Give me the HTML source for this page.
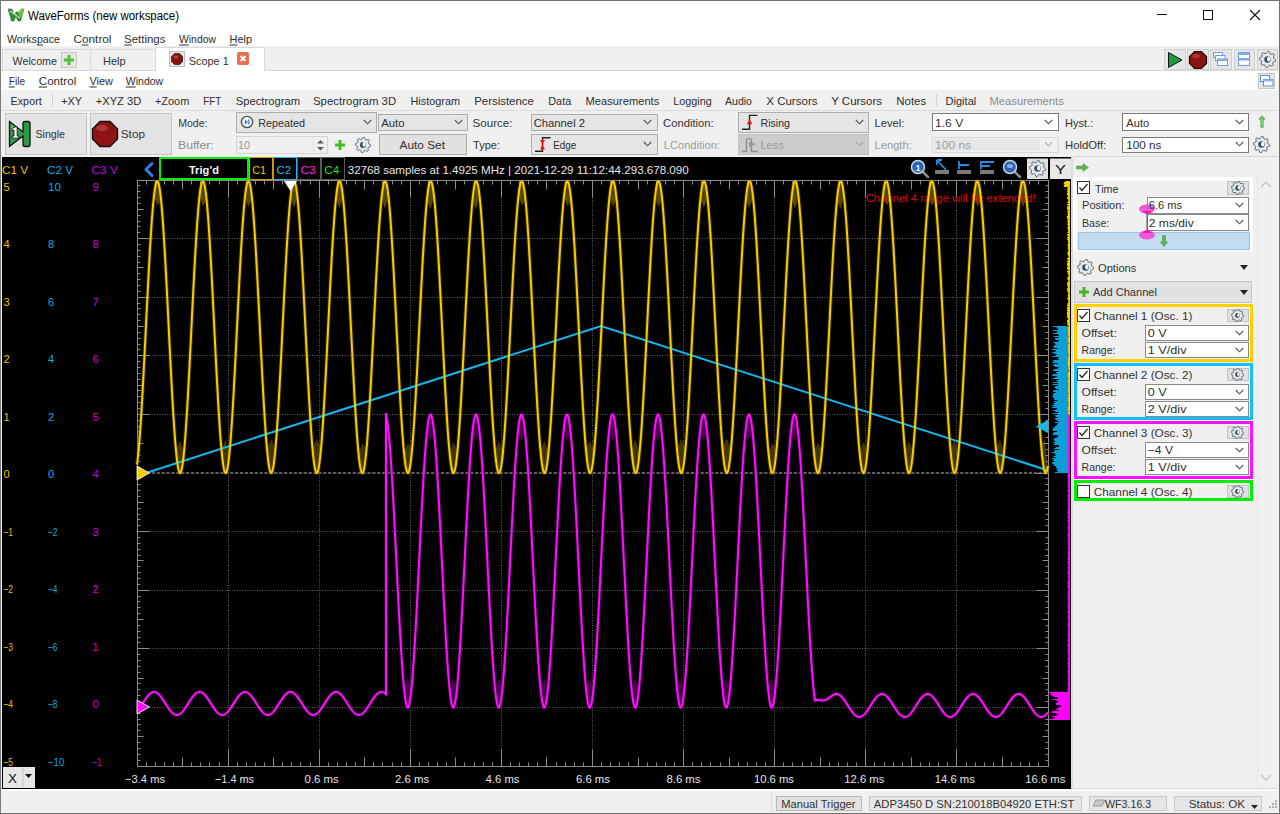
<!DOCTYPE html><html><head><meta charset="utf-8"><style>
*{margin:0;padding:0;box-sizing:border-box}
html,body{width:1280px;height:814px;overflow:hidden;background:#f0f0f0;font-family:"Liberation Sans",sans-serif;font-size:12px;color:#000}
.a{position:absolute;white-space:nowrap}
.t{position:absolute;white-space:nowrap;line-height:14px;font-size:12px}
.g{color:#8c8c8c}
.btn{position:absolute;background:#e1e1e1;border:1px solid #adadad}
.cmb{position:absolute;background:#fff;border:1px solid #7a7a7a}
.cmbg{position:absolute;background:#e5e5e5;border:1px solid #adadad}
.dis{position:absolute;background:#f0f0f0;border:1px solid #cccccc}

.u{text-decoration:underline}
</style></head><body><div class="a" style="left:0px;top:0px;width:1280px;height:46px;background:#fff;"></div><div class="a" style="left:0px;top:0px;width:1280px;height:1px;background:#6f6f6f;"></div><div class="a" style="left:0px;top:0px;width:1px;height:814px;background:#7a7a7a;"></div><div class="a" style="left:1279px;top:0px;width:1px;height:814px;background:#6f6f6f;"></div><div class="a" style="left:0px;top:813px;width:1280px;height:1px;background:#6f6f6f;"></div><svg class="a" style="left:7px;top:8px" width="18" height="15" viewBox="0 0 18 15">
<path d="M1 1 L5 1 L7.5 8 L9 4 L11 4 L12.5 8 L14 1 L17 1 L13.5 13 L11 13 L9 8 L7 13 L4.5 13 Z" fill="#1e9a3c" stroke="#555" stroke-width="0.6"/>
<path d="M3 3 L13 10" stroke="#b8f0a0" stroke-width="1.2"/>
<path d="M11 4 L14 1 L17 1 L13.5 10 Z" fill="#7cc83a"/>
</svg><div class="a" style="left:1157px;top:14px;width:10px;height:1px;background:#111;"></div><div class="a" style="left:1203px;top:10px;width:10px;height:10px;border:1px solid #111"></div><svg class="a" style="left:1249px;top:9px" width="12" height="12" viewBox="0 0 12 12"><path d="M1 1L11 11M11 1L1 11" stroke="#111" stroke-width="1.1"/></svg><div class="a" style="left:1px;top:46px;width:1277px;height:24px;background:#f0f0f0;"></div><div class="a" style="left:2px;top:49px;width:89px;height:22px;background:#f0f0f0;border:1px solid #d9d9d9;border-bottom:none"></div><div class="a" style="left:90px;top:49px;width:66px;height:22px;background:#f0f0f0;border:1px solid #d9d9d9;border-bottom:none"></div><div class="a" style="left:61px;top:52px;width:16px;height:16px;background:#e6e6e6;border:1px solid #c8c8c8"></div><svg class="a" style="left:62px;top:53px" width="14" height="14" viewBox="0 0 14 14"><path d="M7 2V12M2 7H12" stroke="#4fc42e" stroke-width="3"/></svg><div class="a" style="left:155px;top:47px;width:110px;height:24px;background:#fff;border:1px solid #d9d9d9;border-bottom:none"></div><div class="a" style="left:169px;top:51px;width:16px;height:16px;background:#e6e6e6;border:1px solid #bdbdbd"></div><svg class="a" style="left:171px;top:53px" width="12" height="12" viewBox="0 0 12 12"><path d="M3.5 0.5H8.5L11.5 3.5V8.5L8.5 11.5H3.5L0.5 8.5V3.5Z" fill="#8b1010" stroke="#222" stroke-width="0.8"/><ellipse cx="5" cy="4" rx="2.5" ry="1.5" fill="#d46060" opacity="0.6"/></svg><div class="a" style="left:237px;top:52px;width:12px;height:13px;background:#e8704a;border-radius:2px"></div><svg class="a" style="left:237px;top:52px" width="12" height="13" viewBox="0 0 12 13"><path d="M3.5 4L8.5 9M8.5 4L3.5 9" stroke="#fff" stroke-width="1.8"/></svg><div class="a" style="left:1px;top:70px;width:1277px;height:20px;background:#fff;"></div><div class="a" style="left:1px;top:70px;width:155px;height:1px;background:#dadada;"></div><div class="a" style="left:264px;top:70px;width:1014px;height:1px;background:#dadada;"></div><div class="a" style="left:1258px;top:73px;width:17px;height:16px;background:#e6e6e6;border:1px solid #c8c8c8"></div><svg class="a" style="left:1260px;top:75px" width="14" height="12" viewBox="0 0 14 12"><rect x="0.5" y="0.5" width="9" height="6" fill="#fff" stroke="#5b8fd6"/><rect x="3.5" y="4.5" width="9.5" height="6.5" fill="#fff" stroke="#5b8fd6"/><rect x="3.5" y="4.5" width="9.5" height="2" fill="#8fb5e8"/></svg><div class="btn" style="left:1164px;top:49px;width:22px;height:21px;background:#e6e6e6;border-color:#cfcfcf"></div><div class="btn" style="left:1187px;top:49px;width:22px;height:21px;background:#e6e6e6;border-color:#cfcfcf"></div><div class="btn" style="left:1210px;top:49px;width:22px;height:21px;background:#e6e6e6;border-color:#cfcfcf"></div><div class="btn" style="left:1234px;top:49px;width:21px;height:21px;background:#e6e6e6;border-color:#cfcfcf"></div><div class="btn" style="left:1257px;top:49px;width:21px;height:21px;background:#e6e6e6;border-color:#cfcfcf"></div><svg class="a" style="left:1166px;top:51px" width="18" height="18" viewBox="0 0 18 18"><path d="M2.5 1.5L16 9L2.5 16.5Z" fill="#1f9a3a" stroke="#111" stroke-width="1"/></svg><svg class="a" style="left:1188px;top:50px" width="20" height="20" viewBox="0 0 20 20"><path d="M6.5 1.5H13.5L18.5 6.5V13.5L13.5 18.5H6.5L1.5 13.5V6.5Z" fill="#8b1212" stroke="#111" stroke-width="1.2"/><ellipse cx="8" cy="6" rx="4" ry="2" fill="#c85a5a" opacity="0.5"/></svg><svg class="a" style="left:1213px;top:52px" width="16" height="15" viewBox="0 0 16 15"><rect x="0.5" y="0.5" width="9" height="5" fill="#fff" stroke="#6c9ee0"/><rect x="2.5" y="3.5" width="9.5" height="5" fill="#fff" stroke="#6c9ee0"/><rect x="4.5" y="7" width="10" height="6.5" fill="#fff" stroke="#6c9ee0"/><rect x="4.5" y="7" width="10" height="2" fill="#7ea9e6"/></svg><svg class="a" style="left:1237px;top:52px" width="15" height="15" viewBox="0 0 15 15"><rect x="1.5" y="0.5" width="11" height="13" fill="#fff" stroke="#6c9ee0"/><rect x="1.5" y="0.5" width="11" height="2.5" fill="#7ea9e6"/><rect x="1.5" y="6" width="11" height="2.5" fill="#7ea9e6"/></svg><svg class="a" style="left:1259px;top:51px" width="17" height="17" viewBox="0 0 17 17"><path d="M8.50,0.34 L10.09,0.50 L10.91,2.69 L11.99,3.27 L14.27,2.73 L15.28,3.97 L14.31,6.09 L14.67,7.27 L16.66,8.50 L16.50,10.09 L14.31,10.91 L13.73,11.99 L14.27,14.27 L13.03,15.28 L10.91,14.31 L9.73,14.67 L8.50,16.66 L6.91,16.50 L6.09,14.31 L5.01,13.73 L2.73,14.27 L1.72,13.03 L2.69,10.91 L2.33,9.73 L0.34,8.50 L0.50,6.91 L2.69,6.09 L3.27,5.01 L2.73,2.73 L3.97,1.72 L6.09,2.69 L7.27,2.33Z" fill="#e4e9ed" stroke="#60707b" stroke-width="1" stroke-linejoin="round"/><circle cx="8.5" cy="8.5" r="3.23" fill="#3c4c57"/><ellipse cx="9.69" cy="7.99" rx="1.70" ry="2.55" fill="#f4f6f8"/></svg><div class="a" style="left:1px;top:90px;width:1277px;height:20px;background:#f0f0f0;"></div><div class="a" style="left:1px;top:110px;width:1277px;height:1px;background:#dcdcdc;"></div><div class="a" style="left:52px;top:94px;width:1px;height:12px;background:#d0d0d0;"></div><div class="a" style="left:936px;top:94px;width:1px;height:12px;background:#d0d0d0;"></div><div class="btn" style="left:5px;top:113px;width:82px;height:42px;background:#e3e3e3;border-color:#c4c4c4"></div><svg class="a" style="left:8px;top:120px" width="24" height="28" viewBox="0 0 24 28"><path d="M1.5 1.5L15 12V3.5Q15 1.5 17 1.5H20Q22 1.5 22 3.5V24.5Q22 26.5 20 26.5H17Q15 26.5 15 24.5V16L1.5 26.5Z" fill="#2e9a48" stroke="#111" stroke-width="1.3"/><path d="M3 4 L12 11 L3 11Z" fill="#8fd0a0" opacity="0.6"/><path d="M4 8.5L7.5 6.8H9.2V16H10.8V18.2H4.2V16H6V10L4 10.8Z" fill="#fff" stroke="#111" stroke-width="0.9" stroke-linejoin="round"/></svg><div class="btn" style="left:90px;top:113px;width:82px;height:42px;background:#e3e3e3;border-color:#c4c4c4"></div><svg class="a" style="left:91px;top:120px" width="28" height="28" viewBox="0 0 28 28"><path d="M9 1.5H19L26.5 9V19L19 26.5H9L1.5 19V9Z" fill="#8e1414" stroke="#111" stroke-width="1.4"/><ellipse cx="11" cy="8" rx="6" ry="3" fill="#c86464" opacity="0.45"/></svg><div class="cmbg" style="left:236px;top:112px;width:141px;height:21px;background:#e5e5e5;border-color:#adadad"></div><svg class="a" style="left:240px;top:115px" width="14" height="14" viewBox="0 0 14 14"><circle cx="7" cy="7" r="5.6" fill="#f4f6fa" stroke="#555" stroke-width="1.4"/><path d="M4.8 4.5L8 7L4.8 9.5Z" fill="#3a7ad8"/><path d="M8.8 4.5V9.5" stroke="#3a7ad8" stroke-width="1.2"/></svg><svg class="a" style="left:362.5px;top:119px" width="9" height="6" viewBox="0 0 9 6"><path d="M0.8 1L4.5 4.8L8.2 1" fill="none" stroke="#555" stroke-width="1.15"/></svg><div class="cmbg" style="left:378px;top:114px;width:90px;height:17px;background:#e5e5e5;border-color:#adadad"></div><svg class="a" style="left:453.5px;top:119px" width="9" height="6" viewBox="0 0 9 6"><path d="M0.8 1L4.5 4.8L8.2 1" fill="none" stroke="#555" stroke-width="1.15"/></svg><div class="dis" style="left:236px;top:136px;width:92px;height:18px;background:#f0f0f0;border-color:#d4d4d4"></div><svg class="a" style="left:316px;top:138px" width="9" height="14" viewBox="0 0 9 14"><path d="M1 5.5L4.5 2L8 5.5ZM1 9L4.5 12.5L8 9Z" fill="#5a5a5a"/></svg><div class="a" style="left:313px;top:137px;width:1px;height:16px;background:#e0e0e0;"></div><svg class="a" style="left:334px;top:139px" width="12" height="12" viewBox="0 0 12 12"><path d="M6 1V11M1 6H11" stroke="#48b828" stroke-width="3"/></svg><svg class="a" style="left:355px;top:137px" width="16" height="16" viewBox="0 0 16 16"><path d="M8.00,0.32 L9.50,0.47 L10.27,2.53 L11.29,3.08 L13.43,2.57 L14.39,3.73 L13.47,5.73 L13.81,6.85 L15.68,8.00 L15.53,9.50 L13.47,10.27 L12.92,11.29 L13.43,13.43 L12.27,14.39 L10.27,13.47 L9.15,13.81 L8.00,15.68 L6.50,15.53 L5.73,13.47 L4.71,12.92 L2.57,13.43 L1.61,12.27 L2.53,10.27 L2.19,9.15 L0.32,8.00 L0.47,6.50 L2.53,5.73 L3.08,4.71 L2.57,2.57 L3.73,1.61 L5.73,2.53 L6.85,2.19Z" fill="#e4e9ed" stroke="#60707b" stroke-width="1" stroke-linejoin="round"/><circle cx="8.0" cy="8.0" r="3.04" fill="#3c4c57"/><ellipse cx="9.12" cy="7.52" rx="1.60" ry="2.40" fill="#f4f6f8"/></svg><div class="btn" style="left:379px;top:134px;width:88px;height:21px;background:#e1e1e1;border-color:#adadad"></div><div class="cmbg" style="left:531px;top:114px;width:127px;height:17px;background:#e5e5e5;border-color:#adadad"></div><svg class="a" style="left:642.5px;top:119px" width="9" height="6" viewBox="0 0 9 6"><path d="M0.8 1L4.5 4.8L8.2 1" fill="none" stroke="#555" stroke-width="1.15"/></svg><div class="cmbg" style="left:531px;top:134px;width:127px;height:21px;background:#e5e5e5;border-color:#adadad"></div><svg class="a" style="left:534px;top:136px" width="18" height="17" viewBox="0 0 18 17"><path d="M1 15.3H8.5V1.7H16.5" fill="none" stroke="#222" stroke-width="1.4"/><path d="M6 4H11L8.5 8.6Z M6 13.3H11L8.5 8.6Z" fill="#ff1010"/></svg><svg class="a" style="left:642.5px;top:141px" width="9" height="6" viewBox="0 0 9 6"><path d="M0.8 1L4.5 4.8L8.2 1" fill="none" stroke="#555" stroke-width="1.15"/></svg><div class="cmbg" style="left:738px;top:112px;width:131px;height:21px;background:#e5e5e5;border-color:#adadad"></div><svg class="a" style="left:741px;top:114px" width="18" height="17" viewBox="0 0 18 17"><path d="M1 15.2H8.5V1.4H16.5" fill="none" stroke="#222" stroke-width="1.4"/><path d="M5.8 10.2H11.2L8.5 5Z" fill="#ff1010"/></svg><svg class="a" style="left:854.5px;top:119px" width="9" height="6" viewBox="0 0 9 6"><path d="M0.8 1L4.5 4.8L8.2 1" fill="none" stroke="#555" stroke-width="1.15"/></svg><div class="a" style="left:738px;top:134px;width:131px;height:21px;background:#cccccc;border:1px solid #c0c0c0"></div><svg class="a" style="left:741px;top:136px" width="18" height="17" viewBox="0 0 18 17"><path d="M1 15.5H5.5V4Q5.5 2.6 7.5 2.6H8.5Q10.5 2.6 10.5 4V15.5H16.5" fill="none" stroke="#8c8c8c" stroke-width="1.4"/><path d="M8 5.3L15 8.3L8 11.3Z" fill="#9a9a9a"/></svg><svg class="a" style="left:854.5px;top:141px" width="9" height="6" viewBox="0 0 9 6"><path d="M0.8 1L4.5 4.8L8.2 1" fill="none" stroke="#a8a8a8" stroke-width="1.15"/></svg><div class="cmb" style="left:932px;top:113px;width:127px;height:18px;background:#fff;border-color:#7a7a7a"></div><svg class="a" style="left:1043.5px;top:119px" width="9" height="6" viewBox="0 0 9 6"><path d="M0.8 1L4.5 4.8L8.2 1" fill="none" stroke="#555" stroke-width="1.15"/></svg><div class="a" style="left:932px;top:137px;width:127px;height:16px;background:#f0f0f0;border:1px solid #d8d8d8"></div><div class="a" style="left:934px;top:139px;width:106px;height:12px;background:#e6e6e6;"></div><svg class="a" style="left:1043.5px;top:141px" width="9" height="6" viewBox="0 0 9 6"><path d="M0.8 1L4.5 4.8L8.2 1" fill="none" stroke="#b0b0b0" stroke-width="1.15"/></svg><div class="cmb" style="left:1122px;top:113px;width:127px;height:18px;background:#fff;border-color:#7a7a7a"></div><svg class="a" style="left:1234.5px;top:119px" width="9" height="6" viewBox="0 0 9 6"><path d="M0.8 1L4.5 4.8L8.2 1" fill="none" stroke="#555" stroke-width="1.15"/></svg><div class="cmb" style="left:1122px;top:137px;width:127px;height:16px;background:#fff;border-color:#7a7a7a"></div><svg class="a" style="left:1234.5px;top:141px" width="9" height="6" viewBox="0 0 9 6"><path d="M0.8 1L4.5 4.8L8.2 1" fill="none" stroke="#555" stroke-width="1.15"/></svg><svg class="a" style="left:1258px;top:115px" width="8" height="13" viewBox="0 0 8 13"><path d="M4 0.8L0.8 4.2H2.8V12.3H5.2V4.2H7.2Z" fill="#5cc05a" stroke="#3f9a40" stroke-width="0.6"/><path d="M4 3V11" stroke="#a8e8a0" stroke-width="0.8"/></svg><svg class="a" style="left:1253px;top:136px" width="17" height="17" viewBox="0 0 17 17"><path d="M8.50,0.34 L10.09,0.50 L10.91,2.69 L11.99,3.27 L14.27,2.73 L15.28,3.97 L14.31,6.09 L14.67,7.27 L16.66,8.50 L16.50,10.09 L14.31,10.91 L13.73,11.99 L14.27,14.27 L13.03,15.28 L10.91,14.31 L9.73,14.67 L8.50,16.66 L6.91,16.50 L6.09,14.31 L5.01,13.73 L2.73,14.27 L1.72,13.03 L2.69,10.91 L2.33,9.73 L0.34,8.50 L0.50,6.91 L2.69,6.09 L3.27,5.01 L2.73,2.73 L3.97,1.72 L6.09,2.69 L7.27,2.33Z" fill="#e4e9ed" stroke="#60707b" stroke-width="1" stroke-linejoin="round"/><circle cx="8.5" cy="8.5" r="3.23" fill="#3c4c57"/><ellipse cx="9.69" cy="7.99" rx="1.70" ry="2.55" fill="#f4f6f8"/></svg><div class="a" style="left:2px;top:157px;width:1069px;height:632px;background:#000;"></div><svg class="a" style="left:0;top:0" width="1280" height="814" viewBox="0 0 1280 814"><line x1="228.5" y1="180" x2="228.5" y2="766" stroke="#626262" stroke-width="1" stroke-dasharray="1 1.5"/><line x1="319.5" y1="180" x2="319.5" y2="766" stroke="#626262" stroke-width="1" stroke-dasharray="1 1.5"/><line x1="410.5" y1="180" x2="410.5" y2="766" stroke="#626262" stroke-width="1" stroke-dasharray="1 1.5"/><line x1="501.5" y1="180" x2="501.5" y2="766" stroke="#626262" stroke-width="1" stroke-dasharray="1 1.5"/><line x1="592.5" y1="180" x2="592.5" y2="766" stroke="#626262" stroke-width="1" stroke-dasharray="1 1.5"/><line x1="683.5" y1="180" x2="683.5" y2="766" stroke="#626262" stroke-width="1" stroke-dasharray="1 1.5"/><line x1="774.5" y1="180" x2="774.5" y2="766" stroke="#626262" stroke-width="1" stroke-dasharray="1 1.5"/><line x1="865.5" y1="180" x2="865.5" y2="766" stroke="#626262" stroke-width="1" stroke-dasharray="1 1.5"/><line x1="956.5" y1="180" x2="956.5" y2="766" stroke="#626262" stroke-width="1" stroke-dasharray="1 1.5"/><line x1="137" y1="238.5" x2="1048" y2="238.5" stroke="#626262" stroke-width="1" stroke-dasharray="1 1.5"/><line x1="137" y1="297.5" x2="1048" y2="297.5" stroke="#626262" stroke-width="1" stroke-dasharray="1 1.5"/><line x1="137" y1="355.5" x2="1048" y2="355.5" stroke="#626262" stroke-width="1" stroke-dasharray="1 1.5"/><line x1="137" y1="414.5" x2="1048" y2="414.5" stroke="#626262" stroke-width="1" stroke-dasharray="1 1.5"/><line x1="137" y1="531.5" x2="1048" y2="531.5" stroke="#626262" stroke-width="1" stroke-dasharray="1 1.5"/><line x1="137" y1="590.5" x2="1048" y2="590.5" stroke="#626262" stroke-width="1" stroke-dasharray="1 1.5"/><line x1="137" y1="648.5" x2="1048" y2="648.5" stroke="#626262" stroke-width="1" stroke-dasharray="1 1.5"/><line x1="137" y1="707.5" x2="1048" y2="707.5" stroke="#626262" stroke-width="1" stroke-dasharray="1 1.5"/><line x1="137" y1="473" x2="1048" y2="473" stroke="#7c7c7c" stroke-width="1.6" stroke-dasharray="3.3 1.6"/><rect x="137.5" y="180.5" width="911" height="586" fill="none" stroke="#8c8c8c" stroke-width="1"/><path d="M146.5 766.5v-4M146.5 180.5v4M155.5 766.5v-4M155.5 180.5v4M164.5 766.5v-4M164.5 180.5v4M173.5 766.5v-4M173.5 180.5v4M182.5 766.5v-9M182.5 180.5v9M191.5 766.5v-4M191.5 180.5v4M200.5 766.5v-4M200.5 180.5v4M209.5 766.5v-4M209.5 180.5v4M219.5 766.5v-4M219.5 180.5v4M228.5 766.5v-17M228.5 180.5v17M237.5 766.5v-4M237.5 180.5v4M246.5 766.5v-4M246.5 180.5v4M255.5 766.5v-4M255.5 180.5v4M264.5 766.5v-4M264.5 180.5v4M273.5 766.5v-9M273.5 180.5v9M282.5 766.5v-4M282.5 180.5v4M291.5 766.5v-4M291.5 180.5v4M300.5 766.5v-4M300.5 180.5v4M310.5 766.5v-4M310.5 180.5v4M319.5 766.5v-17M319.5 180.5v17M328.5 766.5v-4M328.5 180.5v4M337.5 766.5v-4M337.5 180.5v4M346.5 766.5v-4M346.5 180.5v4M355.5 766.5v-4M355.5 180.5v4M364.5 766.5v-9M364.5 180.5v9M373.5 766.5v-4M373.5 180.5v4M382.5 766.5v-4M382.5 180.5v4M392.5 766.5v-4M392.5 180.5v4M401.5 766.5v-4M401.5 180.5v4M410.5 766.5v-17M410.5 180.5v17M419.5 766.5v-4M419.5 180.5v4M428.5 766.5v-4M428.5 180.5v4M437.5 766.5v-4M437.5 180.5v4M446.5 766.5v-4M446.5 180.5v4M455.5 766.5v-9M455.5 180.5v9M464.5 766.5v-4M464.5 180.5v4M474.5 766.5v-4M474.5 180.5v4M483.5 766.5v-4M483.5 180.5v4M492.5 766.5v-4M492.5 180.5v4M501.5 766.5v-17M501.5 180.5v17M510.5 766.5v-4M510.5 180.5v4M519.5 766.5v-4M519.5 180.5v4M528.5 766.5v-4M528.5 180.5v4M537.5 766.5v-4M537.5 180.5v4M546.5 766.5v-9M546.5 180.5v9M556.5 766.5v-4M556.5 180.5v4M565.5 766.5v-4M565.5 180.5v4M574.5 766.5v-4M574.5 180.5v4M583.5 766.5v-4M583.5 180.5v4M592.5 766.5v-17M592.5 180.5v17M601.5 766.5v-4M601.5 180.5v4M610.5 766.5v-4M610.5 180.5v4M619.5 766.5v-4M619.5 180.5v4M628.5 766.5v-4M628.5 180.5v4M638.5 766.5v-9M638.5 180.5v9M647.5 766.5v-4M647.5 180.5v4M656.5 766.5v-4M656.5 180.5v4M665.5 766.5v-4M665.5 180.5v4M674.5 766.5v-4M674.5 180.5v4M683.5 766.5v-17M683.5 180.5v17M692.5 766.5v-4M692.5 180.5v4M701.5 766.5v-4M701.5 180.5v4M710.5 766.5v-4M710.5 180.5v4M720.5 766.5v-4M720.5 180.5v4M729.5 766.5v-9M729.5 180.5v9M738.5 766.5v-4M738.5 180.5v4M747.5 766.5v-4M747.5 180.5v4M756.5 766.5v-4M756.5 180.5v4M765.5 766.5v-4M765.5 180.5v4M774.5 766.5v-17M774.5 180.5v17M783.5 766.5v-4M783.5 180.5v4M792.5 766.5v-4M792.5 180.5v4M802.5 766.5v-4M802.5 180.5v4M811.5 766.5v-4M811.5 180.5v4M820.5 766.5v-9M820.5 180.5v9M829.5 766.5v-4M829.5 180.5v4M838.5 766.5v-4M838.5 180.5v4M847.5 766.5v-4M847.5 180.5v4M856.5 766.5v-4M856.5 180.5v4M865.5 766.5v-17M865.5 180.5v17M874.5 766.5v-4M874.5 180.5v4M884.5 766.5v-4M884.5 180.5v4M893.5 766.5v-4M893.5 180.5v4M902.5 766.5v-4M902.5 180.5v4M911.5 766.5v-9M911.5 180.5v9M920.5 766.5v-4M920.5 180.5v4M929.5 766.5v-4M929.5 180.5v4M938.5 766.5v-4M938.5 180.5v4M947.5 766.5v-4M947.5 180.5v4M956.5 766.5v-17M956.5 180.5v17M966.5 766.5v-4M966.5 180.5v4M975.5 766.5v-4M975.5 180.5v4M984.5 766.5v-4M984.5 180.5v4M993.5 766.5v-4M993.5 180.5v4M1002.5 766.5v-9M1002.5 180.5v9M1011.5 766.5v-4M1011.5 180.5v4M1020.5 766.5v-4M1020.5 180.5v4M1029.5 766.5v-4M1029.5 180.5v4M1038.5 766.5v-4M1038.5 180.5v4M137.5 185.5h3M1048.5 185.5h-3M137.5 191.5h3M1048.5 191.5h-3M137.5 197.5h3M1048.5 197.5h-3M137.5 203.5h3M1048.5 203.5h-3M137.5 209.5h6M1048.5 209.5h-6M137.5 215.5h3M1048.5 215.5h-3M137.5 221.5h3M1048.5 221.5h-3M137.5 226.5h3M1048.5 226.5h-3M137.5 232.5h3M1048.5 232.5h-3M137.5 238.5h12M1048.5 238.5h-12M137.5 244.5h3M1048.5 244.5h-3M137.5 250.5h3M1048.5 250.5h-3M137.5 256.5h3M1048.5 256.5h-3M137.5 262.5h3M1048.5 262.5h-3M137.5 267.5h6M1048.5 267.5h-6M137.5 273.5h3M1048.5 273.5h-3M137.5 279.5h3M1048.5 279.5h-3M137.5 285.5h3M1048.5 285.5h-3M137.5 291.5h3M1048.5 291.5h-3M137.5 297.5h12M1048.5 297.5h-12M137.5 303.5h3M1048.5 303.5h-3M137.5 308.5h3M1048.5 308.5h-3M137.5 314.5h3M1048.5 314.5h-3M137.5 320.5h3M1048.5 320.5h-3M137.5 326.5h6M1048.5 326.5h-6M137.5 332.5h3M1048.5 332.5h-3M137.5 338.5h3M1048.5 338.5h-3M137.5 344.5h3M1048.5 344.5h-3M137.5 349.5h3M1048.5 349.5h-3M137.5 355.5h12M1048.5 355.5h-12M137.5 361.5h3M1048.5 361.5h-3M137.5 367.5h3M1048.5 367.5h-3M137.5 373.5h3M1048.5 373.5h-3M137.5 379.5h3M1048.5 379.5h-3M137.5 385.5h6M1048.5 385.5h-6M137.5 390.5h3M1048.5 390.5h-3M137.5 396.5h3M1048.5 396.5h-3M137.5 402.5h3M1048.5 402.5h-3M137.5 408.5h3M1048.5 408.5h-3M137.5 414.5h12M1048.5 414.5h-12M137.5 420.5h3M1048.5 420.5h-3M137.5 426.5h3M1048.5 426.5h-3M137.5 431.5h3M1048.5 431.5h-3M137.5 437.5h3M1048.5 437.5h-3M137.5 443.5h6M1048.5 443.5h-6M137.5 449.5h3M1048.5 449.5h-3M137.5 455.5h3M1048.5 455.5h-3M137.5 461.5h3M1048.5 461.5h-3M137.5 467.5h3M1048.5 467.5h-3M137.5 473.5h12M1048.5 473.5h-12M137.5 478.5h3M1048.5 478.5h-3M137.5 484.5h3M1048.5 484.5h-3M137.5 490.5h3M1048.5 490.5h-3M137.5 496.5h3M1048.5 496.5h-3M137.5 502.5h6M1048.5 502.5h-6M137.5 508.5h3M1048.5 508.5h-3M137.5 514.5h3M1048.5 514.5h-3M137.5 519.5h3M1048.5 519.5h-3M137.5 525.5h3M1048.5 525.5h-3M137.5 531.5h12M1048.5 531.5h-12M137.5 537.5h3M1048.5 537.5h-3M137.5 543.5h3M1048.5 543.5h-3M137.5 549.5h3M1048.5 549.5h-3M137.5 555.5h3M1048.5 555.5h-3M137.5 560.5h6M1048.5 560.5h-6M137.5 566.5h3M1048.5 566.5h-3M137.5 572.5h3M1048.5 572.5h-3M137.5 578.5h3M1048.5 578.5h-3M137.5 584.5h3M1048.5 584.5h-3M137.5 590.5h12M1048.5 590.5h-12M137.5 596.5h3M1048.5 596.5h-3M137.5 601.5h3M1048.5 601.5h-3M137.5 607.5h3M1048.5 607.5h-3M137.5 613.5h3M1048.5 613.5h-3M137.5 619.5h6M1048.5 619.5h-6M137.5 625.5h3M1048.5 625.5h-3M137.5 631.5h3M1048.5 631.5h-3M137.5 637.5h3M1048.5 637.5h-3M137.5 642.5h3M1048.5 642.5h-3M137.5 648.5h12M1048.5 648.5h-12M137.5 654.5h3M1048.5 654.5h-3M137.5 660.5h3M1048.5 660.5h-3M137.5 666.5h3M1048.5 666.5h-3M137.5 672.5h3M1048.5 672.5h-3M137.5 678.5h6M1048.5 678.5h-6M137.5 683.5h3M1048.5 683.5h-3M137.5 689.5h3M1048.5 689.5h-3M137.5 695.5h3M1048.5 695.5h-3M137.5 701.5h3M1048.5 701.5h-3M137.5 707.5h12M1048.5 707.5h-12M137.5 713.5h3M1048.5 713.5h-3M137.5 719.5h3M1048.5 719.5h-3M137.5 724.5h3M1048.5 724.5h-3M137.5 730.5h3M1048.5 730.5h-3M137.5 736.5h6M1048.5 736.5h-6M137.5 742.5h3M1048.5 742.5h-3M137.5 748.5h3M1048.5 748.5h-3M137.5 754.5h3M1048.5 754.5h-3M137.5 760.5h3M1048.5 760.5h-3" stroke="#8c8c8c" stroke-width="1" fill="none"/><path d="M154.00,195.86 L154.50,191.75 L155.00,188.28 L155.50,185.48 L156.00,183.34 L156.50,181.89 L157.00,181.50 L157.50,181.50 L158.00,181.68 L158.50,182.99 L159.00,184.99 L159.50,187.67 L160.00,191.01 L160.50,194.99 L161.00,199.60 L157.50,205.86ZM199.50,196.40 L200.00,192.21 L200.50,188.66 L201.00,185.78 L201.50,183.56 L202.00,182.03 L202.50,181.50 L203.00,181.50 L203.50,181.57 L204.00,182.80 L204.50,184.72 L205.00,187.31 L205.50,190.57 L206.00,194.48 L206.50,199.01 L203.00,206.40ZM245.00,196.94 L245.50,192.68 L246.00,189.06 L246.50,186.09 L247.00,183.79 L247.50,182.17 L248.00,181.50 L248.50,181.50 L249.00,181.50 L249.50,182.62 L250.00,184.45 L250.50,186.97 L251.00,190.14 L251.50,193.97 L252.00,198.44 L248.50,206.94ZM290.50,197.49 L291.00,193.16 L291.50,189.46 L292.00,186.41 L292.50,184.03 L293.00,182.33 L293.50,181.50 L294.00,181.50 L294.50,181.50 L295.00,182.44 L295.50,184.20 L296.00,186.63 L296.50,189.73 L297.00,193.48 L297.50,197.87 L294.00,207.49ZM336.00,198.06 L336.50,193.64 L337.00,189.87 L337.50,186.74 L338.00,184.28 L338.50,182.50 L339.00,181.50 L339.50,181.50 L340.00,181.50 L340.50,182.28 L341.00,183.95 L341.50,186.30 L342.00,189.32 L342.50,193.00 L343.00,197.31 L339.50,208.06ZM381.50,198.63 L382.00,194.14 L382.50,190.29 L383.00,187.08 L383.50,184.54 L384.00,182.68 L384.50,181.50 L385.00,181.50 L385.50,181.50 L386.00,182.12 L386.50,183.71 L387.00,185.98 L387.50,188.92 L388.00,192.52 L388.50,196.76 L385.00,208.63ZM427.00,199.21 L427.50,194.65 L428.00,190.71 L428.50,187.43 L429.00,184.81 L429.50,182.86 L430.00,181.60 L430.50,181.50 L431.00,181.50 L431.50,181.98 L432.00,183.49 L432.50,185.68 L433.00,188.54 L433.50,192.06 L434.00,196.22 L430.50,209.21ZM472.50,199.80 L473.00,195.16 L473.50,191.15 L474.00,187.79 L474.50,185.09 L475.00,183.06 L475.50,181.72 L476.00,181.50 L476.50,181.50 L477.00,181.84 L477.50,183.27 L478.00,185.38 L478.50,188.16 L479.00,191.60 L479.50,195.68 L476.00,209.80ZM518.50,195.68 L519.00,191.60 L519.50,188.16 L520.00,185.38 L520.50,183.27 L521.00,181.84 L521.50,181.50 L522.00,181.50 L522.50,181.72 L523.00,183.06 L523.50,185.09 L524.00,187.79 L524.50,191.15 L525.00,195.16 L525.50,199.80 L522.00,205.68ZM564.00,196.22 L564.50,192.06 L565.00,188.54 L565.50,185.68 L566.00,183.49 L566.50,181.98 L567.00,181.50 L567.50,181.50 L568.00,181.60 L568.50,182.86 L569.00,184.81 L569.50,187.43 L570.00,190.71 L570.50,194.65 L571.00,199.21 L567.50,206.22ZM609.50,196.76 L610.00,192.52 L610.50,188.92 L611.00,185.98 L611.50,183.71 L612.00,182.12 L612.50,181.50 L613.00,181.50 L613.50,181.50 L614.00,182.68 L614.50,184.54 L615.00,187.08 L615.50,190.29 L616.00,194.14 L616.50,198.63 L613.00,206.76ZM655.00,197.31 L655.50,193.00 L656.00,189.32 L656.50,186.30 L657.00,183.95 L657.50,182.28 L658.00,181.50 L658.50,181.50 L659.00,181.50 L659.50,182.50 L660.00,184.28 L660.50,186.74 L661.00,189.87 L661.50,193.64 L662.00,198.06 L658.50,207.31ZM700.50,197.87 L701.00,193.48 L701.50,189.73 L702.00,186.63 L702.50,184.20 L703.00,182.44 L703.50,181.50 L704.00,181.50 L704.50,181.50 L705.00,182.33 L705.50,184.03 L706.00,186.41 L706.50,189.46 L707.00,193.16 L707.50,197.49 L704.00,207.87ZM746.00,198.44 L746.50,193.97 L747.00,190.14 L747.50,186.97 L748.00,184.45 L748.50,182.62 L749.00,181.50 L749.50,181.50 L750.00,181.50 L750.50,182.17 L751.00,183.79 L751.50,186.09 L752.00,189.06 L752.50,192.68 L753.00,196.94 L749.50,208.44ZM791.50,199.01 L792.00,194.48 L792.50,190.57 L793.00,187.31 L793.50,184.72 L794.00,182.80 L794.50,181.57 L795.00,181.50 L795.50,181.50 L796.00,182.03 L796.50,183.56 L797.00,185.78 L797.50,188.66 L798.00,192.21 L798.50,196.40 L795.00,209.01ZM837.00,199.60 L837.50,194.99 L838.00,191.01 L838.50,187.67 L839.00,184.99 L839.50,182.99 L840.00,181.68 L840.50,181.50 L841.00,181.50 L841.50,181.89 L842.00,183.34 L842.50,185.48 L843.00,188.28 L843.50,191.75 L844.00,195.86 L840.50,209.60ZM883.00,195.51 L883.50,191.45 L884.00,188.03 L884.50,185.28 L885.00,183.20 L885.50,181.80 L886.00,181.50 L886.50,181.50 L887.00,181.76 L887.50,183.13 L888.00,185.18 L888.50,187.91 L889.00,191.30 L889.50,195.33 L890.00,199.99 L886.50,205.51ZM928.50,196.04 L929.00,191.90 L929.50,188.41 L930.00,185.57 L930.50,183.41 L931.00,181.93 L931.50,181.50 L932.00,181.50 L932.50,181.64 L933.00,182.93 L933.50,184.90 L934.00,187.55 L934.50,190.86 L935.00,194.82 L935.50,199.40 L932.00,206.04ZM974.00,196.58 L974.50,192.37 L975.00,188.79 L975.50,185.88 L976.00,183.64 L976.50,182.07 L977.00,181.50 L977.50,181.50 L978.00,181.53 L978.50,182.74 L979.00,184.63 L979.50,187.20 L980.00,190.43 L980.50,194.31 L981.00,198.82 L977.50,206.58ZM1019.50,197.12 L1020.00,192.84 L1020.50,189.19 L1021.00,186.19 L1021.50,183.87 L1022.00,182.23 L1022.50,181.50 L1023.00,181.50 L1023.50,181.50 L1024.00,182.56 L1024.50,184.37 L1025.00,186.85 L1025.50,190.00 L1026.00,193.81 L1026.50,198.25 L1023.00,207.12Z" fill="#806a00" opacity="0.65"/><path d="M137.00,464.54 L137.50,460.84 L138.00,456.51 L138.50,451.55 L137.75,454.54ZM176.00,450.49 L176.50,455.56 L177.00,460.03 L177.50,463.86 L178.00,467.03 L178.50,469.55 L179.00,471.38 L179.50,472.53 L180.00,472.99 L180.50,472.76 L181.00,471.83 L181.50,470.21 L182.00,467.91 L182.50,464.94 L183.00,461.32 L183.50,457.06 L184.00,452.18 L180.00,440.49ZM221.50,449.84 L222.00,454.99 L222.50,459.52 L223.00,463.43 L223.50,466.69 L224.00,469.28 L224.50,471.20 L225.00,472.43 L225.50,472.97 L226.00,472.82 L226.50,471.97 L227.00,470.44 L227.50,468.22 L228.00,465.34 L228.50,461.79 L229.00,457.60 L229.50,452.80 L225.50,439.84ZM267.00,449.19 L267.50,454.40 L268.00,459.01 L268.50,462.99 L269.00,466.33 L269.50,469.01 L270.00,471.01 L270.50,472.32 L271.00,472.94 L271.50,472.88 L272.00,472.11 L272.50,470.66 L273.00,468.52 L273.50,465.72 L274.00,462.25 L274.50,458.14 L275.00,453.41 L275.50,448.07 L271.25,439.19ZM312.50,448.52 L313.00,453.81 L313.50,458.49 L314.00,462.55 L314.50,465.97 L315.00,468.72 L315.50,470.80 L316.00,472.20 L316.50,472.91 L317.00,472.92 L317.50,472.24 L318.00,470.87 L318.50,468.82 L319.00,466.09 L319.50,462.70 L320.00,458.67 L320.50,454.01 L321.00,448.74 L316.75,438.52ZM358.50,453.20 L359.00,457.96 L359.50,462.10 L360.00,465.59 L360.50,468.43 L361.00,470.59 L361.50,472.07 L362.00,472.86 L362.50,472.96 L363.00,472.36 L363.50,471.07 L364.00,469.10 L364.50,466.45 L365.00,463.14 L365.50,459.18 L366.00,454.60 L366.50,449.41 L362.50,443.20ZM404.00,452.59 L404.50,457.42 L405.00,461.63 L405.50,465.21 L406.00,468.12 L406.50,470.36 L407.00,471.93 L407.50,472.80 L408.00,472.98 L408.50,472.47 L409.00,471.26 L409.50,469.37 L410.00,466.80 L410.50,463.57 L411.00,459.69 L411.50,455.18 L412.00,450.06 L408.00,442.59ZM449.50,451.97 L450.00,456.88 L450.50,461.16 L451.00,464.81 L451.50,467.81 L452.00,470.13 L452.50,471.77 L453.00,472.73 L453.50,473.00 L454.00,472.56 L454.50,471.44 L455.00,469.63 L455.50,467.15 L456.00,464.00 L456.50,460.19 L457.00,455.75 L457.50,450.71 L453.50,441.97ZM495.00,451.34 L495.50,456.32 L496.00,460.68 L496.50,464.41 L497.00,467.48 L497.50,469.89 L498.00,471.61 L498.50,472.65 L499.00,473.00 L499.50,472.65 L500.00,471.61 L500.50,469.89 L501.00,467.48 L501.50,464.41 L502.00,460.68 L502.50,456.32 L503.00,451.34 L499.00,441.34ZM540.50,450.71 L541.00,455.75 L541.50,460.19 L542.00,464.00 L542.50,467.15 L543.00,469.63 L543.50,471.44 L544.00,472.56 L544.50,473.00 L545.00,472.73 L545.50,471.77 L546.00,470.13 L546.50,467.81 L547.00,464.81 L547.50,461.16 L548.00,456.88 L548.50,451.97 L544.50,440.71ZM586.00,450.06 L586.50,455.18 L587.00,459.69 L587.50,463.57 L588.00,466.80 L588.50,469.37 L589.00,471.26 L589.50,472.47 L590.00,472.98 L590.50,472.80 L591.00,471.93 L591.50,470.36 L592.00,468.12 L592.50,465.21 L593.00,461.63 L593.50,457.42 L594.00,452.59 L590.00,440.06ZM631.50,449.41 L632.00,454.60 L632.50,459.18 L633.00,463.14 L633.50,466.45 L634.00,469.10 L634.50,471.07 L635.00,472.36 L635.50,472.96 L636.00,472.86 L636.50,472.07 L637.00,470.59 L637.50,468.43 L638.00,465.59 L638.50,462.10 L639.00,457.96 L639.50,453.20 L635.50,439.41ZM677.00,448.74 L677.50,454.01 L678.00,458.67 L678.50,462.70 L679.00,466.09 L679.50,468.82 L680.00,470.87 L680.50,472.24 L681.00,472.92 L681.50,472.91 L682.00,472.20 L682.50,470.80 L683.00,468.72 L683.50,465.97 L684.00,462.55 L684.50,458.49 L685.00,453.81 L685.50,448.52 L681.25,438.74ZM722.50,448.07 L723.00,453.41 L723.50,458.14 L724.00,462.25 L724.50,465.72 L725.00,468.52 L725.50,470.66 L726.00,472.11 L726.50,472.88 L727.00,472.94 L727.50,472.32 L728.00,471.01 L728.50,469.01 L729.00,466.33 L729.50,462.99 L730.00,459.01 L730.50,454.40 L731.00,449.19 L726.75,438.07ZM768.50,452.80 L769.00,457.60 L769.50,461.79 L770.00,465.34 L770.50,468.22 L771.00,470.44 L771.50,471.97 L772.00,472.82 L772.50,472.97 L773.00,472.43 L773.50,471.20 L774.00,469.28 L774.50,466.69 L775.00,463.43 L775.50,459.52 L776.00,454.99 L776.50,449.84 L772.50,442.80ZM814.00,452.18 L814.50,457.06 L815.00,461.32 L815.50,464.94 L816.00,467.91 L816.50,470.21 L817.00,471.83 L817.50,472.76 L818.00,472.99 L818.50,472.53 L819.00,471.38 L819.50,469.55 L820.00,467.03 L820.50,463.86 L821.00,460.03 L821.50,455.56 L822.00,450.49 L818.00,442.18ZM859.50,451.55 L860.00,456.51 L860.50,460.84 L861.00,464.54 L861.50,467.59 L862.00,469.97 L862.50,471.67 L863.00,472.68 L863.50,473.00 L864.00,472.62 L864.50,471.56 L865.00,469.80 L865.50,467.37 L866.00,464.27 L866.50,460.52 L867.00,456.13 L867.50,451.13 L863.50,441.55ZM905.00,450.92 L905.50,455.94 L906.00,460.36 L906.50,464.13 L907.00,467.26 L907.50,469.72 L908.00,471.50 L908.50,472.60 L909.00,473.00 L909.50,472.71 L910.00,471.72 L910.50,470.05 L911.00,467.70 L911.50,464.68 L912.00,461.00 L912.50,456.69 L913.00,451.76 L909.00,440.92ZM950.50,450.28 L951.00,455.37 L951.50,459.86 L952.00,463.71 L952.50,466.92 L953.00,469.46 L953.50,471.32 L954.00,472.50 L954.50,472.99 L955.00,472.78 L955.50,471.88 L956.00,470.29 L956.50,468.02 L957.00,465.08 L957.50,461.48 L958.00,457.24 L958.50,452.39 L954.50,440.28ZM996.00,449.62 L996.50,454.79 L997.00,459.35 L997.50,463.29 L998.00,466.57 L998.50,469.19 L999.00,471.14 L999.50,472.40 L1000.00,472.96 L1000.50,472.84 L1001.00,472.02 L1001.50,470.51 L1002.00,468.32 L1002.50,465.46 L1003.00,461.94 L1003.50,457.78 L1004.00,453.00 L1000.00,439.62ZM1041.50,448.96 L1042.00,454.20 L1042.50,458.84 L1043.00,462.85 L1043.50,466.21 L1044.00,468.91 L1044.50,470.94 L1045.00,472.28 L1045.50,472.93 L1046.00,472.89 L1046.50,472.16 L1047.00,470.73 L1047.50,468.62 L1048.00,465.84 L1044.75,438.96Z" fill="#806a00" opacity="0.5"/><path d="M427.00,431.28 L427.50,426.89 L428.00,423.14 L428.50,420.05 L429.00,417.63 L429.50,415.89 L430.00,414.85 L430.50,414.50 L431.00,414.85 L431.50,415.89 L432.00,417.63 L432.50,420.05 L433.00,423.14 L433.50,426.89 L434.00,431.28 L430.50,441.28ZM472.50,431.28 L473.00,426.89 L473.50,423.14 L474.00,420.05 L474.50,417.63 L475.00,415.89 L475.50,414.85 L476.00,414.50 L476.50,414.85 L477.00,415.89 L477.50,417.63 L478.00,420.05 L478.50,423.14 L479.00,426.89 L479.50,431.28 L476.00,441.28ZM518.00,431.28 L518.50,426.89 L519.00,423.14 L519.50,420.05 L520.00,417.63 L520.50,415.89 L521.00,414.85 L521.50,414.50 L522.00,414.85 L522.50,415.89 L523.00,417.63 L523.50,420.05 L524.00,423.14 L524.50,426.89 L525.00,431.28 L521.50,441.28ZM563.50,431.28 L564.00,426.89 L564.50,423.14 L565.00,420.05 L565.50,417.63 L566.00,415.89 L566.50,414.85 L567.00,414.50 L567.50,414.85 L568.00,415.89 L568.50,417.63 L569.00,420.05 L569.50,423.14 L570.00,426.89 L570.50,431.28 L567.00,441.28ZM609.00,431.28 L609.50,426.89 L610.00,423.14 L610.50,420.05 L611.00,417.63 L611.50,415.89 L612.00,414.85 L612.50,414.50 L613.00,414.85 L613.50,415.89 L614.00,417.63 L614.50,420.05 L615.00,423.14 L615.50,426.89 L616.00,431.28 L612.50,441.28ZM654.50,431.28 L655.00,426.89 L655.50,423.14 L656.00,420.05 L656.50,417.63 L657.00,415.89 L657.50,414.85 L658.00,414.50 L658.50,414.85 L659.00,415.89 L659.50,417.63 L660.00,420.05 L660.50,423.14 L661.00,426.89 L661.50,431.28 L658.00,441.28ZM700.00,431.28 L700.50,426.89 L701.00,423.14 L701.50,420.05 L702.00,417.63 L702.50,415.89 L703.00,414.85 L703.50,414.50 L704.00,414.85 L704.50,415.89 L705.00,417.63 L705.50,420.05 L706.00,423.14 L706.50,426.89 L707.00,431.28 L703.50,441.28ZM745.50,431.28 L746.00,426.89 L746.50,423.14 L747.00,420.05 L747.50,417.63 L748.00,415.89 L748.50,414.85 L749.00,414.50 L749.50,414.85 L750.00,415.89 L750.50,417.63 L751.00,420.05 L751.50,423.14 L752.00,426.89 L752.50,431.28 L749.00,441.28ZM791.00,431.28 L791.50,426.89 L792.00,423.14 L792.50,420.05 L793.00,417.63 L793.50,415.89 L794.00,414.85 L794.50,414.50 L795.00,414.85 L795.50,415.89 L796.00,417.63 L796.50,420.05 L797.00,423.14 L797.50,426.89 L798.00,431.28 L794.50,441.28Z" fill="#800080" opacity="0.55"/><path d="M404.00,688.29 L404.50,692.99 L405.00,697.06 L405.50,700.49 L406.00,703.24 L406.50,705.32 L407.00,706.71 L407.50,707.41 L408.00,707.41 L408.50,706.71 L409.00,705.32 L409.50,703.24 L410.00,700.49 L410.50,697.06 L411.00,692.99 L411.50,688.29 L407.75,678.29ZM449.50,688.29 L450.00,692.99 L450.50,697.06 L451.00,700.49 L451.50,703.24 L452.00,705.32 L452.50,706.71 L453.00,707.41 L453.50,707.41 L454.00,706.71 L454.50,705.32 L455.00,703.24 L455.50,700.49 L456.00,697.06 L456.50,692.99 L457.00,688.29 L453.25,678.29ZM495.00,688.29 L495.50,692.99 L496.00,697.06 L496.50,700.49 L497.00,703.24 L497.50,705.32 L498.00,706.71 L498.50,707.41 L499.00,707.41 L499.50,706.71 L500.00,705.32 L500.50,703.24 L501.00,700.49 L501.50,697.06 L502.00,692.99 L502.50,688.29 L498.75,678.29ZM540.50,688.29 L541.00,692.99 L541.50,697.06 L542.00,700.49 L542.50,703.24 L543.00,705.32 L543.50,706.71 L544.00,707.41 L544.50,707.41 L545.00,706.71 L545.50,705.32 L546.00,703.24 L546.50,700.49 L547.00,697.06 L547.50,692.99 L548.00,688.29 L544.25,678.29ZM586.00,688.29 L586.50,692.99 L587.00,697.06 L587.50,700.49 L588.00,703.24 L588.50,705.32 L589.00,706.71 L589.50,707.41 L590.00,707.41 L590.50,706.71 L591.00,705.32 L591.50,703.24 L592.00,700.49 L592.50,697.06 L593.00,692.99 L593.50,688.29 L589.75,678.29ZM631.50,688.29 L632.00,692.99 L632.50,697.06 L633.00,700.49 L633.50,703.24 L634.00,705.32 L634.50,706.71 L635.00,707.41 L635.50,707.41 L636.00,706.71 L636.50,705.32 L637.00,703.24 L637.50,700.49 L638.00,697.06 L638.50,692.99 L639.00,688.29 L635.25,678.29ZM677.00,688.29 L677.50,692.99 L678.00,697.06 L678.50,700.49 L679.00,703.24 L679.50,705.32 L680.00,706.71 L680.50,707.41 L681.00,707.41 L681.50,706.71 L682.00,705.32 L682.50,703.24 L683.00,700.49 L683.50,697.06 L684.00,692.99 L684.50,688.29 L680.75,678.29ZM722.50,688.29 L723.00,692.99 L723.50,697.06 L724.00,700.49 L724.50,703.24 L725.00,705.32 L725.50,706.71 L726.00,707.41 L726.50,707.41 L727.00,706.71 L727.50,705.32 L728.00,703.24 L728.50,700.49 L729.00,697.06 L729.50,692.99 L730.00,688.29 L726.25,678.29ZM768.00,688.29 L768.50,692.99 L769.00,697.06 L769.50,700.49 L770.00,703.24 L770.50,705.32 L771.00,706.71 L771.50,707.41 L772.00,707.41 L772.50,706.71 L773.00,705.32 L773.50,703.24 L774.00,700.49 L774.50,697.06 L775.00,692.99 L775.50,688.29 L771.75,678.29Z" fill="#800080" opacity="0.55"/><path d="M137.00,464.54 L137.50,460.84 L138.00,456.51 L138.50,451.55 L139.00,446.01 L139.50,439.90 L140.00,433.25 L140.50,426.10 L141.00,418.48 L141.50,410.42 L142.00,401.97 L142.50,393.16 L143.00,384.03 L143.50,374.64 L144.00,365.01 L144.50,355.21 L145.00,345.27 L145.50,335.25 L146.00,325.19 L146.50,315.13 L147.00,305.14 L147.50,295.24 L148.00,285.50 L148.50,275.95 L149.00,266.65 L149.50,257.63 L150.00,248.95 L150.50,240.63 L151.00,232.73 L151.50,225.27 L152.00,218.29 L152.50,211.84 L153.00,205.93 L153.50,200.59 L154.00,195.86 L154.50,191.75 L155.00,188.28 L155.50,185.48 L156.00,183.34 L156.50,181.89 L157.00,181.50 L157.50,181.50 L158.00,181.68 L158.50,182.99 L159.00,184.99 L159.50,187.67 L160.00,191.01 L160.50,194.99 L161.00,199.60 L161.50,204.81 L162.00,210.61 L162.50,216.96 L163.00,223.83 L163.50,231.20 L164.00,239.02 L164.50,247.25 L165.00,255.87 L165.50,264.82 L166.00,274.07 L166.50,283.57 L167.00,293.28 L167.50,303.15 L168.00,313.13 L168.50,323.17 L169.00,333.24 L169.50,343.28 L170.00,353.23 L170.50,363.07 L171.00,372.73 L171.50,382.17 L172.00,391.36 L172.50,400.23 L173.00,408.76 L173.50,416.90 L174.00,424.61 L174.50,431.86 L175.00,438.61 L175.50,444.83 L176.00,450.49 L176.50,455.56 L177.00,460.03 L177.50,463.86 L178.00,467.03 L178.50,469.55 L179.00,471.38 L179.50,472.53 L180.00,472.99 L180.50,472.76 L181.00,471.83 L181.50,470.21 L182.00,467.91 L182.50,464.94 L183.00,461.32 L183.50,457.06 L184.00,452.18 L184.50,446.71 L185.00,440.66 L185.50,434.08 L186.00,426.98 L186.50,419.42 L187.00,411.41 L187.50,403.00 L188.00,394.23 L188.50,385.14 L189.00,375.78 L189.50,366.18 L190.00,356.40 L190.50,346.47 L191.00,336.46 L191.50,326.40 L192.00,316.34 L192.50,306.33 L193.00,296.42 L193.50,286.66 L194.00,277.09 L194.50,267.75 L195.00,258.70 L195.50,249.97 L196.00,241.61 L196.50,233.65 L197.00,226.14 L197.50,219.10 L198.00,212.58 L198.50,206.61 L199.00,201.20 L199.50,196.40 L200.00,192.21 L200.50,188.66 L201.00,185.78 L201.50,183.56 L202.00,182.03 L202.50,181.50 L203.00,181.50 L203.50,181.57 L204.00,182.80 L204.50,184.72 L205.00,187.31 L205.50,190.57 L206.00,194.48 L206.50,199.01 L207.00,204.16 L207.50,209.89 L208.00,216.17 L208.50,222.98 L209.00,230.29 L209.50,238.05 L210.00,246.24 L210.50,254.82 L211.00,263.73 L211.50,272.95 L212.00,282.42 L212.50,292.11 L213.00,301.96 L213.50,311.93 L214.00,321.97 L214.50,332.03 L215.00,342.07 L215.50,352.04 L216.00,361.89 L216.50,371.58 L217.00,381.05 L217.50,390.27 L218.00,399.18 L218.50,407.76 L219.00,415.95 L219.50,423.71 L220.00,431.02 L220.50,437.83 L221.00,444.11 L221.50,449.84 L222.00,454.99 L222.50,459.52 L223.00,463.43 L223.50,466.69 L224.00,469.28 L224.50,471.20 L225.00,472.43 L225.50,472.97 L226.00,472.82 L226.50,471.97 L227.00,470.44 L227.50,468.22 L228.00,465.34 L228.50,461.79 L229.00,457.60 L229.50,452.80 L230.00,447.39 L230.50,441.42 L231.00,434.90 L231.50,427.86 L232.00,420.35 L232.50,412.39 L233.00,404.03 L233.50,395.30 L234.00,386.25 L234.50,376.91 L235.00,367.34 L235.50,357.58 L236.00,347.67 L236.50,337.66 L237.00,327.60 L237.50,317.54 L238.00,307.53 L238.50,297.60 L239.00,287.82 L239.50,278.22 L240.00,268.86 L240.50,259.77 L241.00,251.00 L241.50,242.59 L242.00,234.58 L242.50,227.02 L243.00,219.92 L243.50,213.34 L244.00,207.29 L244.50,201.82 L245.00,196.94 L245.50,192.68 L246.00,189.06 L246.50,186.09 L247.00,183.79 L247.50,182.17 L248.00,181.50 L248.50,181.50 L249.00,181.50 L249.50,182.62 L250.00,184.45 L250.50,186.97 L251.00,190.14 L251.50,193.97 L252.00,198.44 L252.50,203.51 L253.00,209.17 L253.50,215.39 L254.00,222.14 L254.50,229.39 L255.00,237.10 L255.50,245.24 L256.00,253.77 L256.50,262.64 L257.00,271.83 L257.50,281.27 L258.00,290.93 L258.50,300.77 L259.00,310.72 L259.50,320.76 L260.00,330.83 L260.50,340.87 L261.00,350.85 L261.50,360.72 L262.00,370.43 L262.50,379.93 L263.00,389.18 L263.50,398.13 L264.00,406.75 L264.50,414.98 L265.00,422.80 L265.50,430.17 L266.00,437.04 L266.50,443.39 L267.00,449.19 L267.50,454.40 L268.00,459.01 L268.50,462.99 L269.00,466.33 L269.50,469.01 L270.00,471.01 L270.50,472.32 L271.00,472.94 L271.50,472.88 L272.00,472.11 L272.50,470.66 L273.00,468.52 L273.50,465.72 L274.00,462.25 L274.50,458.14 L275.00,453.41 L275.50,448.07 L276.00,442.16 L276.50,435.71 L277.00,428.73 L277.50,421.27 L278.00,413.37 L278.50,405.05 L279.00,396.37 L279.50,387.35 L280.00,378.05 L280.50,368.50 L281.00,358.76 L281.50,348.86 L282.00,338.87 L282.50,328.81 L283.00,318.75 L283.50,308.73 L284.00,298.79 L284.50,288.99 L285.00,279.36 L285.50,269.97 L286.00,260.84 L286.50,252.03 L287.00,243.58 L287.50,235.52 L288.00,227.90 L288.50,220.75 L289.00,214.10 L289.50,207.99 L290.00,202.45 L290.50,197.49 L291.00,193.16 L291.50,189.46 L292.00,186.41 L292.50,184.03 L293.00,182.33 L293.50,181.50 L294.00,181.50 L294.50,181.50 L295.00,182.44 L295.50,184.20 L296.00,186.63 L296.50,189.73 L297.00,193.48 L297.50,197.87 L298.00,202.87 L298.50,208.46 L299.00,214.61 L299.50,221.30 L300.00,228.49 L300.50,236.15 L301.00,244.24 L301.50,252.73 L302.00,261.56 L302.50,270.71 L303.00,280.13 L303.50,289.76 L304.00,299.58 L304.50,309.52 L305.00,319.55 L305.50,329.62 L306.00,339.67 L306.50,349.66 L307.00,359.54 L307.50,369.27 L308.00,378.80 L308.50,388.08 L309.00,397.07 L309.50,405.73 L310.00,414.02 L310.50,421.89 L311.00,429.31 L311.50,436.24 L312.00,442.66 L312.50,448.52 L313.00,453.81 L313.50,458.49 L314.00,462.55 L314.50,465.97 L315.00,468.72 L315.50,470.80 L316.00,472.20 L316.50,472.91 L317.00,472.92 L317.50,472.24 L318.00,470.87 L318.50,468.82 L319.00,466.09 L319.50,462.70 L320.00,458.67 L320.50,454.01 L321.00,448.74 L321.50,442.90 L322.00,436.51 L322.50,429.59 L323.00,422.19 L323.50,414.34 L324.00,406.07 L324.50,397.43 L325.00,388.45 L325.50,379.18 L326.00,369.66 L326.50,359.94 L327.00,350.06 L327.50,340.07 L328.00,330.02 L328.50,319.96 L329.00,309.92 L329.50,299.97 L330.00,290.15 L330.50,280.51 L331.00,271.08 L331.50,261.92 L332.00,253.07 L332.50,244.57 L333.00,236.47 L333.50,228.79 L334.00,221.58 L334.50,214.87 L335.00,208.69 L335.50,203.08 L336.00,198.06 L336.50,193.64 L337.00,189.87 L337.50,186.74 L338.00,184.28 L338.50,182.50 L339.00,181.50 L339.50,181.50 L340.00,181.50 L340.50,182.28 L341.00,183.95 L341.50,186.30 L342.00,189.32 L342.50,193.00 L343.00,197.31 L343.50,202.24 L344.00,207.76 L344.50,213.85 L345.00,220.47 L345.50,227.60 L346.00,235.21 L346.50,243.25 L347.00,251.69 L347.50,260.48 L348.00,269.60 L348.50,278.98 L349.00,288.60 L349.50,298.39 L350.00,308.33 L350.50,318.35 L351.00,328.41 L351.50,338.47 L352.00,348.47 L352.50,358.37 L353.00,368.12 L353.50,377.67 L354.00,386.98 L354.50,396.01 L355.00,404.71 L355.50,413.04 L356.00,420.97 L356.50,428.44 L357.00,435.44 L357.50,441.91 L358.00,447.85 L358.50,453.20 L359.00,457.96 L359.50,462.10 L360.00,465.59 L360.50,468.43 L361.00,470.59 L361.50,472.07 L362.00,472.86 L362.50,472.96 L363.00,472.36 L363.50,471.07 L364.00,469.10 L364.50,466.45 L365.00,463.14 L365.50,459.18 L366.00,454.60 L366.50,449.41 L367.00,443.63 L367.50,437.30 L368.00,430.45 L368.50,423.11 L369.00,415.31 L369.50,407.08 L370.00,398.48 L370.50,389.54 L371.00,380.30 L371.50,370.81 L372.00,361.11 L372.50,351.25 L373.00,341.27 L373.50,331.23 L374.00,321.16 L374.50,311.12 L375.00,301.16 L375.50,291.32 L376.00,281.65 L376.50,272.20 L377.00,263.01 L377.50,254.12 L378.00,245.57 L378.50,237.42 L379.00,229.69 L379.50,222.42 L380.00,215.65 L380.50,209.41 L381.00,203.72 L381.50,198.63 L382.00,194.14 L382.50,190.29 L383.00,187.08 L383.50,184.54 L384.00,182.68 L384.50,181.50 L385.00,181.50 L385.50,181.50 L386.00,182.12 L386.50,183.71 L387.00,185.98 L387.50,188.92 L388.00,192.52 L388.50,196.76 L389.00,201.61 L389.50,207.06 L390.00,213.09 L390.50,219.65 L391.00,226.72 L391.50,234.27 L392.00,242.26 L392.50,250.66 L393.00,259.41 L393.50,268.49 L394.00,277.84 L394.50,287.43 L395.00,297.21 L395.50,307.13 L396.00,317.14 L396.50,327.20 L397.00,337.26 L397.50,347.27 L398.00,357.18 L398.50,366.95 L399.00,376.54 L399.50,385.88 L400.00,394.95 L400.50,403.69 L401.00,412.07 L401.50,420.04 L402.00,427.57 L402.50,434.62 L403.00,441.17 L403.50,447.16 L404.00,452.59 L404.50,457.42 L405.00,461.63 L405.50,465.21 L406.00,468.12 L406.50,470.36 L407.00,471.93 L407.50,472.80 L408.00,472.98 L408.50,472.47 L409.00,471.26 L409.50,469.37 L410.00,466.80 L410.50,463.57 L411.00,459.69 L411.50,455.18 L412.00,450.06 L412.50,444.35 L413.00,438.09 L413.50,431.30 L414.00,424.01 L414.50,416.26 L415.00,408.09 L415.50,399.53 L416.00,390.63 L416.50,381.43 L417.00,371.96 L417.50,362.29 L418.00,352.44 L418.50,342.47 L419.00,332.44 L419.50,322.37 L420.00,312.33 L420.50,302.35 L421.00,292.50 L421.50,282.80 L422.00,273.32 L422.50,264.09 L423.00,255.17 L423.50,246.58 L424.00,238.37 L424.50,230.59 L425.00,223.27 L425.50,216.43 L426.00,210.13 L426.50,204.38 L427.00,199.21 L427.50,194.65 L428.00,190.71 L428.50,187.43 L429.00,184.81 L429.50,182.86 L430.00,181.60 L430.50,181.50 L431.00,181.50 L431.50,181.98 L432.00,183.49 L432.50,185.68 L433.00,188.54 L433.50,192.06 L434.00,196.22 L434.50,201.00 L435.00,206.38 L435.50,212.33 L436.00,218.83 L436.50,225.85 L437.00,233.34 L437.50,241.28 L438.00,249.63 L438.50,258.34 L439.00,267.38 L439.50,276.71 L440.00,286.27 L440.50,296.03 L441.00,305.93 L441.50,315.94 L442.00,325.99 L442.50,336.05 L443.00,346.07 L443.50,356.00 L444.00,365.79 L444.50,375.40 L445.00,384.77 L445.50,393.87 L446.00,402.66 L446.50,411.08 L447.00,419.10 L447.50,426.69 L448.00,433.80 L448.50,440.41 L449.00,446.47 L449.50,451.97 L450.00,456.88 L450.50,461.16 L451.00,464.81 L451.50,467.81 L452.00,470.13 L452.50,471.77 L453.00,472.73 L453.50,473.00 L454.00,472.56 L454.50,471.44 L455.00,469.63 L455.50,467.15 L456.00,464.00 L456.50,460.19 L457.00,455.75 L457.50,450.71 L458.00,445.07 L458.50,438.87 L459.00,432.14 L459.50,424.91 L460.00,417.22 L460.50,409.09 L461.00,400.58 L461.50,391.72 L462.00,382.55 L462.50,373.11 L463.00,363.46 L463.50,353.63 L464.00,343.68 L464.50,333.64 L465.00,323.58 L465.50,313.53 L466.00,303.54 L466.50,293.67 L467.00,283.96 L467.50,274.45 L468.00,265.19 L468.50,256.22 L469.00,247.59 L469.50,239.34 L470.00,231.50 L470.50,224.12 L471.00,217.23 L471.50,210.85 L472.00,205.04 L472.50,199.80 L473.00,195.16 L473.50,191.15 L474.00,187.79 L474.50,185.09 L475.00,183.06 L475.50,181.72 L476.00,181.50 L476.50,181.50 L477.00,181.84 L477.50,183.27 L478.00,185.38 L478.50,188.16 L479.00,191.60 L479.50,195.68 L480.00,200.39 L480.50,205.70 L481.00,211.59 L481.50,218.03 L482.00,224.98 L482.50,232.42 L483.00,240.31 L483.50,248.61 L484.00,257.28 L484.50,266.28 L485.00,275.58 L485.50,285.11 L486.00,294.85 L486.50,304.74 L487.00,314.73 L487.50,324.79 L488.00,334.85 L488.50,344.88 L489.00,354.82 L489.50,364.63 L490.00,374.26 L490.50,383.66 L491.00,392.80 L491.50,401.62 L492.00,410.09 L492.50,418.16 L493.00,425.81 L493.50,432.98 L494.00,439.64 L494.50,445.78 L495.00,451.34 L495.50,456.32 L496.00,460.68 L496.50,464.41 L497.00,467.48 L497.50,469.89 L498.00,471.61 L498.50,472.65 L499.00,473.00 L499.50,472.65 L500.00,471.61 L500.50,469.89 L501.00,467.48 L501.50,464.41 L502.00,460.68 L502.50,456.32 L503.00,451.34 L503.50,445.78 L504.00,439.64 L504.50,432.98 L505.00,425.81 L505.50,418.16 L506.00,410.09 L506.50,401.62 L507.00,392.80 L507.50,383.66 L508.00,374.26 L508.50,364.63 L509.00,354.82 L509.50,344.88 L510.00,334.85 L510.50,324.79 L511.00,314.73 L511.50,304.74 L512.00,294.85 L512.50,285.11 L513.00,275.58 L513.50,266.28 L514.00,257.28 L514.50,248.61 L515.00,240.31 L515.50,232.42 L516.00,224.98 L516.50,218.03 L517.00,211.59 L517.50,205.70 L518.00,200.39 L518.50,195.68 L519.00,191.60 L519.50,188.16 L520.00,185.38 L520.50,183.27 L521.00,181.84 L521.50,181.50 L522.00,181.50 L522.50,181.72 L523.00,183.06 L523.50,185.09 L524.00,187.79 L524.50,191.15 L525.00,195.16 L525.50,199.80 L526.00,205.04 L526.50,210.85 L527.00,217.23 L527.50,224.12 L528.00,231.50 L528.50,239.34 L529.00,247.59 L529.50,256.22 L530.00,265.19 L530.50,274.45 L531.00,283.96 L531.50,293.67 L532.00,303.54 L532.50,313.53 L533.00,323.58 L533.50,333.64 L534.00,343.68 L534.50,353.63 L535.00,363.46 L535.50,373.11 L536.00,382.55 L536.50,391.72 L537.00,400.58 L537.50,409.09 L538.00,417.22 L538.50,424.91 L539.00,432.14 L539.50,438.87 L540.00,445.07 L540.50,450.71 L541.00,455.75 L541.50,460.19 L542.00,464.00 L542.50,467.15 L543.00,469.63 L543.50,471.44 L544.00,472.56 L544.50,473.00 L545.00,472.73 L545.50,471.77 L546.00,470.13 L546.50,467.81 L547.00,464.81 L547.50,461.16 L548.00,456.88 L548.50,451.97 L549.00,446.47 L549.50,440.41 L550.00,433.80 L550.50,426.69 L551.00,419.10 L551.50,411.08 L552.00,402.66 L552.50,393.87 L553.00,384.77 L553.50,375.40 L554.00,365.79 L554.50,356.00 L555.00,346.07 L555.50,336.05 L556.00,325.99 L556.50,315.94 L557.00,305.93 L557.50,296.03 L558.00,286.27 L558.50,276.71 L559.00,267.38 L559.50,258.34 L560.00,249.63 L560.50,241.28 L561.00,233.34 L561.50,225.85 L562.00,218.83 L562.50,212.33 L563.00,206.38 L563.50,201.00 L564.00,196.22 L564.50,192.06 L565.00,188.54 L565.50,185.68 L566.00,183.49 L566.50,181.98 L567.00,181.50 L567.50,181.50 L568.00,181.60 L568.50,182.86 L569.00,184.81 L569.50,187.43 L570.00,190.71 L570.50,194.65 L571.00,199.21 L571.50,204.38 L572.00,210.13 L572.50,216.43 L573.00,223.27 L573.50,230.59 L574.00,238.37 L574.50,246.58 L575.00,255.17 L575.50,264.09 L576.00,273.32 L576.50,282.80 L577.00,292.50 L577.50,302.35 L578.00,312.33 L578.50,322.37 L579.00,332.44 L579.50,342.47 L580.00,352.44 L580.50,362.29 L581.00,371.96 L581.50,381.43 L582.00,390.63 L582.50,399.53 L583.00,408.09 L583.50,416.26 L584.00,424.01 L584.50,431.30 L585.00,438.09 L585.50,444.35 L586.00,450.06 L586.50,455.18 L587.00,459.69 L587.50,463.57 L588.00,466.80 L588.50,469.37 L589.00,471.26 L589.50,472.47 L590.00,472.98 L590.50,472.80 L591.00,471.93 L591.50,470.36 L592.00,468.12 L592.50,465.21 L593.00,461.63 L593.50,457.42 L594.00,452.59 L594.50,447.16 L595.00,441.17 L595.50,434.62 L596.00,427.57 L596.50,420.04 L597.00,412.07 L597.50,403.69 L598.00,394.95 L598.50,385.88 L599.00,376.54 L599.50,366.95 L600.00,357.18 L600.50,347.27 L601.00,337.26 L601.50,327.20 L602.00,317.14 L602.50,307.13 L603.00,297.21 L603.50,287.43 L604.00,277.84 L604.50,268.49 L605.00,259.41 L605.50,250.66 L606.00,242.26 L606.50,234.27 L607.00,226.72 L607.50,219.65 L608.00,213.09 L608.50,207.06 L609.00,201.61 L609.50,196.76 L610.00,192.52 L610.50,188.92 L611.00,185.98 L611.50,183.71 L612.00,182.12 L612.50,181.50 L613.00,181.50 L613.50,181.50 L614.00,182.68 L614.50,184.54 L615.00,187.08 L615.50,190.29 L616.00,194.14 L616.50,198.63 L617.00,203.72 L617.50,209.41 L618.00,215.65 L618.50,222.42 L619.00,229.69 L619.50,237.42 L620.00,245.57 L620.50,254.12 L621.00,263.01 L621.50,272.20 L622.00,281.65 L622.50,291.32 L623.00,301.16 L623.50,311.12 L624.00,321.16 L624.50,331.23 L625.00,341.27 L625.50,351.25 L626.00,361.11 L626.50,370.81 L627.00,380.30 L627.50,389.54 L628.00,398.48 L628.50,407.08 L629.00,415.31 L629.50,423.11 L630.00,430.45 L630.50,437.30 L631.00,443.63 L631.50,449.41 L632.00,454.60 L632.50,459.18 L633.00,463.14 L633.50,466.45 L634.00,469.10 L634.50,471.07 L635.00,472.36 L635.50,472.96 L636.00,472.86 L636.50,472.07 L637.00,470.59 L637.50,468.43 L638.00,465.59 L638.50,462.10 L639.00,457.96 L639.50,453.20 L640.00,447.85 L640.50,441.91 L641.00,435.44 L641.50,428.44 L642.00,420.97 L642.50,413.04 L643.00,404.71 L643.50,396.01 L644.00,386.98 L644.50,377.67 L645.00,368.12 L645.50,358.37 L646.00,348.47 L646.50,338.47 L647.00,328.41 L647.50,318.35 L648.00,308.33 L648.50,298.39 L649.00,288.60 L649.50,278.98 L650.00,269.60 L650.50,260.48 L651.00,251.69 L651.50,243.25 L652.00,235.21 L652.50,227.60 L653.00,220.47 L653.50,213.85 L654.00,207.76 L654.50,202.24 L655.00,197.31 L655.50,193.00 L656.00,189.32 L656.50,186.30 L657.00,183.95 L657.50,182.28 L658.00,181.50 L658.50,181.50 L659.00,181.50 L659.50,182.50 L660.00,184.28 L660.50,186.74 L661.00,189.87 L661.50,193.64 L662.00,198.06 L662.50,203.08 L663.00,208.69 L663.50,214.87 L664.00,221.58 L664.50,228.79 L665.00,236.47 L665.50,244.57 L666.00,253.07 L666.50,261.92 L667.00,271.08 L667.50,280.51 L668.00,290.15 L668.50,299.97 L669.00,309.92 L669.50,319.96 L670.00,330.02 L670.50,340.07 L671.00,350.06 L671.50,359.94 L672.00,369.66 L672.50,379.18 L673.00,388.45 L673.50,397.43 L674.00,406.07 L674.50,414.34 L675.00,422.19 L675.50,429.59 L676.00,436.51 L676.50,442.90 L677.00,448.74 L677.50,454.01 L678.00,458.67 L678.50,462.70 L679.00,466.09 L679.50,468.82 L680.00,470.87 L680.50,472.24 L681.00,472.92 L681.50,472.91 L682.00,472.20 L682.50,470.80 L683.00,468.72 L683.50,465.97 L684.00,462.55 L684.50,458.49 L685.00,453.81 L685.50,448.52 L686.00,442.66 L686.50,436.24 L687.00,429.31 L687.50,421.89 L688.00,414.02 L688.50,405.73 L689.00,397.07 L689.50,388.08 L690.00,378.80 L690.50,369.27 L691.00,359.54 L691.50,349.66 L692.00,339.67 L692.50,329.62 L693.00,319.55 L693.50,309.52 L694.00,299.58 L694.50,289.76 L695.00,280.13 L695.50,270.71 L696.00,261.56 L696.50,252.73 L697.00,244.24 L697.50,236.15 L698.00,228.49 L698.50,221.30 L699.00,214.61 L699.50,208.46 L700.00,202.87 L700.50,197.87 L701.00,193.48 L701.50,189.73 L702.00,186.63 L702.50,184.20 L703.00,182.44 L703.50,181.50 L704.00,181.50 L704.50,181.50 L705.00,182.33 L705.50,184.03 L706.00,186.41 L706.50,189.46 L707.00,193.16 L707.50,197.49 L708.00,202.45 L708.50,207.99 L709.00,214.10 L709.50,220.75 L710.00,227.90 L710.50,235.52 L711.00,243.58 L711.50,252.03 L712.00,260.84 L712.50,269.97 L713.00,279.36 L713.50,288.99 L714.00,298.79 L714.50,308.73 L715.00,318.75 L715.50,328.81 L716.00,338.87 L716.50,348.86 L717.00,358.76 L717.50,368.50 L718.00,378.05 L718.50,387.35 L719.00,396.37 L719.50,405.05 L720.00,413.37 L720.50,421.27 L721.00,428.73 L721.50,435.71 L722.00,442.16 L722.50,448.07 L723.00,453.41 L723.50,458.14 L724.00,462.25 L724.50,465.72 L725.00,468.52 L725.50,470.66 L726.00,472.11 L726.50,472.88 L727.00,472.94 L727.50,472.32 L728.00,471.01 L728.50,469.01 L729.00,466.33 L729.50,462.99 L730.00,459.01 L730.50,454.40 L731.00,449.19 L731.50,443.39 L732.00,437.04 L732.50,430.17 L733.00,422.80 L733.50,414.98 L734.00,406.75 L734.50,398.13 L735.00,389.18 L735.50,379.93 L736.00,370.43 L736.50,360.72 L737.00,350.85 L737.50,340.87 L738.00,330.83 L738.50,320.76 L739.00,310.72 L739.50,300.77 L740.00,290.93 L740.50,281.27 L741.00,271.83 L741.50,262.64 L742.00,253.77 L742.50,245.24 L743.00,237.10 L743.50,229.39 L744.00,222.14 L744.50,215.39 L745.00,209.17 L745.50,203.51 L746.00,198.44 L746.50,193.97 L747.00,190.14 L747.50,186.97 L748.00,184.45 L748.50,182.62 L749.00,181.50 L749.50,181.50 L750.00,181.50 L750.50,182.17 L751.00,183.79 L751.50,186.09 L752.00,189.06 L752.50,192.68 L753.00,196.94 L753.50,201.82 L754.00,207.29 L754.50,213.34 L755.00,219.92 L755.50,227.02 L756.00,234.58 L756.50,242.59 L757.00,251.00 L757.50,259.77 L758.00,268.86 L758.50,278.22 L759.00,287.82 L759.50,297.60 L760.00,307.53 L760.50,317.54 L761.00,327.60 L761.50,337.66 L762.00,347.67 L762.50,357.58 L763.00,367.34 L763.50,376.91 L764.00,386.25 L764.50,395.30 L765.00,404.03 L765.50,412.39 L766.00,420.35 L766.50,427.86 L767.00,434.90 L767.50,441.42 L768.00,447.39 L768.50,452.80 L769.00,457.60 L769.50,461.79 L770.00,465.34 L770.50,468.22 L771.00,470.44 L771.50,471.97 L772.00,472.82 L772.50,472.97 L773.00,472.43 L773.50,471.20 L774.00,469.28 L774.50,466.69 L775.00,463.43 L775.50,459.52 L776.00,454.99 L776.50,449.84 L777.00,444.11 L777.50,437.83 L778.00,431.02 L778.50,423.71 L779.00,415.95 L779.50,407.76 L780.00,399.18 L780.50,390.27 L781.00,381.05 L781.50,371.58 L782.00,361.89 L782.50,352.04 L783.00,342.07 L783.50,332.03 L784.00,321.97 L784.50,311.93 L785.00,301.96 L785.50,292.11 L786.00,282.42 L786.50,272.95 L787.00,263.73 L787.50,254.82 L788.00,246.24 L788.50,238.05 L789.00,230.29 L789.50,222.98 L790.00,216.17 L790.50,209.89 L791.00,204.16 L791.50,199.01 L792.00,194.48 L792.50,190.57 L793.00,187.31 L793.50,184.72 L794.00,182.80 L794.50,181.57 L795.00,181.50 L795.50,181.50 L796.00,182.03 L796.50,183.56 L797.00,185.78 L797.50,188.66 L798.00,192.21 L798.50,196.40 L799.00,201.20 L799.50,206.61 L800.00,212.58 L800.50,219.10 L801.00,226.14 L801.50,233.65 L802.00,241.61 L802.50,249.97 L803.00,258.70 L803.50,267.75 L804.00,277.09 L804.50,286.66 L805.00,296.42 L805.50,306.33 L806.00,316.34 L806.50,326.40 L807.00,336.46 L807.50,346.47 L808.00,356.40 L808.50,366.18 L809.00,375.78 L809.50,385.14 L810.00,394.23 L810.50,403.00 L811.00,411.41 L811.50,419.42 L812.00,426.98 L812.50,434.08 L813.00,440.66 L813.50,446.71 L814.00,452.18 L814.50,457.06 L815.00,461.32 L815.50,464.94 L816.00,467.91 L816.50,470.21 L817.00,471.83 L817.50,472.76 L818.00,472.99 L818.50,472.53 L819.00,471.38 L819.50,469.55 L820.00,467.03 L820.50,463.86 L821.00,460.03 L821.50,455.56 L822.00,450.49 L822.50,444.83 L823.00,438.61 L823.50,431.86 L824.00,424.61 L824.50,416.90 L825.00,408.76 L825.50,400.23 L826.00,391.36 L826.50,382.17 L827.00,372.73 L827.50,363.07 L828.00,353.23 L828.50,343.28 L829.00,333.24 L829.50,323.17 L830.00,313.13 L830.50,303.15 L831.00,293.28 L831.50,283.57 L832.00,274.07 L832.50,264.82 L833.00,255.87 L833.50,247.25 L834.00,239.02 L834.50,231.20 L835.00,223.83 L835.50,216.96 L836.00,210.61 L836.50,204.81 L837.00,199.60 L837.50,194.99 L838.00,191.01 L838.50,187.67 L839.00,184.99 L839.50,182.99 L840.00,181.68 L840.50,181.50 L841.00,181.50 L841.50,181.89 L842.00,183.34 L842.50,185.48 L843.00,188.28 L843.50,191.75 L844.00,195.86 L844.50,200.59 L845.00,205.93 L845.50,211.84 L846.00,218.29 L846.50,225.27 L847.00,232.73 L847.50,240.63 L848.00,248.95 L848.50,257.63 L849.00,266.65 L849.50,275.95 L850.00,285.50 L850.50,295.24 L851.00,305.14 L851.50,315.13 L852.00,325.19 L852.50,335.25 L853.00,345.27 L853.50,355.21 L854.00,365.01 L854.50,374.64 L855.00,384.03 L855.50,393.16 L856.00,401.97 L856.50,410.42 L857.00,418.48 L857.50,426.10 L858.00,433.25 L858.50,439.90 L859.00,446.01 L859.50,451.55 L860.00,456.51 L860.50,460.84 L861.00,464.54 L861.50,467.59 L862.00,469.97 L862.50,471.67 L863.00,472.68 L863.50,473.00 L864.00,472.62 L864.50,471.56 L865.00,469.80 L865.50,467.37 L866.00,464.27 L866.50,460.52 L867.00,456.13 L867.50,451.13 L868.00,445.54 L868.50,439.39 L869.00,432.70 L869.50,425.51 L870.00,417.85 L870.50,409.76 L871.00,401.27 L871.50,392.44 L872.00,383.29 L872.50,373.87 L873.00,364.24 L873.50,354.42 L874.00,344.48 L874.50,334.45 L875.00,324.38 L875.50,314.33 L876.00,304.34 L876.50,294.46 L877.00,284.73 L877.50,275.20 L878.00,265.92 L878.50,256.93 L879.00,248.27 L879.50,239.98 L880.00,232.11 L880.50,224.69 L881.00,217.76 L881.50,211.34 L882.00,205.48 L882.50,200.19 L883.00,195.51 L883.50,191.45 L884.00,188.03 L884.50,185.28 L885.00,183.20 L885.50,181.80 L886.00,181.50 L886.50,181.50 L887.00,181.76 L887.50,183.13 L888.00,185.18 L888.50,187.91 L889.00,191.30 L889.50,195.33 L890.00,199.99 L890.50,205.26 L891.00,211.10 L891.50,217.49 L892.00,224.41 L892.50,231.81 L893.00,239.66 L893.50,247.93 L894.00,256.57 L894.50,265.55 L895.00,274.82 L895.50,284.34 L896.00,294.06 L896.50,303.94 L897.00,313.93 L897.50,323.98 L898.00,334.04 L898.50,344.08 L899.00,354.03 L899.50,363.85 L900.00,373.49 L900.50,382.92 L901.00,392.08 L901.50,400.93 L902.00,409.43 L902.50,417.53 L903.00,425.21 L903.50,432.42 L904.00,439.13 L904.50,445.31 L905.00,450.92 L905.50,455.94 L906.00,460.36 L906.50,464.13 L907.00,467.26 L907.50,469.72 L908.00,471.50 L908.50,472.60 L909.00,473.00 L909.50,472.71 L910.00,471.72 L910.50,470.05 L911.00,467.70 L911.50,464.68 L912.00,461.00 L912.50,456.69 L913.00,451.76 L913.50,446.24 L914.00,440.15 L914.50,433.53 L915.00,426.40 L915.50,418.79 L916.00,410.75 L916.50,402.31 L917.00,393.52 L917.50,384.40 L918.00,375.02 L918.50,365.40 L919.00,355.61 L919.50,345.67 L920.00,335.65 L920.50,325.59 L921.00,315.53 L921.50,305.53 L922.00,295.63 L922.50,285.88 L923.00,276.33 L923.50,267.02 L924.00,257.99 L924.50,249.29 L925.00,240.96 L925.50,233.03 L926.00,225.56 L926.50,218.56 L927.00,212.09 L927.50,206.15 L928.00,200.80 L928.50,196.04 L929.00,191.90 L929.50,188.41 L930.00,185.57 L930.50,183.41 L931.00,181.93 L931.50,181.50 L932.00,181.50 L932.50,181.64 L933.00,182.93 L933.50,184.90 L934.00,187.55 L934.50,190.86 L935.00,194.82 L935.50,199.40 L936.00,204.59 L936.50,210.37 L937.00,216.70 L937.50,223.55 L938.00,230.89 L938.50,238.69 L939.00,246.92 L939.50,255.52 L940.00,264.46 L940.50,273.70 L941.00,283.19 L941.50,292.89 L942.00,302.75 L942.50,312.73 L943.00,322.77 L943.50,332.84 L944.00,342.88 L944.50,352.84 L945.00,362.68 L945.50,372.35 L946.00,381.80 L946.50,390.99 L947.00,399.88 L947.50,408.43 L948.00,416.58 L948.50,424.31 L949.00,431.58 L949.50,438.35 L950.00,444.59 L950.50,450.28 L951.00,455.37 L951.50,459.86 L952.00,463.71 L952.50,466.92 L953.00,469.46 L953.50,471.32 L954.00,472.50 L954.50,472.99 L955.00,472.78 L955.50,471.88 L956.00,470.29 L956.50,468.02 L957.00,465.08 L957.50,461.48 L958.00,457.24 L958.50,452.39 L959.00,446.94 L959.50,440.91 L960.00,434.35 L960.50,427.28 L961.00,419.73 L961.50,411.74 L962.00,403.34 L962.50,394.59 L963.00,385.51 L963.50,376.16 L964.00,366.57 L964.50,356.79 L965.00,346.87 L965.50,336.86 L966.00,326.80 L966.50,316.74 L967.00,306.73 L967.50,296.82 L968.00,287.05 L968.50,277.46 L969.00,268.12 L969.50,259.05 L970.00,250.31 L970.50,241.93 L971.00,233.96 L971.50,226.43 L972.00,219.38 L972.50,212.83 L973.00,206.84 L973.50,201.41 L974.00,196.58 L974.50,192.37 L975.00,188.79 L975.50,185.88 L976.00,183.64 L976.50,182.07 L977.00,181.50 L977.50,181.50 L978.00,181.53 L978.50,182.74 L979.00,184.63 L979.50,187.20 L980.00,190.43 L980.50,194.31 L981.00,198.82 L981.50,203.94 L982.00,209.65 L982.50,215.91 L983.00,222.70 L983.50,229.99 L984.00,237.74 L984.50,245.91 L985.00,254.47 L985.50,263.37 L986.00,272.57 L986.50,282.04 L987.00,291.71 L987.50,301.56 L988.00,311.53 L988.50,321.56 L989.00,331.63 L989.50,341.67 L990.00,351.65 L990.50,361.50 L991.00,371.20 L991.50,380.68 L992.00,389.91 L992.50,398.83 L993.00,407.42 L993.50,415.63 L994.00,423.41 L994.50,430.73 L995.00,437.57 L995.50,443.87 L996.00,449.62 L996.50,454.79 L997.00,459.35 L997.50,463.29 L998.00,466.57 L998.50,469.19 L999.00,471.14 L999.50,472.40 L1000.00,472.96 L1000.50,472.84 L1001.00,472.02 L1001.50,470.51 L1002.00,468.32 L1002.50,465.46 L1003.00,461.94 L1003.50,457.78 L1004.00,453.00 L1004.50,447.62 L1005.00,441.67 L1005.50,435.17 L1006.00,428.15 L1006.50,420.66 L1007.00,412.72 L1007.50,404.37 L1008.00,395.66 L1008.50,386.62 L1009.00,377.29 L1009.50,367.73 L1010.00,357.97 L1010.50,348.07 L1011.00,338.06 L1011.50,328.01 L1012.00,317.95 L1012.50,307.93 L1013.00,298.00 L1013.50,288.21 L1014.00,278.60 L1014.50,269.23 L1015.00,260.13 L1015.50,251.34 L1016.00,242.92 L1016.50,234.90 L1017.00,227.31 L1017.50,220.20 L1018.00,213.59 L1018.50,207.53 L1019.00,202.03 L1019.50,197.12 L1020.00,192.84 L1020.50,189.19 L1021.00,186.19 L1021.50,183.87 L1022.00,182.23 L1022.50,181.50 L1023.00,181.50 L1023.50,181.50 L1024.00,182.56 L1024.50,184.37 L1025.00,186.85 L1025.50,190.00 L1026.00,193.81 L1026.50,198.25 L1027.00,203.29 L1027.50,208.93 L1028.00,215.13 L1028.50,221.86 L1029.00,229.09 L1029.50,236.78 L1030.00,244.91 L1030.50,253.42 L1031.00,262.28 L1031.50,271.45 L1032.00,280.89 L1032.50,290.54 L1033.00,300.37 L1033.50,310.32 L1034.00,320.36 L1034.50,330.42 L1035.00,340.47 L1035.50,350.46 L1036.00,360.33 L1036.50,370.04 L1037.00,379.55 L1037.50,388.81 L1038.00,397.78 L1038.50,406.41 L1039.00,414.66 L1039.50,422.50 L1040.00,429.88 L1040.50,436.77 L1041.00,443.15 L1041.50,448.96 L1042.00,454.20 L1042.50,458.84 L1043.00,462.85 L1043.50,466.21 L1044.00,468.91 L1044.50,470.94 L1045.00,472.28 L1045.50,472.93 L1046.00,472.89 L1046.50,472.16 L1047.00,470.73 L1047.50,468.62 L1048.00,465.84" fill="none" stroke="#6a5a00" stroke-width="4" opacity="0.45"/><path d="M137.00,711.56 L137.50,710.98 L138.00,710.36 L138.50,709.70 L139.00,709.02 L139.50,708.31 L140.00,707.58 L140.50,706.83 L141.00,706.06 L141.50,705.28 L142.00,704.49 L142.50,703.70 L143.00,702.90 L143.50,702.11 L144.00,701.33 L144.50,700.56 L145.00,699.80 L145.50,699.05 L146.00,698.33 L146.50,697.64 L147.00,696.97 L147.50,696.33 L148.00,695.73 L148.50,695.16 L149.00,694.63 L149.50,694.15 L150.00,693.71 L150.50,693.32 L151.00,692.97 L151.50,692.68 L152.00,692.44 L152.50,692.25 L153.00,692.11 L153.50,692.03 L154.00,692.00 L154.50,692.03 L155.00,692.11 L155.50,692.25 L156.00,692.44 L156.50,692.68 L157.00,692.97 L157.50,693.32 L158.00,693.71 L158.50,694.15 L159.00,694.63 L159.50,695.16 L160.00,695.73 L160.50,696.33 L161.00,696.97 L161.50,697.64 L162.00,698.33 L162.50,699.05 L163.00,699.80 L163.50,700.56 L164.00,701.33 L164.50,702.11 L165.00,702.90 L165.50,703.70 L166.00,704.49 L166.50,705.28 L167.00,706.06 L167.50,706.83 L168.00,707.58 L168.50,708.31 L169.00,709.02 L169.50,709.70 L170.00,710.36 L170.50,710.98 L171.00,711.56 L171.50,712.11 L172.00,712.61 L172.50,713.08 L173.00,713.49 L173.50,713.86 L174.00,714.18 L174.50,714.45 L175.00,714.67 L175.50,714.83 L176.00,714.94 L176.50,714.99 L177.00,714.99 L177.50,714.94 L178.00,714.83 L178.50,714.67 L179.00,714.45 L179.50,714.18 L180.00,713.86 L180.50,713.49 L181.00,713.08 L181.50,712.61 L182.00,712.11 L182.50,711.56 L183.00,710.98 L183.50,710.36 L184.00,709.70 L184.50,709.02 L185.00,708.31 L185.50,707.58 L186.00,706.83 L186.50,706.06 L187.00,705.28 L187.50,704.49 L188.00,703.70 L188.50,702.90 L189.00,702.11 L189.50,701.33 L190.00,700.56 L190.50,699.80 L191.00,699.05 L191.50,698.33 L192.00,697.64 L192.50,696.97 L193.00,696.33 L193.50,695.73 L194.00,695.16 L194.50,694.63 L195.00,694.15 L195.50,693.71 L196.00,693.32 L196.50,692.97 L197.00,692.68 L197.50,692.44 L198.00,692.25 L198.50,692.11 L199.00,692.03 L199.50,692.00 L200.00,692.03 L200.50,692.11 L201.00,692.25 L201.50,692.44 L202.00,692.68 L202.50,692.97 L203.00,693.32 L203.50,693.71 L204.00,694.15 L204.50,694.63 L205.00,695.16 L205.50,695.73 L206.00,696.33 L206.50,696.97 L207.00,697.64 L207.50,698.33 L208.00,699.05 L208.50,699.80 L209.00,700.56 L209.50,701.33 L210.00,702.11 L210.50,702.90 L211.00,703.70 L211.50,704.49 L212.00,705.28 L212.50,706.06 L213.00,706.83 L213.50,707.58 L214.00,708.31 L214.50,709.02 L215.00,709.70 L215.50,710.36 L216.00,710.98 L216.50,711.56 L217.00,712.11 L217.50,712.61 L218.00,713.08 L218.50,713.49 L219.00,713.86 L219.50,714.18 L220.00,714.45 L220.50,714.67 L221.00,714.83 L221.50,714.94 L222.00,714.99 L222.50,714.99 L223.00,714.94 L223.50,714.83 L224.00,714.67 L224.50,714.45 L225.00,714.18 L225.50,713.86 L226.00,713.49 L226.50,713.08 L227.00,712.61 L227.50,712.11 L228.00,711.56 L228.50,710.98 L229.00,710.36 L229.50,709.70 L230.00,709.02 L230.50,708.31 L231.00,707.58 L231.50,706.83 L232.00,706.06 L232.50,705.28 L233.00,704.49 L233.50,703.70 L234.00,702.90 L234.50,702.11 L235.00,701.33 L235.50,700.56 L236.00,699.80 L236.50,699.05 L237.00,698.33 L237.50,697.64 L238.00,696.97 L238.50,696.33 L239.00,695.73 L239.50,695.16 L240.00,694.63 L240.50,694.15 L241.00,693.71 L241.50,693.32 L242.00,692.97 L242.50,692.68 L243.00,692.44 L243.50,692.25 L244.00,692.11 L244.50,692.03 L245.00,692.00 L245.50,692.03 L246.00,692.11 L246.50,692.25 L247.00,692.44 L247.50,692.68 L248.00,692.97 L248.50,693.32 L249.00,693.71 L249.50,694.15 L250.00,694.63 L250.50,695.16 L251.00,695.73 L251.50,696.33 L252.00,696.97 L252.50,697.64 L253.00,698.33 L253.50,699.05 L254.00,699.80 L254.50,700.56 L255.00,701.33 L255.50,702.11 L256.00,702.90 L256.50,703.70 L257.00,704.49 L257.50,705.28 L258.00,706.06 L258.50,706.83 L259.00,707.58 L259.50,708.31 L260.00,709.02 L260.50,709.70 L261.00,710.36 L261.50,710.98 L262.00,711.56 L262.50,712.11 L263.00,712.61 L263.50,713.08 L264.00,713.49 L264.50,713.86 L265.00,714.18 L265.50,714.45 L266.00,714.67 L266.50,714.83 L267.00,714.94 L267.50,714.99 L268.00,714.99 L268.50,714.94 L269.00,714.83 L269.50,714.67 L270.00,714.45 L270.50,714.18 L271.00,713.86 L271.50,713.49 L272.00,713.08 L272.50,712.61 L273.00,712.11 L273.50,711.56 L274.00,710.98 L274.50,710.36 L275.00,709.70 L275.50,709.02 L276.00,708.31 L276.50,707.58 L277.00,706.83 L277.50,706.06 L278.00,705.28 L278.50,704.49 L279.00,703.70 L279.50,702.90 L280.00,702.11 L280.50,701.33 L281.00,700.56 L281.50,699.80 L282.00,699.05 L282.50,698.33 L283.00,697.64 L283.50,696.97 L284.00,696.33 L284.50,695.73 L285.00,695.16 L285.50,694.63 L286.00,694.15 L286.50,693.71 L287.00,693.32 L287.50,692.97 L288.00,692.68 L288.50,692.44 L289.00,692.25 L289.50,692.11 L290.00,692.03 L290.50,692.00 L291.00,692.03 L291.50,692.11 L292.00,692.25 L292.50,692.44 L293.00,692.68 L293.50,692.97 L294.00,693.32 L294.50,693.71 L295.00,694.15 L295.50,694.63 L296.00,695.16 L296.50,695.73 L297.00,696.33 L297.50,696.97 L298.00,697.64 L298.50,698.33 L299.00,699.05 L299.50,699.80 L300.00,700.56 L300.50,701.33 L301.00,702.11 L301.50,702.90 L302.00,703.70 L302.50,704.49 L303.00,705.28 L303.50,706.06 L304.00,706.83 L304.50,707.58 L305.00,708.31 L305.50,709.02 L306.00,709.70 L306.50,710.36 L307.00,710.98 L307.50,711.56 L308.00,712.11 L308.50,712.61 L309.00,713.08 L309.50,713.49 L310.00,713.86 L310.50,714.18 L311.00,714.45 L311.50,714.67 L312.00,714.83 L312.50,714.94 L313.00,714.99 L313.50,714.99 L314.00,714.94 L314.50,714.83 L315.00,714.67 L315.50,714.45 L316.00,714.18 L316.50,713.86 L317.00,713.49 L317.50,713.08 L318.00,712.61 L318.50,712.11 L319.00,711.56 L319.50,710.98 L320.00,710.36 L320.50,709.70 L321.00,709.02 L321.50,708.31 L322.00,707.58 L322.50,706.83 L323.00,706.06 L323.50,705.28 L324.00,704.49 L324.50,703.70 L325.00,702.90 L325.50,702.11 L326.00,701.33 L326.50,700.56 L327.00,699.80 L327.50,699.05 L328.00,698.33 L328.50,697.64 L329.00,696.97 L329.50,696.33 L330.00,695.73 L330.50,695.16 L331.00,694.63 L331.50,694.15 L332.00,693.71 L332.50,693.32 L333.00,692.97 L333.50,692.68 L334.00,692.44 L334.50,692.25 L335.00,692.11 L335.50,692.03 L336.00,692.00 L336.50,692.03 L337.00,692.11 L337.50,692.25 L338.00,692.44 L338.50,692.68 L339.00,692.97 L339.50,693.32 L340.00,693.71 L340.50,694.15 L341.00,694.63 L341.50,695.16 L342.00,695.73 L342.50,696.33 L343.00,696.97 L343.50,697.64 L344.00,698.33 L344.50,699.05 L345.00,699.80 L345.50,700.56 L346.00,701.33 L346.50,702.11 L347.00,702.90 L347.50,703.70 L348.00,704.49 L348.50,705.28 L349.00,706.06 L349.50,706.83 L350.00,707.58 L350.50,708.31 L351.00,709.02 L351.50,709.70 L352.00,710.36 L352.50,710.98 L353.00,711.56 L353.50,712.11 L354.00,712.61 L354.50,713.08 L355.00,713.49 L355.50,713.86 L356.00,714.18 L356.50,714.45 L357.00,714.67 L357.50,714.83 L358.00,714.94 L358.50,714.99 L359.00,714.99 L359.50,714.94 L360.00,714.83 L360.50,714.67 L361.00,714.45 L361.50,714.18 L362.00,713.86 L362.50,713.49 L363.00,713.08 L363.50,712.61 L364.00,712.11 L364.50,711.56 L365.00,710.98 L365.50,710.36 L366.00,709.70 L366.50,709.02 L367.00,708.31 L367.50,707.58 L368.00,706.83 L368.50,706.06 L369.00,705.28 L369.50,704.49 L370.00,703.70 L370.50,702.90 L371.00,702.11 L371.50,701.33 L372.00,700.56 L372.50,699.80 L373.00,699.05 L373.50,698.33 L374.00,697.64 L374.50,696.97 L375.00,696.33 L375.50,695.73 L376.00,695.16 L376.50,694.63 L377.00,694.15 L377.50,693.71 L378.00,693.32 L378.50,692.97 L379.00,692.68 L379.50,692.44 L380.00,692.25 L380.50,692.11 L381.00,692.03 L381.50,692.00 L382.00,692.03 L382.50,692.11 L383.00,692.25 L383.50,692.44 L384.00,692.68 L384.50,692.97 L385.00,693.32 L385.50,693.71 L386.00,694.15 L386.00,413.00 L386.00,415.89 L386.50,417.63 L387.00,420.05 L387.50,423.14 L388.00,426.89 L388.50,431.28 L389.00,436.29 L389.50,441.89 L390.00,448.06 L390.50,454.76 L391.00,461.97 L391.50,469.66 L392.00,477.78 L392.50,486.29 L393.00,495.17 L393.50,504.35 L394.00,513.81 L394.50,523.49 L395.00,533.35 L395.50,543.34 L396.00,553.42 L396.50,563.53 L397.00,573.63 L397.50,583.67 L398.00,593.60 L398.50,603.38 L399.00,612.95 L399.50,622.28 L400.00,631.31 L400.50,640.01 L401.00,648.33 L401.50,656.24 L402.00,663.69 L402.50,670.66 L403.00,677.10 L403.50,682.99 L404.00,688.29 L404.50,692.99 L405.00,697.06 L405.50,700.49 L406.00,703.24 L406.50,705.32 L407.00,706.71 L407.50,707.41 L408.00,707.41 L408.50,706.71 L409.00,705.32 L409.50,703.24 L410.00,700.49 L410.50,697.06 L411.00,692.99 L411.50,688.29 L412.00,682.99 L412.50,677.10 L413.00,670.66 L413.50,663.69 L414.00,656.24 L414.50,648.33 L415.00,640.01 L415.50,631.31 L416.00,622.28 L416.50,612.95 L417.00,603.38 L417.50,593.60 L418.00,583.67 L418.50,573.63 L419.00,563.53 L419.50,553.42 L420.00,543.34 L420.50,533.35 L421.00,523.49 L421.50,513.81 L422.00,504.35 L422.50,495.17 L423.00,486.29 L423.50,477.78 L424.00,469.66 L424.50,461.97 L425.00,454.76 L425.50,448.06 L426.00,441.89 L426.50,436.29 L427.00,431.28 L427.50,426.89 L428.00,423.14 L428.50,420.05 L429.00,417.63 L429.50,415.89 L430.00,414.85 L430.50,414.50 L431.00,414.85 L431.50,415.89 L432.00,417.63 L432.50,420.05 L433.00,423.14 L433.50,426.89 L434.00,431.28 L434.50,436.29 L435.00,441.89 L435.50,448.06 L436.00,454.76 L436.50,461.97 L437.00,469.66 L437.50,477.78 L438.00,486.29 L438.50,495.17 L439.00,504.35 L439.50,513.81 L440.00,523.49 L440.50,533.35 L441.00,543.34 L441.50,553.42 L442.00,563.53 L442.50,573.63 L443.00,583.67 L443.50,593.60 L444.00,603.38 L444.50,612.95 L445.00,622.28 L445.50,631.31 L446.00,640.01 L446.50,648.33 L447.00,656.24 L447.50,663.69 L448.00,670.66 L448.50,677.10 L449.00,682.99 L449.50,688.29 L450.00,692.99 L450.50,697.06 L451.00,700.49 L451.50,703.24 L452.00,705.32 L452.50,706.71 L453.00,707.41 L453.50,707.41 L454.00,706.71 L454.50,705.32 L455.00,703.24 L455.50,700.49 L456.00,697.06 L456.50,692.99 L457.00,688.29 L457.50,682.99 L458.00,677.10 L458.50,670.66 L459.00,663.69 L459.50,656.24 L460.00,648.33 L460.50,640.01 L461.00,631.31 L461.50,622.28 L462.00,612.95 L462.50,603.38 L463.00,593.60 L463.50,583.67 L464.00,573.63 L464.50,563.53 L465.00,553.42 L465.50,543.34 L466.00,533.35 L466.50,523.49 L467.00,513.81 L467.50,504.35 L468.00,495.17 L468.50,486.29 L469.00,477.78 L469.50,469.66 L470.00,461.97 L470.50,454.76 L471.00,448.06 L471.50,441.89 L472.00,436.29 L472.50,431.28 L473.00,426.89 L473.50,423.14 L474.00,420.05 L474.50,417.63 L475.00,415.89 L475.50,414.85 L476.00,414.50 L476.50,414.85 L477.00,415.89 L477.50,417.63 L478.00,420.05 L478.50,423.14 L479.00,426.89 L479.50,431.28 L480.00,436.29 L480.50,441.89 L481.00,448.06 L481.50,454.76 L482.00,461.97 L482.50,469.66 L483.00,477.78 L483.50,486.29 L484.00,495.17 L484.50,504.35 L485.00,513.81 L485.50,523.49 L486.00,533.35 L486.50,543.34 L487.00,553.42 L487.50,563.53 L488.00,573.63 L488.50,583.67 L489.00,593.60 L489.50,603.38 L490.00,612.95 L490.50,622.28 L491.00,631.31 L491.50,640.01 L492.00,648.33 L492.50,656.24 L493.00,663.69 L493.50,670.66 L494.00,677.10 L494.50,682.99 L495.00,688.29 L495.50,692.99 L496.00,697.06 L496.50,700.49 L497.00,703.24 L497.50,705.32 L498.00,706.71 L498.50,707.41 L499.00,707.41 L499.50,706.71 L500.00,705.32 L500.50,703.24 L501.00,700.49 L501.50,697.06 L502.00,692.99 L502.50,688.29 L503.00,682.99 L503.50,677.10 L504.00,670.66 L504.50,663.69 L505.00,656.24 L505.50,648.33 L506.00,640.01 L506.50,631.31 L507.00,622.28 L507.50,612.95 L508.00,603.38 L508.50,593.60 L509.00,583.67 L509.50,573.63 L510.00,563.53 L510.50,553.42 L511.00,543.34 L511.50,533.35 L512.00,523.49 L512.50,513.81 L513.00,504.35 L513.50,495.17 L514.00,486.29 L514.50,477.78 L515.00,469.66 L515.50,461.97 L516.00,454.76 L516.50,448.06 L517.00,441.89 L517.50,436.29 L518.00,431.28 L518.50,426.89 L519.00,423.14 L519.50,420.05 L520.00,417.63 L520.50,415.89 L521.00,414.85 L521.50,414.50 L522.00,414.85 L522.50,415.89 L523.00,417.63 L523.50,420.05 L524.00,423.14 L524.50,426.89 L525.00,431.28 L525.50,436.29 L526.00,441.89 L526.50,448.06 L527.00,454.76 L527.50,461.97 L528.00,469.66 L528.50,477.78 L529.00,486.29 L529.50,495.17 L530.00,504.35 L530.50,513.81 L531.00,523.49 L531.50,533.35 L532.00,543.34 L532.50,553.42 L533.00,563.53 L533.50,573.63 L534.00,583.67 L534.50,593.60 L535.00,603.38 L535.50,612.95 L536.00,622.28 L536.50,631.31 L537.00,640.01 L537.50,648.33 L538.00,656.24 L538.50,663.69 L539.00,670.66 L539.50,677.10 L540.00,682.99 L540.50,688.29 L541.00,692.99 L541.50,697.06 L542.00,700.49 L542.50,703.24 L543.00,705.32 L543.50,706.71 L544.00,707.41 L544.50,707.41 L545.00,706.71 L545.50,705.32 L546.00,703.24 L546.50,700.49 L547.00,697.06 L547.50,692.99 L548.00,688.29 L548.50,682.99 L549.00,677.10 L549.50,670.66 L550.00,663.69 L550.50,656.24 L551.00,648.33 L551.50,640.01 L552.00,631.31 L552.50,622.28 L553.00,612.95 L553.50,603.38 L554.00,593.60 L554.50,583.67 L555.00,573.63 L555.50,563.53 L556.00,553.42 L556.50,543.34 L557.00,533.35 L557.50,523.49 L558.00,513.81 L558.50,504.35 L559.00,495.17 L559.50,486.29 L560.00,477.78 L560.50,469.66 L561.00,461.97 L561.50,454.76 L562.00,448.06 L562.50,441.89 L563.00,436.29 L563.50,431.28 L564.00,426.89 L564.50,423.14 L565.00,420.05 L565.50,417.63 L566.00,415.89 L566.50,414.85 L567.00,414.50 L567.50,414.85 L568.00,415.89 L568.50,417.63 L569.00,420.05 L569.50,423.14 L570.00,426.89 L570.50,431.28 L571.00,436.29 L571.50,441.89 L572.00,448.06 L572.50,454.76 L573.00,461.97 L573.50,469.66 L574.00,477.78 L574.50,486.29 L575.00,495.17 L575.50,504.35 L576.00,513.81 L576.50,523.49 L577.00,533.35 L577.50,543.34 L578.00,553.42 L578.50,563.53 L579.00,573.63 L579.50,583.67 L580.00,593.60 L580.50,603.38 L581.00,612.95 L581.50,622.28 L582.00,631.31 L582.50,640.01 L583.00,648.33 L583.50,656.24 L584.00,663.69 L584.50,670.66 L585.00,677.10 L585.50,682.99 L586.00,688.29 L586.50,692.99 L587.00,697.06 L587.50,700.49 L588.00,703.24 L588.50,705.32 L589.00,706.71 L589.50,707.41 L590.00,707.41 L590.50,706.71 L591.00,705.32 L591.50,703.24 L592.00,700.49 L592.50,697.06 L593.00,692.99 L593.50,688.29 L594.00,682.99 L594.50,677.10 L595.00,670.66 L595.50,663.69 L596.00,656.24 L596.50,648.33 L597.00,640.01 L597.50,631.31 L598.00,622.28 L598.50,612.95 L599.00,603.38 L599.50,593.60 L600.00,583.67 L600.50,573.63 L601.00,563.53 L601.50,553.42 L602.00,543.34 L602.50,533.35 L603.00,523.49 L603.50,513.81 L604.00,504.35 L604.50,495.17 L605.00,486.29 L605.50,477.78 L606.00,469.66 L606.50,461.97 L607.00,454.76 L607.50,448.06 L608.00,441.89 L608.50,436.29 L609.00,431.28 L609.50,426.89 L610.00,423.14 L610.50,420.05 L611.00,417.63 L611.50,415.89 L612.00,414.85 L612.50,414.50 L613.00,414.85 L613.50,415.89 L614.00,417.63 L614.50,420.05 L615.00,423.14 L615.50,426.89 L616.00,431.28 L616.50,436.29 L617.00,441.89 L617.50,448.06 L618.00,454.76 L618.50,461.97 L619.00,469.66 L619.50,477.78 L620.00,486.29 L620.50,495.17 L621.00,504.35 L621.50,513.81 L622.00,523.49 L622.50,533.35 L623.00,543.34 L623.50,553.42 L624.00,563.53 L624.50,573.63 L625.00,583.67 L625.50,593.60 L626.00,603.38 L626.50,612.95 L627.00,622.28 L627.50,631.31 L628.00,640.01 L628.50,648.33 L629.00,656.24 L629.50,663.69 L630.00,670.66 L630.50,677.10 L631.00,682.99 L631.50,688.29 L632.00,692.99 L632.50,697.06 L633.00,700.49 L633.50,703.24 L634.00,705.32 L634.50,706.71 L635.00,707.41 L635.50,707.41 L636.00,706.71 L636.50,705.32 L637.00,703.24 L637.50,700.49 L638.00,697.06 L638.50,692.99 L639.00,688.29 L639.50,682.99 L640.00,677.10 L640.50,670.66 L641.00,663.69 L641.50,656.24 L642.00,648.33 L642.50,640.01 L643.00,631.31 L643.50,622.28 L644.00,612.95 L644.50,603.38 L645.00,593.60 L645.50,583.67 L646.00,573.63 L646.50,563.53 L647.00,553.42 L647.50,543.34 L648.00,533.35 L648.50,523.49 L649.00,513.81 L649.50,504.35 L650.00,495.17 L650.50,486.29 L651.00,477.78 L651.50,469.66 L652.00,461.97 L652.50,454.76 L653.00,448.06 L653.50,441.89 L654.00,436.29 L654.50,431.28 L655.00,426.89 L655.50,423.14 L656.00,420.05 L656.50,417.63 L657.00,415.89 L657.50,414.85 L658.00,414.50 L658.50,414.85 L659.00,415.89 L659.50,417.63 L660.00,420.05 L660.50,423.14 L661.00,426.89 L661.50,431.28 L662.00,436.29 L662.50,441.89 L663.00,448.06 L663.50,454.76 L664.00,461.97 L664.50,469.66 L665.00,477.78 L665.50,486.29 L666.00,495.17 L666.50,504.35 L667.00,513.81 L667.50,523.49 L668.00,533.35 L668.50,543.34 L669.00,553.42 L669.50,563.53 L670.00,573.63 L670.50,583.67 L671.00,593.60 L671.50,603.38 L672.00,612.95 L672.50,622.28 L673.00,631.31 L673.50,640.01 L674.00,648.33 L674.50,656.24 L675.00,663.69 L675.50,670.66 L676.00,677.10 L676.50,682.99 L677.00,688.29 L677.50,692.99 L678.00,697.06 L678.50,700.49 L679.00,703.24 L679.50,705.32 L680.00,706.71 L680.50,707.41 L681.00,707.41 L681.50,706.71 L682.00,705.32 L682.50,703.24 L683.00,700.49 L683.50,697.06 L684.00,692.99 L684.50,688.29 L685.00,682.99 L685.50,677.10 L686.00,670.66 L686.50,663.69 L687.00,656.24 L687.50,648.33 L688.00,640.01 L688.50,631.31 L689.00,622.28 L689.50,612.95 L690.00,603.38 L690.50,593.60 L691.00,583.67 L691.50,573.63 L692.00,563.53 L692.50,553.42 L693.00,543.34 L693.50,533.35 L694.00,523.49 L694.50,513.81 L695.00,504.35 L695.50,495.17 L696.00,486.29 L696.50,477.78 L697.00,469.66 L697.50,461.97 L698.00,454.76 L698.50,448.06 L699.00,441.89 L699.50,436.29 L700.00,431.28 L700.50,426.89 L701.00,423.14 L701.50,420.05 L702.00,417.63 L702.50,415.89 L703.00,414.85 L703.50,414.50 L704.00,414.85 L704.50,415.89 L705.00,417.63 L705.50,420.05 L706.00,423.14 L706.50,426.89 L707.00,431.28 L707.50,436.29 L708.00,441.89 L708.50,448.06 L709.00,454.76 L709.50,461.97 L710.00,469.66 L710.50,477.78 L711.00,486.29 L711.50,495.17 L712.00,504.35 L712.50,513.81 L713.00,523.49 L713.50,533.35 L714.00,543.34 L714.50,553.42 L715.00,563.53 L715.50,573.63 L716.00,583.67 L716.50,593.60 L717.00,603.38 L717.50,612.95 L718.00,622.28 L718.50,631.31 L719.00,640.01 L719.50,648.33 L720.00,656.24 L720.50,663.69 L721.00,670.66 L721.50,677.10 L722.00,682.99 L722.50,688.29 L723.00,692.99 L723.50,697.06 L724.00,700.49 L724.50,703.24 L725.00,705.32 L725.50,706.71 L726.00,707.41 L726.50,707.41 L727.00,706.71 L727.50,705.32 L728.00,703.24 L728.50,700.49 L729.00,697.06 L729.50,692.99 L730.00,688.29 L730.50,682.99 L731.00,677.10 L731.50,670.66 L732.00,663.69 L732.50,656.24 L733.00,648.33 L733.50,640.01 L734.00,631.31 L734.50,622.28 L735.00,612.95 L735.50,603.38 L736.00,593.60 L736.50,583.67 L737.00,573.63 L737.50,563.53 L738.00,553.42 L738.50,543.34 L739.00,533.35 L739.50,523.49 L740.00,513.81 L740.50,504.35 L741.00,495.17 L741.50,486.29 L742.00,477.78 L742.50,469.66 L743.00,461.97 L743.50,454.76 L744.00,448.06 L744.50,441.89 L745.00,436.29 L745.50,431.28 L746.00,426.89 L746.50,423.14 L747.00,420.05 L747.50,417.63 L748.00,415.89 L748.50,414.85 L749.00,414.50 L749.50,414.85 L750.00,415.89 L750.50,417.63 L751.00,420.05 L751.50,423.14 L752.00,426.89 L752.50,431.28 L753.00,436.29 L753.50,441.89 L754.00,448.06 L754.50,454.76 L755.00,461.97 L755.50,469.66 L756.00,477.78 L756.50,486.29 L757.00,495.17 L757.50,504.35 L758.00,513.81 L758.50,523.49 L759.00,533.35 L759.50,543.34 L760.00,553.42 L760.50,563.53 L761.00,573.63 L761.50,583.67 L762.00,593.60 L762.50,603.38 L763.00,612.95 L763.50,622.28 L764.00,631.31 L764.50,640.01 L765.00,648.33 L765.50,656.24 L766.00,663.69 L766.50,670.66 L767.00,677.10 L767.50,682.99 L768.00,688.29 L768.50,692.99 L769.00,697.06 L769.50,700.49 L770.00,703.24 L770.50,705.32 L771.00,706.71 L771.50,707.41 L772.00,707.41 L772.50,706.71 L773.00,705.32 L773.50,703.24 L774.00,700.49 L774.50,697.06 L775.00,692.99 L775.50,688.29 L776.00,682.99 L776.50,677.10 L777.00,670.66 L777.50,663.69 L778.00,656.24 L778.50,648.33 L779.00,640.01 L779.50,631.31 L780.00,622.28 L780.50,612.95 L781.00,603.38 L781.50,593.60 L782.00,583.67 L782.50,573.63 L783.00,563.53 L783.50,553.42 L784.00,543.34 L784.50,533.35 L785.00,523.49 L785.50,513.81 L786.00,504.35 L786.50,495.17 L787.00,486.29 L787.50,477.78 L788.00,469.66 L788.50,461.97 L789.00,454.76 L789.50,448.06 L790.00,441.89 L790.50,436.29 L791.00,431.28 L791.50,426.89 L792.00,423.14 L792.50,420.05 L793.00,417.63 L793.50,415.89 L794.00,414.85 L794.50,414.50 L795.00,414.85 L795.50,415.89 L796.00,417.63 L796.50,420.05 L797.00,423.14 L797.50,426.89 L798.00,431.28 L798.50,436.29 L799.00,441.89 L799.50,448.06 L800.00,454.76 L800.50,461.97 L801.00,469.66 L801.50,477.78 L802.00,486.29 L802.50,495.17 L803.00,504.35 L803.50,513.81 L804.00,523.49 L804.50,533.35 L805.00,543.34 L805.50,553.42 L806.00,563.53 L806.50,573.63 L807.00,583.67 L807.50,593.60 L808.00,603.38 L808.50,612.95 L809.00,622.28 L809.50,631.31 L810.00,640.01 L810.50,648.33 L811.00,656.24 L811.50,663.69 L812.00,670.66 L812.50,677.10 L813.00,682.99 L813.50,688.29 L814.00,692.99 L814.50,697.06 L815.00,700.49 L815.50,700.34 L816.00,700.23 L816.50,700.14 L817.00,700.09 L817.50,700.07 L818.00,700.07 L818.50,700.09 L819.00,700.13 L819.50,700.18 L820.00,700.23 L820.50,700.28 L821.00,700.33 L821.50,700.37 L822.00,700.40 L822.50,700.40 L823.00,700.39 L823.50,700.35 L824.00,700.28 L824.50,700.19 L825.00,700.06 L825.50,699.90 L826.00,699.71 L826.50,699.49 L827.00,699.24 L827.50,698.96 L828.00,698.65 L828.50,698.33 L829.00,697.98 L829.50,697.62 L830.00,697.25 L830.50,696.87 L831.00,696.49 L831.50,696.12 L832.00,695.76 L832.50,695.42 L833.00,695.10 L833.50,694.81 L834.00,694.56 L834.50,694.34 L835.00,694.17 L835.50,694.04 L836.00,693.97 L836.50,693.95 L837.00,693.98 L837.50,694.07 L838.00,694.21 L838.50,694.41 L839.00,694.67 L839.50,694.97 L840.00,695.32 L840.50,695.71 L841.00,696.15 L841.50,696.63 L842.00,697.16 L842.50,697.73 L843.00,698.33 L843.50,698.97 L844.00,699.64 L844.50,700.33 L845.00,701.05 L845.50,701.80 L846.00,702.56 L846.50,703.33 L847.00,704.11 L847.50,704.90 L848.00,705.70 L848.50,706.49 L849.00,707.28 L849.50,708.06 L850.00,708.83 L850.50,709.58 L851.00,710.31 L851.50,711.02 L852.00,711.70 L852.50,712.36 L853.00,712.98 L853.50,713.56 L854.00,714.11 L854.50,714.61 L855.00,715.08 L855.50,715.49 L856.00,715.86 L856.50,716.18 L857.00,716.45 L857.50,716.67 L858.00,716.83 L858.50,716.94 L859.00,716.99 L859.50,716.99 L860.00,716.94 L860.50,716.83 L861.00,716.67 L861.50,716.45 L862.00,716.18 L862.50,715.86 L863.00,715.49 L863.50,715.08 L864.00,714.61 L864.50,714.11 L865.00,713.56 L865.50,712.98 L866.00,712.36 L866.50,711.70 L867.00,711.02 L867.50,710.31 L868.00,709.58 L868.50,708.83 L869.00,708.06 L869.50,707.28 L870.00,706.49 L870.50,705.70 L871.00,704.90 L871.50,704.11 L872.00,703.33 L872.50,702.56 L873.00,701.80 L873.50,701.05 L874.00,700.33 L874.50,699.64 L875.00,698.97 L875.50,698.33 L876.00,697.73 L876.50,697.16 L877.00,696.63 L877.50,696.15 L878.00,695.71 L878.50,695.32 L879.00,694.97 L879.50,694.68 L880.00,694.44 L880.50,694.25 L881.00,694.11 L881.50,694.03 L882.00,694.00 L882.50,694.03 L883.00,694.11 L883.50,694.25 L884.00,694.44 L884.50,694.68 L885.00,694.97 L885.50,695.32 L886.00,695.71 L886.50,696.15 L887.00,696.63 L887.50,697.16 L888.00,697.73 L888.50,698.33 L889.00,698.97 L889.50,699.64 L890.00,700.33 L890.50,701.05 L891.00,701.80 L891.50,702.56 L892.00,703.33 L892.50,704.11 L893.00,704.90 L893.50,705.70 L894.00,706.49 L894.50,707.28 L895.00,708.06 L895.50,708.83 L896.00,709.58 L896.50,710.31 L897.00,711.02 L897.50,711.70 L898.00,712.36 L898.50,712.98 L899.00,713.56 L899.50,714.11 L900.00,714.61 L900.50,715.08 L901.00,715.49 L901.50,715.86 L902.00,716.18 L902.50,716.45 L903.00,716.67 L903.50,716.83 L904.00,716.94 L904.50,716.99 L905.00,716.99 L905.50,716.94 L906.00,716.83 L906.50,716.67 L907.00,716.45 L907.50,716.18 L908.00,715.86 L908.50,715.49 L909.00,715.08 L909.50,714.61 L910.00,714.11 L910.50,713.56 L911.00,712.98 L911.50,712.36 L912.00,711.70 L912.50,711.02 L913.00,710.31 L913.50,709.58 L914.00,708.83 L914.50,708.06 L915.00,707.28 L915.50,706.49 L916.00,705.70 L916.50,704.90 L917.00,704.11 L917.50,703.33 L918.00,702.56 L918.50,701.80 L919.00,701.05 L919.50,700.33 L920.00,699.64 L920.50,698.97 L921.00,698.33 L921.50,697.73 L922.00,697.16 L922.50,696.63 L923.00,696.15 L923.50,695.71 L924.00,695.32 L924.50,694.97 L925.00,694.68 L925.50,694.44 L926.00,694.25 L926.50,694.11 L927.00,694.03 L927.50,694.00 L928.00,694.03 L928.50,694.11 L929.00,694.25 L929.50,694.44 L930.00,694.68 L930.50,694.97 L931.00,695.32 L931.50,695.71 L932.00,696.15 L932.50,696.63 L933.00,697.16 L933.50,697.73 L934.00,698.33 L934.50,698.97 L935.00,699.64 L935.50,700.33 L936.00,701.05 L936.50,701.80 L937.00,702.56 L937.50,703.33 L938.00,704.11 L938.50,704.90 L939.00,705.70 L939.50,706.49 L940.00,707.28 L940.50,708.06 L941.00,708.83 L941.50,709.58 L942.00,710.31 L942.50,711.02 L943.00,711.70 L943.50,712.36 L944.00,712.98 L944.50,713.56 L945.00,714.11 L945.50,714.61 L946.00,715.08 L946.50,715.49 L947.00,715.86 L947.50,716.18 L948.00,716.45 L948.50,716.67 L949.00,716.83 L949.50,716.94 L950.00,716.99 L950.50,716.99 L951.00,716.94 L951.50,716.83 L952.00,716.67 L952.50,716.45 L953.00,716.18 L953.50,715.86 L954.00,715.49 L954.50,715.08 L955.00,714.61 L955.50,714.11 L956.00,713.56 L956.50,712.98 L957.00,712.36 L957.50,711.70 L958.00,711.02 L958.50,710.31 L959.00,709.58 L959.50,708.83 L960.00,708.06 L960.50,707.28 L961.00,706.49 L961.50,705.70 L962.00,704.90 L962.50,704.11 L963.00,703.33 L963.50,702.56 L964.00,701.80 L964.50,701.05 L965.00,700.33 L965.50,699.64 L966.00,698.97 L966.50,698.33 L967.00,697.73 L967.50,697.16 L968.00,696.63 L968.50,696.15 L969.00,695.71 L969.50,695.32 L970.00,694.97 L970.50,694.68 L971.00,694.44 L971.50,694.25 L972.00,694.11 L972.50,694.03 L973.00,694.00 L973.50,694.03 L974.00,694.11 L974.50,694.25 L975.00,694.44 L975.50,694.68 L976.00,694.97 L976.50,695.32 L977.00,695.71 L977.50,696.15 L978.00,696.63 L978.50,697.16 L979.00,697.73 L979.50,698.33 L980.00,698.97 L980.50,699.64 L981.00,700.33 L981.50,701.05 L982.00,701.80 L982.50,702.56 L983.00,703.33 L983.50,704.11 L984.00,704.90 L984.50,705.70 L985.00,706.49 L985.50,707.28 L986.00,708.06 L986.50,708.83 L987.00,709.58 L987.50,710.31 L988.00,711.02 L988.50,711.70 L989.00,712.36 L989.50,712.98 L990.00,713.56 L990.50,714.11 L991.00,714.61 L991.50,715.08 L992.00,715.49 L992.50,715.86 L993.00,716.18 L993.50,716.45 L994.00,716.67 L994.50,716.83 L995.00,716.94 L995.50,716.99 L996.00,716.99 L996.50,716.94 L997.00,716.83 L997.50,716.67 L998.00,716.45 L998.50,716.18 L999.00,715.86 L999.50,715.49 L1000.00,715.08 L1000.50,714.61 L1001.00,714.11 L1001.50,713.56 L1002.00,712.98 L1002.50,712.36 L1003.00,711.70 L1003.50,711.02 L1004.00,710.31 L1004.50,709.58 L1005.00,708.83 L1005.50,708.06 L1006.00,707.28 L1006.50,706.49 L1007.00,705.70 L1007.50,704.90 L1008.00,704.11 L1008.50,703.33 L1009.00,702.56 L1009.50,701.80 L1010.00,701.05 L1010.50,700.33 L1011.00,699.64 L1011.50,698.97 L1012.00,698.33 L1012.50,697.73 L1013.00,697.16 L1013.50,696.63 L1014.00,696.15 L1014.50,695.71 L1015.00,695.32 L1015.50,694.97 L1016.00,694.68 L1016.50,694.44 L1017.00,694.25 L1017.50,694.11 L1018.00,694.03 L1018.50,694.00 L1019.00,694.03 L1019.50,694.11 L1020.00,694.25 L1020.50,694.44 L1021.00,694.68 L1021.50,694.97 L1022.00,695.32 L1022.50,695.71 L1023.00,696.15 L1023.50,696.63 L1024.00,697.16 L1024.50,697.73 L1025.00,698.33 L1025.50,698.97 L1026.00,699.64 L1026.50,700.33 L1027.00,701.05 L1027.50,701.80 L1028.00,702.56 L1028.50,703.33 L1029.00,704.11 L1029.50,704.90 L1030.00,705.70 L1030.50,706.49 L1031.00,707.28 L1031.50,708.06 L1032.00,708.83 L1032.50,709.58 L1033.00,710.31 L1033.50,711.02 L1034.00,711.70 L1034.50,712.36 L1035.00,712.98 L1035.50,713.56 L1036.00,714.11 L1036.50,714.61 L1037.00,715.08 L1037.50,715.49 L1038.00,715.86 L1038.50,716.18 L1039.00,716.45 L1039.50,716.67 L1040.00,716.83 L1040.50,716.94 L1041.00,716.99 L1041.50,716.99 L1042.00,716.94 L1042.50,716.83 L1043.00,716.67 L1043.50,716.45 L1044.00,716.18 L1044.50,715.86 L1045.00,715.49 L1045.50,715.08 L1046.00,714.61 L1046.50,714.11 L1047.00,713.56 L1047.50,712.98 L1048.00,712.36" fill="none" stroke="#5a005a" stroke-width="4" opacity="0.5"/><text x="865.75" y="202" font-size="11.5" font-family="Liberation Sans" fill="#e00000" textLength="170.00" lengthAdjust="spacingAndGlyphs">Channel 4 range will be extended!</text><path d="M137.00,711.56 L137.50,710.98 L138.00,710.36 L138.50,709.70 L139.00,709.02 L139.50,708.31 L140.00,707.58 L140.50,706.83 L141.00,706.06 L141.50,705.28 L142.00,704.49 L142.50,703.70 L143.00,702.90 L143.50,702.11 L144.00,701.33 L144.50,700.56 L145.00,699.80 L145.50,699.05 L146.00,698.33 L146.50,697.64 L147.00,696.97 L147.50,696.33 L148.00,695.73 L148.50,695.16 L149.00,694.63 L149.50,694.15 L150.00,693.71 L150.50,693.32 L151.00,692.97 L151.50,692.68 L152.00,692.44 L152.50,692.25 L153.00,692.11 L153.50,692.03 L154.00,692.00 L154.50,692.03 L155.00,692.11 L155.50,692.25 L156.00,692.44 L156.50,692.68 L157.00,692.97 L157.50,693.32 L158.00,693.71 L158.50,694.15 L159.00,694.63 L159.50,695.16 L160.00,695.73 L160.50,696.33 L161.00,696.97 L161.50,697.64 L162.00,698.33 L162.50,699.05 L163.00,699.80 L163.50,700.56 L164.00,701.33 L164.50,702.11 L165.00,702.90 L165.50,703.70 L166.00,704.49 L166.50,705.28 L167.00,706.06 L167.50,706.83 L168.00,707.58 L168.50,708.31 L169.00,709.02 L169.50,709.70 L170.00,710.36 L170.50,710.98 L171.00,711.56 L171.50,712.11 L172.00,712.61 L172.50,713.08 L173.00,713.49 L173.50,713.86 L174.00,714.18 L174.50,714.45 L175.00,714.67 L175.50,714.83 L176.00,714.94 L176.50,714.99 L177.00,714.99 L177.50,714.94 L178.00,714.83 L178.50,714.67 L179.00,714.45 L179.50,714.18 L180.00,713.86 L180.50,713.49 L181.00,713.08 L181.50,712.61 L182.00,712.11 L182.50,711.56 L183.00,710.98 L183.50,710.36 L184.00,709.70 L184.50,709.02 L185.00,708.31 L185.50,707.58 L186.00,706.83 L186.50,706.06 L187.00,705.28 L187.50,704.49 L188.00,703.70 L188.50,702.90 L189.00,702.11 L189.50,701.33 L190.00,700.56 L190.50,699.80 L191.00,699.05 L191.50,698.33 L192.00,697.64 L192.50,696.97 L193.00,696.33 L193.50,695.73 L194.00,695.16 L194.50,694.63 L195.00,694.15 L195.50,693.71 L196.00,693.32 L196.50,692.97 L197.00,692.68 L197.50,692.44 L198.00,692.25 L198.50,692.11 L199.00,692.03 L199.50,692.00 L200.00,692.03 L200.50,692.11 L201.00,692.25 L201.50,692.44 L202.00,692.68 L202.50,692.97 L203.00,693.32 L203.50,693.71 L204.00,694.15 L204.50,694.63 L205.00,695.16 L205.50,695.73 L206.00,696.33 L206.50,696.97 L207.00,697.64 L207.50,698.33 L208.00,699.05 L208.50,699.80 L209.00,700.56 L209.50,701.33 L210.00,702.11 L210.50,702.90 L211.00,703.70 L211.50,704.49 L212.00,705.28 L212.50,706.06 L213.00,706.83 L213.50,707.58 L214.00,708.31 L214.50,709.02 L215.00,709.70 L215.50,710.36 L216.00,710.98 L216.50,711.56 L217.00,712.11 L217.50,712.61 L218.00,713.08 L218.50,713.49 L219.00,713.86 L219.50,714.18 L220.00,714.45 L220.50,714.67 L221.00,714.83 L221.50,714.94 L222.00,714.99 L222.50,714.99 L223.00,714.94 L223.50,714.83 L224.00,714.67 L224.50,714.45 L225.00,714.18 L225.50,713.86 L226.00,713.49 L226.50,713.08 L227.00,712.61 L227.50,712.11 L228.00,711.56 L228.50,710.98 L229.00,710.36 L229.50,709.70 L230.00,709.02 L230.50,708.31 L231.00,707.58 L231.50,706.83 L232.00,706.06 L232.50,705.28 L233.00,704.49 L233.50,703.70 L234.00,702.90 L234.50,702.11 L235.00,701.33 L235.50,700.56 L236.00,699.80 L236.50,699.05 L237.00,698.33 L237.50,697.64 L238.00,696.97 L238.50,696.33 L239.00,695.73 L239.50,695.16 L240.00,694.63 L240.50,694.15 L241.00,693.71 L241.50,693.32 L242.00,692.97 L242.50,692.68 L243.00,692.44 L243.50,692.25 L244.00,692.11 L244.50,692.03 L245.00,692.00 L245.50,692.03 L246.00,692.11 L246.50,692.25 L247.00,692.44 L247.50,692.68 L248.00,692.97 L248.50,693.32 L249.00,693.71 L249.50,694.15 L250.00,694.63 L250.50,695.16 L251.00,695.73 L251.50,696.33 L252.00,696.97 L252.50,697.64 L253.00,698.33 L253.50,699.05 L254.00,699.80 L254.50,700.56 L255.00,701.33 L255.50,702.11 L256.00,702.90 L256.50,703.70 L257.00,704.49 L257.50,705.28 L258.00,706.06 L258.50,706.83 L259.00,707.58 L259.50,708.31 L260.00,709.02 L260.50,709.70 L261.00,710.36 L261.50,710.98 L262.00,711.56 L262.50,712.11 L263.00,712.61 L263.50,713.08 L264.00,713.49 L264.50,713.86 L265.00,714.18 L265.50,714.45 L266.00,714.67 L266.50,714.83 L267.00,714.94 L267.50,714.99 L268.00,714.99 L268.50,714.94 L269.00,714.83 L269.50,714.67 L270.00,714.45 L270.50,714.18 L271.00,713.86 L271.50,713.49 L272.00,713.08 L272.50,712.61 L273.00,712.11 L273.50,711.56 L274.00,710.98 L274.50,710.36 L275.00,709.70 L275.50,709.02 L276.00,708.31 L276.50,707.58 L277.00,706.83 L277.50,706.06 L278.00,705.28 L278.50,704.49 L279.00,703.70 L279.50,702.90 L280.00,702.11 L280.50,701.33 L281.00,700.56 L281.50,699.80 L282.00,699.05 L282.50,698.33 L283.00,697.64 L283.50,696.97 L284.00,696.33 L284.50,695.73 L285.00,695.16 L285.50,694.63 L286.00,694.15 L286.50,693.71 L287.00,693.32 L287.50,692.97 L288.00,692.68 L288.50,692.44 L289.00,692.25 L289.50,692.11 L290.00,692.03 L290.50,692.00 L291.00,692.03 L291.50,692.11 L292.00,692.25 L292.50,692.44 L293.00,692.68 L293.50,692.97 L294.00,693.32 L294.50,693.71 L295.00,694.15 L295.50,694.63 L296.00,695.16 L296.50,695.73 L297.00,696.33 L297.50,696.97 L298.00,697.64 L298.50,698.33 L299.00,699.05 L299.50,699.80 L300.00,700.56 L300.50,701.33 L301.00,702.11 L301.50,702.90 L302.00,703.70 L302.50,704.49 L303.00,705.28 L303.50,706.06 L304.00,706.83 L304.50,707.58 L305.00,708.31 L305.50,709.02 L306.00,709.70 L306.50,710.36 L307.00,710.98 L307.50,711.56 L308.00,712.11 L308.50,712.61 L309.00,713.08 L309.50,713.49 L310.00,713.86 L310.50,714.18 L311.00,714.45 L311.50,714.67 L312.00,714.83 L312.50,714.94 L313.00,714.99 L313.50,714.99 L314.00,714.94 L314.50,714.83 L315.00,714.67 L315.50,714.45 L316.00,714.18 L316.50,713.86 L317.00,713.49 L317.50,713.08 L318.00,712.61 L318.50,712.11 L319.00,711.56 L319.50,710.98 L320.00,710.36 L320.50,709.70 L321.00,709.02 L321.50,708.31 L322.00,707.58 L322.50,706.83 L323.00,706.06 L323.50,705.28 L324.00,704.49 L324.50,703.70 L325.00,702.90 L325.50,702.11 L326.00,701.33 L326.50,700.56 L327.00,699.80 L327.50,699.05 L328.00,698.33 L328.50,697.64 L329.00,696.97 L329.50,696.33 L330.00,695.73 L330.50,695.16 L331.00,694.63 L331.50,694.15 L332.00,693.71 L332.50,693.32 L333.00,692.97 L333.50,692.68 L334.00,692.44 L334.50,692.25 L335.00,692.11 L335.50,692.03 L336.00,692.00 L336.50,692.03 L337.00,692.11 L337.50,692.25 L338.00,692.44 L338.50,692.68 L339.00,692.97 L339.50,693.32 L340.00,693.71 L340.50,694.15 L341.00,694.63 L341.50,695.16 L342.00,695.73 L342.50,696.33 L343.00,696.97 L343.50,697.64 L344.00,698.33 L344.50,699.05 L345.00,699.80 L345.50,700.56 L346.00,701.33 L346.50,702.11 L347.00,702.90 L347.50,703.70 L348.00,704.49 L348.50,705.28 L349.00,706.06 L349.50,706.83 L350.00,707.58 L350.50,708.31 L351.00,709.02 L351.50,709.70 L352.00,710.36 L352.50,710.98 L353.00,711.56 L353.50,712.11 L354.00,712.61 L354.50,713.08 L355.00,713.49 L355.50,713.86 L356.00,714.18 L356.50,714.45 L357.00,714.67 L357.50,714.83 L358.00,714.94 L358.50,714.99 L359.00,714.99 L359.50,714.94 L360.00,714.83 L360.50,714.67 L361.00,714.45 L361.50,714.18 L362.00,713.86 L362.50,713.49 L363.00,713.08 L363.50,712.61 L364.00,712.11 L364.50,711.56 L365.00,710.98 L365.50,710.36 L366.00,709.70 L366.50,709.02 L367.00,708.31 L367.50,707.58 L368.00,706.83 L368.50,706.06 L369.00,705.28 L369.50,704.49 L370.00,703.70 L370.50,702.90 L371.00,702.11 L371.50,701.33 L372.00,700.56 L372.50,699.80 L373.00,699.05 L373.50,698.33 L374.00,697.64 L374.50,696.97 L375.00,696.33 L375.50,695.73 L376.00,695.16 L376.50,694.63 L377.00,694.15 L377.50,693.71 L378.00,693.32 L378.50,692.97 L379.00,692.68 L379.50,692.44 L380.00,692.25 L380.50,692.11 L381.00,692.03 L381.50,692.00 L382.00,692.03 L382.50,692.11 L383.00,692.25 L383.50,692.44 L384.00,692.68 L384.50,692.97 L385.00,693.32 L385.50,693.71 L386.00,694.15 L386.00,413.00 L386.00,415.89 L386.50,417.63 L387.00,420.05 L387.50,423.14 L388.00,426.89 L388.50,431.28 L389.00,436.29 L389.50,441.89 L390.00,448.06 L390.50,454.76 L391.00,461.97 L391.50,469.66 L392.00,477.78 L392.50,486.29 L393.00,495.17 L393.50,504.35 L394.00,513.81 L394.50,523.49 L395.00,533.35 L395.50,543.34 L396.00,553.42 L396.50,563.53 L397.00,573.63 L397.50,583.67 L398.00,593.60 L398.50,603.38 L399.00,612.95 L399.50,622.28 L400.00,631.31 L400.50,640.01 L401.00,648.33 L401.50,656.24 L402.00,663.69 L402.50,670.66 L403.00,677.10 L403.50,682.99 L404.00,688.29 L404.50,692.99 L405.00,697.06 L405.50,700.49 L406.00,703.24 L406.50,705.32 L407.00,706.71 L407.50,707.41 L408.00,707.41 L408.50,706.71 L409.00,705.32 L409.50,703.24 L410.00,700.49 L410.50,697.06 L411.00,692.99 L411.50,688.29 L412.00,682.99 L412.50,677.10 L413.00,670.66 L413.50,663.69 L414.00,656.24 L414.50,648.33 L415.00,640.01 L415.50,631.31 L416.00,622.28 L416.50,612.95 L417.00,603.38 L417.50,593.60 L418.00,583.67 L418.50,573.63 L419.00,563.53 L419.50,553.42 L420.00,543.34 L420.50,533.35 L421.00,523.49 L421.50,513.81 L422.00,504.35 L422.50,495.17 L423.00,486.29 L423.50,477.78 L424.00,469.66 L424.50,461.97 L425.00,454.76 L425.50,448.06 L426.00,441.89 L426.50,436.29 L427.00,431.28 L427.50,426.89 L428.00,423.14 L428.50,420.05 L429.00,417.63 L429.50,415.89 L430.00,414.85 L430.50,414.50 L431.00,414.85 L431.50,415.89 L432.00,417.63 L432.50,420.05 L433.00,423.14 L433.50,426.89 L434.00,431.28 L434.50,436.29 L435.00,441.89 L435.50,448.06 L436.00,454.76 L436.50,461.97 L437.00,469.66 L437.50,477.78 L438.00,486.29 L438.50,495.17 L439.00,504.35 L439.50,513.81 L440.00,523.49 L440.50,533.35 L441.00,543.34 L441.50,553.42 L442.00,563.53 L442.50,573.63 L443.00,583.67 L443.50,593.60 L444.00,603.38 L444.50,612.95 L445.00,622.28 L445.50,631.31 L446.00,640.01 L446.50,648.33 L447.00,656.24 L447.50,663.69 L448.00,670.66 L448.50,677.10 L449.00,682.99 L449.50,688.29 L450.00,692.99 L450.50,697.06 L451.00,700.49 L451.50,703.24 L452.00,705.32 L452.50,706.71 L453.00,707.41 L453.50,707.41 L454.00,706.71 L454.50,705.32 L455.00,703.24 L455.50,700.49 L456.00,697.06 L456.50,692.99 L457.00,688.29 L457.50,682.99 L458.00,677.10 L458.50,670.66 L459.00,663.69 L459.50,656.24 L460.00,648.33 L460.50,640.01 L461.00,631.31 L461.50,622.28 L462.00,612.95 L462.50,603.38 L463.00,593.60 L463.50,583.67 L464.00,573.63 L464.50,563.53 L465.00,553.42 L465.50,543.34 L466.00,533.35 L466.50,523.49 L467.00,513.81 L467.50,504.35 L468.00,495.17 L468.50,486.29 L469.00,477.78 L469.50,469.66 L470.00,461.97 L470.50,454.76 L471.00,448.06 L471.50,441.89 L472.00,436.29 L472.50,431.28 L473.00,426.89 L473.50,423.14 L474.00,420.05 L474.50,417.63 L475.00,415.89 L475.50,414.85 L476.00,414.50 L476.50,414.85 L477.00,415.89 L477.50,417.63 L478.00,420.05 L478.50,423.14 L479.00,426.89 L479.50,431.28 L480.00,436.29 L480.50,441.89 L481.00,448.06 L481.50,454.76 L482.00,461.97 L482.50,469.66 L483.00,477.78 L483.50,486.29 L484.00,495.17 L484.50,504.35 L485.00,513.81 L485.50,523.49 L486.00,533.35 L486.50,543.34 L487.00,553.42 L487.50,563.53 L488.00,573.63 L488.50,583.67 L489.00,593.60 L489.50,603.38 L490.00,612.95 L490.50,622.28 L491.00,631.31 L491.50,640.01 L492.00,648.33 L492.50,656.24 L493.00,663.69 L493.50,670.66 L494.00,677.10 L494.50,682.99 L495.00,688.29 L495.50,692.99 L496.00,697.06 L496.50,700.49 L497.00,703.24 L497.50,705.32 L498.00,706.71 L498.50,707.41 L499.00,707.41 L499.50,706.71 L500.00,705.32 L500.50,703.24 L501.00,700.49 L501.50,697.06 L502.00,692.99 L502.50,688.29 L503.00,682.99 L503.50,677.10 L504.00,670.66 L504.50,663.69 L505.00,656.24 L505.50,648.33 L506.00,640.01 L506.50,631.31 L507.00,622.28 L507.50,612.95 L508.00,603.38 L508.50,593.60 L509.00,583.67 L509.50,573.63 L510.00,563.53 L510.50,553.42 L511.00,543.34 L511.50,533.35 L512.00,523.49 L512.50,513.81 L513.00,504.35 L513.50,495.17 L514.00,486.29 L514.50,477.78 L515.00,469.66 L515.50,461.97 L516.00,454.76 L516.50,448.06 L517.00,441.89 L517.50,436.29 L518.00,431.28 L518.50,426.89 L519.00,423.14 L519.50,420.05 L520.00,417.63 L520.50,415.89 L521.00,414.85 L521.50,414.50 L522.00,414.85 L522.50,415.89 L523.00,417.63 L523.50,420.05 L524.00,423.14 L524.50,426.89 L525.00,431.28 L525.50,436.29 L526.00,441.89 L526.50,448.06 L527.00,454.76 L527.50,461.97 L528.00,469.66 L528.50,477.78 L529.00,486.29 L529.50,495.17 L530.00,504.35 L530.50,513.81 L531.00,523.49 L531.50,533.35 L532.00,543.34 L532.50,553.42 L533.00,563.53 L533.50,573.63 L534.00,583.67 L534.50,593.60 L535.00,603.38 L535.50,612.95 L536.00,622.28 L536.50,631.31 L537.00,640.01 L537.50,648.33 L538.00,656.24 L538.50,663.69 L539.00,670.66 L539.50,677.10 L540.00,682.99 L540.50,688.29 L541.00,692.99 L541.50,697.06 L542.00,700.49 L542.50,703.24 L543.00,705.32 L543.50,706.71 L544.00,707.41 L544.50,707.41 L545.00,706.71 L545.50,705.32 L546.00,703.24 L546.50,700.49 L547.00,697.06 L547.50,692.99 L548.00,688.29 L548.50,682.99 L549.00,677.10 L549.50,670.66 L550.00,663.69 L550.50,656.24 L551.00,648.33 L551.50,640.01 L552.00,631.31 L552.50,622.28 L553.00,612.95 L553.50,603.38 L554.00,593.60 L554.50,583.67 L555.00,573.63 L555.50,563.53 L556.00,553.42 L556.50,543.34 L557.00,533.35 L557.50,523.49 L558.00,513.81 L558.50,504.35 L559.00,495.17 L559.50,486.29 L560.00,477.78 L560.50,469.66 L561.00,461.97 L561.50,454.76 L562.00,448.06 L562.50,441.89 L563.00,436.29 L563.50,431.28 L564.00,426.89 L564.50,423.14 L565.00,420.05 L565.50,417.63 L566.00,415.89 L566.50,414.85 L567.00,414.50 L567.50,414.85 L568.00,415.89 L568.50,417.63 L569.00,420.05 L569.50,423.14 L570.00,426.89 L570.50,431.28 L571.00,436.29 L571.50,441.89 L572.00,448.06 L572.50,454.76 L573.00,461.97 L573.50,469.66 L574.00,477.78 L574.50,486.29 L575.00,495.17 L575.50,504.35 L576.00,513.81 L576.50,523.49 L577.00,533.35 L577.50,543.34 L578.00,553.42 L578.50,563.53 L579.00,573.63 L579.50,583.67 L580.00,593.60 L580.50,603.38 L581.00,612.95 L581.50,622.28 L582.00,631.31 L582.50,640.01 L583.00,648.33 L583.50,656.24 L584.00,663.69 L584.50,670.66 L585.00,677.10 L585.50,682.99 L586.00,688.29 L586.50,692.99 L587.00,697.06 L587.50,700.49 L588.00,703.24 L588.50,705.32 L589.00,706.71 L589.50,707.41 L590.00,707.41 L590.50,706.71 L591.00,705.32 L591.50,703.24 L592.00,700.49 L592.50,697.06 L593.00,692.99 L593.50,688.29 L594.00,682.99 L594.50,677.10 L595.00,670.66 L595.50,663.69 L596.00,656.24 L596.50,648.33 L597.00,640.01 L597.50,631.31 L598.00,622.28 L598.50,612.95 L599.00,603.38 L599.50,593.60 L600.00,583.67 L600.50,573.63 L601.00,563.53 L601.50,553.42 L602.00,543.34 L602.50,533.35 L603.00,523.49 L603.50,513.81 L604.00,504.35 L604.50,495.17 L605.00,486.29 L605.50,477.78 L606.00,469.66 L606.50,461.97 L607.00,454.76 L607.50,448.06 L608.00,441.89 L608.50,436.29 L609.00,431.28 L609.50,426.89 L610.00,423.14 L610.50,420.05 L611.00,417.63 L611.50,415.89 L612.00,414.85 L612.50,414.50 L613.00,414.85 L613.50,415.89 L614.00,417.63 L614.50,420.05 L615.00,423.14 L615.50,426.89 L616.00,431.28 L616.50,436.29 L617.00,441.89 L617.50,448.06 L618.00,454.76 L618.50,461.97 L619.00,469.66 L619.50,477.78 L620.00,486.29 L620.50,495.17 L621.00,504.35 L621.50,513.81 L622.00,523.49 L622.50,533.35 L623.00,543.34 L623.50,553.42 L624.00,563.53 L624.50,573.63 L625.00,583.67 L625.50,593.60 L626.00,603.38 L626.50,612.95 L627.00,622.28 L627.50,631.31 L628.00,640.01 L628.50,648.33 L629.00,656.24 L629.50,663.69 L630.00,670.66 L630.50,677.10 L631.00,682.99 L631.50,688.29 L632.00,692.99 L632.50,697.06 L633.00,700.49 L633.50,703.24 L634.00,705.32 L634.50,706.71 L635.00,707.41 L635.50,707.41 L636.00,706.71 L636.50,705.32 L637.00,703.24 L637.50,700.49 L638.00,697.06 L638.50,692.99 L639.00,688.29 L639.50,682.99 L640.00,677.10 L640.50,670.66 L641.00,663.69 L641.50,656.24 L642.00,648.33 L642.50,640.01 L643.00,631.31 L643.50,622.28 L644.00,612.95 L644.50,603.38 L645.00,593.60 L645.50,583.67 L646.00,573.63 L646.50,563.53 L647.00,553.42 L647.50,543.34 L648.00,533.35 L648.50,523.49 L649.00,513.81 L649.50,504.35 L650.00,495.17 L650.50,486.29 L651.00,477.78 L651.50,469.66 L652.00,461.97 L652.50,454.76 L653.00,448.06 L653.50,441.89 L654.00,436.29 L654.50,431.28 L655.00,426.89 L655.50,423.14 L656.00,420.05 L656.50,417.63 L657.00,415.89 L657.50,414.85 L658.00,414.50 L658.50,414.85 L659.00,415.89 L659.50,417.63 L660.00,420.05 L660.50,423.14 L661.00,426.89 L661.50,431.28 L662.00,436.29 L662.50,441.89 L663.00,448.06 L663.50,454.76 L664.00,461.97 L664.50,469.66 L665.00,477.78 L665.50,486.29 L666.00,495.17 L666.50,504.35 L667.00,513.81 L667.50,523.49 L668.00,533.35 L668.50,543.34 L669.00,553.42 L669.50,563.53 L670.00,573.63 L670.50,583.67 L671.00,593.60 L671.50,603.38 L672.00,612.95 L672.50,622.28 L673.00,631.31 L673.50,640.01 L674.00,648.33 L674.50,656.24 L675.00,663.69 L675.50,670.66 L676.00,677.10 L676.50,682.99 L677.00,688.29 L677.50,692.99 L678.00,697.06 L678.50,700.49 L679.00,703.24 L679.50,705.32 L680.00,706.71 L680.50,707.41 L681.00,707.41 L681.50,706.71 L682.00,705.32 L682.50,703.24 L683.00,700.49 L683.50,697.06 L684.00,692.99 L684.50,688.29 L685.00,682.99 L685.50,677.10 L686.00,670.66 L686.50,663.69 L687.00,656.24 L687.50,648.33 L688.00,640.01 L688.50,631.31 L689.00,622.28 L689.50,612.95 L690.00,603.38 L690.50,593.60 L691.00,583.67 L691.50,573.63 L692.00,563.53 L692.50,553.42 L693.00,543.34 L693.50,533.35 L694.00,523.49 L694.50,513.81 L695.00,504.35 L695.50,495.17 L696.00,486.29 L696.50,477.78 L697.00,469.66 L697.50,461.97 L698.00,454.76 L698.50,448.06 L699.00,441.89 L699.50,436.29 L700.00,431.28 L700.50,426.89 L701.00,423.14 L701.50,420.05 L702.00,417.63 L702.50,415.89 L703.00,414.85 L703.50,414.50 L704.00,414.85 L704.50,415.89 L705.00,417.63 L705.50,420.05 L706.00,423.14 L706.50,426.89 L707.00,431.28 L707.50,436.29 L708.00,441.89 L708.50,448.06 L709.00,454.76 L709.50,461.97 L710.00,469.66 L710.50,477.78 L711.00,486.29 L711.50,495.17 L712.00,504.35 L712.50,513.81 L713.00,523.49 L713.50,533.35 L714.00,543.34 L714.50,553.42 L715.00,563.53 L715.50,573.63 L716.00,583.67 L716.50,593.60 L717.00,603.38 L717.50,612.95 L718.00,622.28 L718.50,631.31 L719.00,640.01 L719.50,648.33 L720.00,656.24 L720.50,663.69 L721.00,670.66 L721.50,677.10 L722.00,682.99 L722.50,688.29 L723.00,692.99 L723.50,697.06 L724.00,700.49 L724.50,703.24 L725.00,705.32 L725.50,706.71 L726.00,707.41 L726.50,707.41 L727.00,706.71 L727.50,705.32 L728.00,703.24 L728.50,700.49 L729.00,697.06 L729.50,692.99 L730.00,688.29 L730.50,682.99 L731.00,677.10 L731.50,670.66 L732.00,663.69 L732.50,656.24 L733.00,648.33 L733.50,640.01 L734.00,631.31 L734.50,622.28 L735.00,612.95 L735.50,603.38 L736.00,593.60 L736.50,583.67 L737.00,573.63 L737.50,563.53 L738.00,553.42 L738.50,543.34 L739.00,533.35 L739.50,523.49 L740.00,513.81 L740.50,504.35 L741.00,495.17 L741.50,486.29 L742.00,477.78 L742.50,469.66 L743.00,461.97 L743.50,454.76 L744.00,448.06 L744.50,441.89 L745.00,436.29 L745.50,431.28 L746.00,426.89 L746.50,423.14 L747.00,420.05 L747.50,417.63 L748.00,415.89 L748.50,414.85 L749.00,414.50 L749.50,414.85 L750.00,415.89 L750.50,417.63 L751.00,420.05 L751.50,423.14 L752.00,426.89 L752.50,431.28 L753.00,436.29 L753.50,441.89 L754.00,448.06 L754.50,454.76 L755.00,461.97 L755.50,469.66 L756.00,477.78 L756.50,486.29 L757.00,495.17 L757.50,504.35 L758.00,513.81 L758.50,523.49 L759.00,533.35 L759.50,543.34 L760.00,553.42 L760.50,563.53 L761.00,573.63 L761.50,583.67 L762.00,593.60 L762.50,603.38 L763.00,612.95 L763.50,622.28 L764.00,631.31 L764.50,640.01 L765.00,648.33 L765.50,656.24 L766.00,663.69 L766.50,670.66 L767.00,677.10 L767.50,682.99 L768.00,688.29 L768.50,692.99 L769.00,697.06 L769.50,700.49 L770.00,703.24 L770.50,705.32 L771.00,706.71 L771.50,707.41 L772.00,707.41 L772.50,706.71 L773.00,705.32 L773.50,703.24 L774.00,700.49 L774.50,697.06 L775.00,692.99 L775.50,688.29 L776.00,682.99 L776.50,677.10 L777.00,670.66 L777.50,663.69 L778.00,656.24 L778.50,648.33 L779.00,640.01 L779.50,631.31 L780.00,622.28 L780.50,612.95 L781.00,603.38 L781.50,593.60 L782.00,583.67 L782.50,573.63 L783.00,563.53 L783.50,553.42 L784.00,543.34 L784.50,533.35 L785.00,523.49 L785.50,513.81 L786.00,504.35 L786.50,495.17 L787.00,486.29 L787.50,477.78 L788.00,469.66 L788.50,461.97 L789.00,454.76 L789.50,448.06 L790.00,441.89 L790.50,436.29 L791.00,431.28 L791.50,426.89 L792.00,423.14 L792.50,420.05 L793.00,417.63 L793.50,415.89 L794.00,414.85 L794.50,414.50 L795.00,414.85 L795.50,415.89 L796.00,417.63 L796.50,420.05 L797.00,423.14 L797.50,426.89 L798.00,431.28 L798.50,436.29 L799.00,441.89 L799.50,448.06 L800.00,454.76 L800.50,461.97 L801.00,469.66 L801.50,477.78 L802.00,486.29 L802.50,495.17 L803.00,504.35 L803.50,513.81 L804.00,523.49 L804.50,533.35 L805.00,543.34 L805.50,553.42 L806.00,563.53 L806.50,573.63 L807.00,583.67 L807.50,593.60 L808.00,603.38 L808.50,612.95 L809.00,622.28 L809.50,631.31 L810.00,640.01 L810.50,648.33 L811.00,656.24 L811.50,663.69 L812.00,670.66 L812.50,677.10 L813.00,682.99 L813.50,688.29 L814.00,692.99 L814.50,697.06 L815.00,700.49 L815.50,700.34 L816.00,700.23 L816.50,700.14 L817.00,700.09 L817.50,700.07 L818.00,700.07 L818.50,700.09 L819.00,700.13 L819.50,700.18 L820.00,700.23 L820.50,700.28 L821.00,700.33 L821.50,700.37 L822.00,700.40 L822.50,700.40 L823.00,700.39 L823.50,700.35 L824.00,700.28 L824.50,700.19 L825.00,700.06 L825.50,699.90 L826.00,699.71 L826.50,699.49 L827.00,699.24 L827.50,698.96 L828.00,698.65 L828.50,698.33 L829.00,697.98 L829.50,697.62 L830.00,697.25 L830.50,696.87 L831.00,696.49 L831.50,696.12 L832.00,695.76 L832.50,695.42 L833.00,695.10 L833.50,694.81 L834.00,694.56 L834.50,694.34 L835.00,694.17 L835.50,694.04 L836.00,693.97 L836.50,693.95 L837.00,693.98 L837.50,694.07 L838.00,694.21 L838.50,694.41 L839.00,694.67 L839.50,694.97 L840.00,695.32 L840.50,695.71 L841.00,696.15 L841.50,696.63 L842.00,697.16 L842.50,697.73 L843.00,698.33 L843.50,698.97 L844.00,699.64 L844.50,700.33 L845.00,701.05 L845.50,701.80 L846.00,702.56 L846.50,703.33 L847.00,704.11 L847.50,704.90 L848.00,705.70 L848.50,706.49 L849.00,707.28 L849.50,708.06 L850.00,708.83 L850.50,709.58 L851.00,710.31 L851.50,711.02 L852.00,711.70 L852.50,712.36 L853.00,712.98 L853.50,713.56 L854.00,714.11 L854.50,714.61 L855.00,715.08 L855.50,715.49 L856.00,715.86 L856.50,716.18 L857.00,716.45 L857.50,716.67 L858.00,716.83 L858.50,716.94 L859.00,716.99 L859.50,716.99 L860.00,716.94 L860.50,716.83 L861.00,716.67 L861.50,716.45 L862.00,716.18 L862.50,715.86 L863.00,715.49 L863.50,715.08 L864.00,714.61 L864.50,714.11 L865.00,713.56 L865.50,712.98 L866.00,712.36 L866.50,711.70 L867.00,711.02 L867.50,710.31 L868.00,709.58 L868.50,708.83 L869.00,708.06 L869.50,707.28 L870.00,706.49 L870.50,705.70 L871.00,704.90 L871.50,704.11 L872.00,703.33 L872.50,702.56 L873.00,701.80 L873.50,701.05 L874.00,700.33 L874.50,699.64 L875.00,698.97 L875.50,698.33 L876.00,697.73 L876.50,697.16 L877.00,696.63 L877.50,696.15 L878.00,695.71 L878.50,695.32 L879.00,694.97 L879.50,694.68 L880.00,694.44 L880.50,694.25 L881.00,694.11 L881.50,694.03 L882.00,694.00 L882.50,694.03 L883.00,694.11 L883.50,694.25 L884.00,694.44 L884.50,694.68 L885.00,694.97 L885.50,695.32 L886.00,695.71 L886.50,696.15 L887.00,696.63 L887.50,697.16 L888.00,697.73 L888.50,698.33 L889.00,698.97 L889.50,699.64 L890.00,700.33 L890.50,701.05 L891.00,701.80 L891.50,702.56 L892.00,703.33 L892.50,704.11 L893.00,704.90 L893.50,705.70 L894.00,706.49 L894.50,707.28 L895.00,708.06 L895.50,708.83 L896.00,709.58 L896.50,710.31 L897.00,711.02 L897.50,711.70 L898.00,712.36 L898.50,712.98 L899.00,713.56 L899.50,714.11 L900.00,714.61 L900.50,715.08 L901.00,715.49 L901.50,715.86 L902.00,716.18 L902.50,716.45 L903.00,716.67 L903.50,716.83 L904.00,716.94 L904.50,716.99 L905.00,716.99 L905.50,716.94 L906.00,716.83 L906.50,716.67 L907.00,716.45 L907.50,716.18 L908.00,715.86 L908.50,715.49 L909.00,715.08 L909.50,714.61 L910.00,714.11 L910.50,713.56 L911.00,712.98 L911.50,712.36 L912.00,711.70 L912.50,711.02 L913.00,710.31 L913.50,709.58 L914.00,708.83 L914.50,708.06 L915.00,707.28 L915.50,706.49 L916.00,705.70 L916.50,704.90 L917.00,704.11 L917.50,703.33 L918.00,702.56 L918.50,701.80 L919.00,701.05 L919.50,700.33 L920.00,699.64 L920.50,698.97 L921.00,698.33 L921.50,697.73 L922.00,697.16 L922.50,696.63 L923.00,696.15 L923.50,695.71 L924.00,695.32 L924.50,694.97 L925.00,694.68 L925.50,694.44 L926.00,694.25 L926.50,694.11 L927.00,694.03 L927.50,694.00 L928.00,694.03 L928.50,694.11 L929.00,694.25 L929.50,694.44 L930.00,694.68 L930.50,694.97 L931.00,695.32 L931.50,695.71 L932.00,696.15 L932.50,696.63 L933.00,697.16 L933.50,697.73 L934.00,698.33 L934.50,698.97 L935.00,699.64 L935.50,700.33 L936.00,701.05 L936.50,701.80 L937.00,702.56 L937.50,703.33 L938.00,704.11 L938.50,704.90 L939.00,705.70 L939.50,706.49 L940.00,707.28 L940.50,708.06 L941.00,708.83 L941.50,709.58 L942.00,710.31 L942.50,711.02 L943.00,711.70 L943.50,712.36 L944.00,712.98 L944.50,713.56 L945.00,714.11 L945.50,714.61 L946.00,715.08 L946.50,715.49 L947.00,715.86 L947.50,716.18 L948.00,716.45 L948.50,716.67 L949.00,716.83 L949.50,716.94 L950.00,716.99 L950.50,716.99 L951.00,716.94 L951.50,716.83 L952.00,716.67 L952.50,716.45 L953.00,716.18 L953.50,715.86 L954.00,715.49 L954.50,715.08 L955.00,714.61 L955.50,714.11 L956.00,713.56 L956.50,712.98 L957.00,712.36 L957.50,711.70 L958.00,711.02 L958.50,710.31 L959.00,709.58 L959.50,708.83 L960.00,708.06 L960.50,707.28 L961.00,706.49 L961.50,705.70 L962.00,704.90 L962.50,704.11 L963.00,703.33 L963.50,702.56 L964.00,701.80 L964.50,701.05 L965.00,700.33 L965.50,699.64 L966.00,698.97 L966.50,698.33 L967.00,697.73 L967.50,697.16 L968.00,696.63 L968.50,696.15 L969.00,695.71 L969.50,695.32 L970.00,694.97 L970.50,694.68 L971.00,694.44 L971.50,694.25 L972.00,694.11 L972.50,694.03 L973.00,694.00 L973.50,694.03 L974.00,694.11 L974.50,694.25 L975.00,694.44 L975.50,694.68 L976.00,694.97 L976.50,695.32 L977.00,695.71 L977.50,696.15 L978.00,696.63 L978.50,697.16 L979.00,697.73 L979.50,698.33 L980.00,698.97 L980.50,699.64 L981.00,700.33 L981.50,701.05 L982.00,701.80 L982.50,702.56 L983.00,703.33 L983.50,704.11 L984.00,704.90 L984.50,705.70 L985.00,706.49 L985.50,707.28 L986.00,708.06 L986.50,708.83 L987.00,709.58 L987.50,710.31 L988.00,711.02 L988.50,711.70 L989.00,712.36 L989.50,712.98 L990.00,713.56 L990.50,714.11 L991.00,714.61 L991.50,715.08 L992.00,715.49 L992.50,715.86 L993.00,716.18 L993.50,716.45 L994.00,716.67 L994.50,716.83 L995.00,716.94 L995.50,716.99 L996.00,716.99 L996.50,716.94 L997.00,716.83 L997.50,716.67 L998.00,716.45 L998.50,716.18 L999.00,715.86 L999.50,715.49 L1000.00,715.08 L1000.50,714.61 L1001.00,714.11 L1001.50,713.56 L1002.00,712.98 L1002.50,712.36 L1003.00,711.70 L1003.50,711.02 L1004.00,710.31 L1004.50,709.58 L1005.00,708.83 L1005.50,708.06 L1006.00,707.28 L1006.50,706.49 L1007.00,705.70 L1007.50,704.90 L1008.00,704.11 L1008.50,703.33 L1009.00,702.56 L1009.50,701.80 L1010.00,701.05 L1010.50,700.33 L1011.00,699.64 L1011.50,698.97 L1012.00,698.33 L1012.50,697.73 L1013.00,697.16 L1013.50,696.63 L1014.00,696.15 L1014.50,695.71 L1015.00,695.32 L1015.50,694.97 L1016.00,694.68 L1016.50,694.44 L1017.00,694.25 L1017.50,694.11 L1018.00,694.03 L1018.50,694.00 L1019.00,694.03 L1019.50,694.11 L1020.00,694.25 L1020.50,694.44 L1021.00,694.68 L1021.50,694.97 L1022.00,695.32 L1022.50,695.71 L1023.00,696.15 L1023.50,696.63 L1024.00,697.16 L1024.50,697.73 L1025.00,698.33 L1025.50,698.97 L1026.00,699.64 L1026.50,700.33 L1027.00,701.05 L1027.50,701.80 L1028.00,702.56 L1028.50,703.33 L1029.00,704.11 L1029.50,704.90 L1030.00,705.70 L1030.50,706.49 L1031.00,707.28 L1031.50,708.06 L1032.00,708.83 L1032.50,709.58 L1033.00,710.31 L1033.50,711.02 L1034.00,711.70 L1034.50,712.36 L1035.00,712.98 L1035.50,713.56 L1036.00,714.11 L1036.50,714.61 L1037.00,715.08 L1037.50,715.49 L1038.00,715.86 L1038.50,716.18 L1039.00,716.45 L1039.50,716.67 L1040.00,716.83 L1040.50,716.94 L1041.00,716.99 L1041.50,716.99 L1042.00,716.94 L1042.50,716.83 L1043.00,716.67 L1043.50,716.45 L1044.00,716.18 L1044.50,715.86 L1045.00,715.49 L1045.50,715.08 L1046.00,714.61 L1046.50,714.11 L1047.00,713.56 L1047.50,712.98 L1048.00,712.36" fill="none" stroke="#ff10ff" stroke-width="2"/><path d="M146.00,473.00 L601.00,326.00 L1048.00,470.50" fill="none" stroke="#10b8f0" stroke-width="2"/><path d="M137.00,464.54 L137.50,460.84 L138.00,456.51 L138.50,451.55 L139.00,446.01 L139.50,439.90 L140.00,433.25 L140.50,426.10 L141.00,418.48 L141.50,410.42 L142.00,401.97 L142.50,393.16 L143.00,384.03 L143.50,374.64 L144.00,365.01 L144.50,355.21 L145.00,345.27 L145.50,335.25 L146.00,325.19 L146.50,315.13 L147.00,305.14 L147.50,295.24 L148.00,285.50 L148.50,275.95 L149.00,266.65 L149.50,257.63 L150.00,248.95 L150.50,240.63 L151.00,232.73 L151.50,225.27 L152.00,218.29 L152.50,211.84 L153.00,205.93 L153.50,200.59 L154.00,195.86 L154.50,191.75 L155.00,188.28 L155.50,185.48 L156.00,183.34 L156.50,181.89 L157.00,181.50 L157.50,181.50 L158.00,181.68 L158.50,182.99 L159.00,184.99 L159.50,187.67 L160.00,191.01 L160.50,194.99 L161.00,199.60 L161.50,204.81 L162.00,210.61 L162.50,216.96 L163.00,223.83 L163.50,231.20 L164.00,239.02 L164.50,247.25 L165.00,255.87 L165.50,264.82 L166.00,274.07 L166.50,283.57 L167.00,293.28 L167.50,303.15 L168.00,313.13 L168.50,323.17 L169.00,333.24 L169.50,343.28 L170.00,353.23 L170.50,363.07 L171.00,372.73 L171.50,382.17 L172.00,391.36 L172.50,400.23 L173.00,408.76 L173.50,416.90 L174.00,424.61 L174.50,431.86 L175.00,438.61 L175.50,444.83 L176.00,450.49 L176.50,455.56 L177.00,460.03 L177.50,463.86 L178.00,467.03 L178.50,469.55 L179.00,471.38 L179.50,472.53 L180.00,472.99 L180.50,472.76 L181.00,471.83 L181.50,470.21 L182.00,467.91 L182.50,464.94 L183.00,461.32 L183.50,457.06 L184.00,452.18 L184.50,446.71 L185.00,440.66 L185.50,434.08 L186.00,426.98 L186.50,419.42 L187.00,411.41 L187.50,403.00 L188.00,394.23 L188.50,385.14 L189.00,375.78 L189.50,366.18 L190.00,356.40 L190.50,346.47 L191.00,336.46 L191.50,326.40 L192.00,316.34 L192.50,306.33 L193.00,296.42 L193.50,286.66 L194.00,277.09 L194.50,267.75 L195.00,258.70 L195.50,249.97 L196.00,241.61 L196.50,233.65 L197.00,226.14 L197.50,219.10 L198.00,212.58 L198.50,206.61 L199.00,201.20 L199.50,196.40 L200.00,192.21 L200.50,188.66 L201.00,185.78 L201.50,183.56 L202.00,182.03 L202.50,181.50 L203.00,181.50 L203.50,181.57 L204.00,182.80 L204.50,184.72 L205.00,187.31 L205.50,190.57 L206.00,194.48 L206.50,199.01 L207.00,204.16 L207.50,209.89 L208.00,216.17 L208.50,222.98 L209.00,230.29 L209.50,238.05 L210.00,246.24 L210.50,254.82 L211.00,263.73 L211.50,272.95 L212.00,282.42 L212.50,292.11 L213.00,301.96 L213.50,311.93 L214.00,321.97 L214.50,332.03 L215.00,342.07 L215.50,352.04 L216.00,361.89 L216.50,371.58 L217.00,381.05 L217.50,390.27 L218.00,399.18 L218.50,407.76 L219.00,415.95 L219.50,423.71 L220.00,431.02 L220.50,437.83 L221.00,444.11 L221.50,449.84 L222.00,454.99 L222.50,459.52 L223.00,463.43 L223.50,466.69 L224.00,469.28 L224.50,471.20 L225.00,472.43 L225.50,472.97 L226.00,472.82 L226.50,471.97 L227.00,470.44 L227.50,468.22 L228.00,465.34 L228.50,461.79 L229.00,457.60 L229.50,452.80 L230.00,447.39 L230.50,441.42 L231.00,434.90 L231.50,427.86 L232.00,420.35 L232.50,412.39 L233.00,404.03 L233.50,395.30 L234.00,386.25 L234.50,376.91 L235.00,367.34 L235.50,357.58 L236.00,347.67 L236.50,337.66 L237.00,327.60 L237.50,317.54 L238.00,307.53 L238.50,297.60 L239.00,287.82 L239.50,278.22 L240.00,268.86 L240.50,259.77 L241.00,251.00 L241.50,242.59 L242.00,234.58 L242.50,227.02 L243.00,219.92 L243.50,213.34 L244.00,207.29 L244.50,201.82 L245.00,196.94 L245.50,192.68 L246.00,189.06 L246.50,186.09 L247.00,183.79 L247.50,182.17 L248.00,181.50 L248.50,181.50 L249.00,181.50 L249.50,182.62 L250.00,184.45 L250.50,186.97 L251.00,190.14 L251.50,193.97 L252.00,198.44 L252.50,203.51 L253.00,209.17 L253.50,215.39 L254.00,222.14 L254.50,229.39 L255.00,237.10 L255.50,245.24 L256.00,253.77 L256.50,262.64 L257.00,271.83 L257.50,281.27 L258.00,290.93 L258.50,300.77 L259.00,310.72 L259.50,320.76 L260.00,330.83 L260.50,340.87 L261.00,350.85 L261.50,360.72 L262.00,370.43 L262.50,379.93 L263.00,389.18 L263.50,398.13 L264.00,406.75 L264.50,414.98 L265.00,422.80 L265.50,430.17 L266.00,437.04 L266.50,443.39 L267.00,449.19 L267.50,454.40 L268.00,459.01 L268.50,462.99 L269.00,466.33 L269.50,469.01 L270.00,471.01 L270.50,472.32 L271.00,472.94 L271.50,472.88 L272.00,472.11 L272.50,470.66 L273.00,468.52 L273.50,465.72 L274.00,462.25 L274.50,458.14 L275.00,453.41 L275.50,448.07 L276.00,442.16 L276.50,435.71 L277.00,428.73 L277.50,421.27 L278.00,413.37 L278.50,405.05 L279.00,396.37 L279.50,387.35 L280.00,378.05 L280.50,368.50 L281.00,358.76 L281.50,348.86 L282.00,338.87 L282.50,328.81 L283.00,318.75 L283.50,308.73 L284.00,298.79 L284.50,288.99 L285.00,279.36 L285.50,269.97 L286.00,260.84 L286.50,252.03 L287.00,243.58 L287.50,235.52 L288.00,227.90 L288.50,220.75 L289.00,214.10 L289.50,207.99 L290.00,202.45 L290.50,197.49 L291.00,193.16 L291.50,189.46 L292.00,186.41 L292.50,184.03 L293.00,182.33 L293.50,181.50 L294.00,181.50 L294.50,181.50 L295.00,182.44 L295.50,184.20 L296.00,186.63 L296.50,189.73 L297.00,193.48 L297.50,197.87 L298.00,202.87 L298.50,208.46 L299.00,214.61 L299.50,221.30 L300.00,228.49 L300.50,236.15 L301.00,244.24 L301.50,252.73 L302.00,261.56 L302.50,270.71 L303.00,280.13 L303.50,289.76 L304.00,299.58 L304.50,309.52 L305.00,319.55 L305.50,329.62 L306.00,339.67 L306.50,349.66 L307.00,359.54 L307.50,369.27 L308.00,378.80 L308.50,388.08 L309.00,397.07 L309.50,405.73 L310.00,414.02 L310.50,421.89 L311.00,429.31 L311.50,436.24 L312.00,442.66 L312.50,448.52 L313.00,453.81 L313.50,458.49 L314.00,462.55 L314.50,465.97 L315.00,468.72 L315.50,470.80 L316.00,472.20 L316.50,472.91 L317.00,472.92 L317.50,472.24 L318.00,470.87 L318.50,468.82 L319.00,466.09 L319.50,462.70 L320.00,458.67 L320.50,454.01 L321.00,448.74 L321.50,442.90 L322.00,436.51 L322.50,429.59 L323.00,422.19 L323.50,414.34 L324.00,406.07 L324.50,397.43 L325.00,388.45 L325.50,379.18 L326.00,369.66 L326.50,359.94 L327.00,350.06 L327.50,340.07 L328.00,330.02 L328.50,319.96 L329.00,309.92 L329.50,299.97 L330.00,290.15 L330.50,280.51 L331.00,271.08 L331.50,261.92 L332.00,253.07 L332.50,244.57 L333.00,236.47 L333.50,228.79 L334.00,221.58 L334.50,214.87 L335.00,208.69 L335.50,203.08 L336.00,198.06 L336.50,193.64 L337.00,189.87 L337.50,186.74 L338.00,184.28 L338.50,182.50 L339.00,181.50 L339.50,181.50 L340.00,181.50 L340.50,182.28 L341.00,183.95 L341.50,186.30 L342.00,189.32 L342.50,193.00 L343.00,197.31 L343.50,202.24 L344.00,207.76 L344.50,213.85 L345.00,220.47 L345.50,227.60 L346.00,235.21 L346.50,243.25 L347.00,251.69 L347.50,260.48 L348.00,269.60 L348.50,278.98 L349.00,288.60 L349.50,298.39 L350.00,308.33 L350.50,318.35 L351.00,328.41 L351.50,338.47 L352.00,348.47 L352.50,358.37 L353.00,368.12 L353.50,377.67 L354.00,386.98 L354.50,396.01 L355.00,404.71 L355.50,413.04 L356.00,420.97 L356.50,428.44 L357.00,435.44 L357.50,441.91 L358.00,447.85 L358.50,453.20 L359.00,457.96 L359.50,462.10 L360.00,465.59 L360.50,468.43 L361.00,470.59 L361.50,472.07 L362.00,472.86 L362.50,472.96 L363.00,472.36 L363.50,471.07 L364.00,469.10 L364.50,466.45 L365.00,463.14 L365.50,459.18 L366.00,454.60 L366.50,449.41 L367.00,443.63 L367.50,437.30 L368.00,430.45 L368.50,423.11 L369.00,415.31 L369.50,407.08 L370.00,398.48 L370.50,389.54 L371.00,380.30 L371.50,370.81 L372.00,361.11 L372.50,351.25 L373.00,341.27 L373.50,331.23 L374.00,321.16 L374.50,311.12 L375.00,301.16 L375.50,291.32 L376.00,281.65 L376.50,272.20 L377.00,263.01 L377.50,254.12 L378.00,245.57 L378.50,237.42 L379.00,229.69 L379.50,222.42 L380.00,215.65 L380.50,209.41 L381.00,203.72 L381.50,198.63 L382.00,194.14 L382.50,190.29 L383.00,187.08 L383.50,184.54 L384.00,182.68 L384.50,181.50 L385.00,181.50 L385.50,181.50 L386.00,182.12 L386.50,183.71 L387.00,185.98 L387.50,188.92 L388.00,192.52 L388.50,196.76 L389.00,201.61 L389.50,207.06 L390.00,213.09 L390.50,219.65 L391.00,226.72 L391.50,234.27 L392.00,242.26 L392.50,250.66 L393.00,259.41 L393.50,268.49 L394.00,277.84 L394.50,287.43 L395.00,297.21 L395.50,307.13 L396.00,317.14 L396.50,327.20 L397.00,337.26 L397.50,347.27 L398.00,357.18 L398.50,366.95 L399.00,376.54 L399.50,385.88 L400.00,394.95 L400.50,403.69 L401.00,412.07 L401.50,420.04 L402.00,427.57 L402.50,434.62 L403.00,441.17 L403.50,447.16 L404.00,452.59 L404.50,457.42 L405.00,461.63 L405.50,465.21 L406.00,468.12 L406.50,470.36 L407.00,471.93 L407.50,472.80 L408.00,472.98 L408.50,472.47 L409.00,471.26 L409.50,469.37 L410.00,466.80 L410.50,463.57 L411.00,459.69 L411.50,455.18 L412.00,450.06 L412.50,444.35 L413.00,438.09 L413.50,431.30 L414.00,424.01 L414.50,416.26 L415.00,408.09 L415.50,399.53 L416.00,390.63 L416.50,381.43 L417.00,371.96 L417.50,362.29 L418.00,352.44 L418.50,342.47 L419.00,332.44 L419.50,322.37 L420.00,312.33 L420.50,302.35 L421.00,292.50 L421.50,282.80 L422.00,273.32 L422.50,264.09 L423.00,255.17 L423.50,246.58 L424.00,238.37 L424.50,230.59 L425.00,223.27 L425.50,216.43 L426.00,210.13 L426.50,204.38 L427.00,199.21 L427.50,194.65 L428.00,190.71 L428.50,187.43 L429.00,184.81 L429.50,182.86 L430.00,181.60 L430.50,181.50 L431.00,181.50 L431.50,181.98 L432.00,183.49 L432.50,185.68 L433.00,188.54 L433.50,192.06 L434.00,196.22 L434.50,201.00 L435.00,206.38 L435.50,212.33 L436.00,218.83 L436.50,225.85 L437.00,233.34 L437.50,241.28 L438.00,249.63 L438.50,258.34 L439.00,267.38 L439.50,276.71 L440.00,286.27 L440.50,296.03 L441.00,305.93 L441.50,315.94 L442.00,325.99 L442.50,336.05 L443.00,346.07 L443.50,356.00 L444.00,365.79 L444.50,375.40 L445.00,384.77 L445.50,393.87 L446.00,402.66 L446.50,411.08 L447.00,419.10 L447.50,426.69 L448.00,433.80 L448.50,440.41 L449.00,446.47 L449.50,451.97 L450.00,456.88 L450.50,461.16 L451.00,464.81 L451.50,467.81 L452.00,470.13 L452.50,471.77 L453.00,472.73 L453.50,473.00 L454.00,472.56 L454.50,471.44 L455.00,469.63 L455.50,467.15 L456.00,464.00 L456.50,460.19 L457.00,455.75 L457.50,450.71 L458.00,445.07 L458.50,438.87 L459.00,432.14 L459.50,424.91 L460.00,417.22 L460.50,409.09 L461.00,400.58 L461.50,391.72 L462.00,382.55 L462.50,373.11 L463.00,363.46 L463.50,353.63 L464.00,343.68 L464.50,333.64 L465.00,323.58 L465.50,313.53 L466.00,303.54 L466.50,293.67 L467.00,283.96 L467.50,274.45 L468.00,265.19 L468.50,256.22 L469.00,247.59 L469.50,239.34 L470.00,231.50 L470.50,224.12 L471.00,217.23 L471.50,210.85 L472.00,205.04 L472.50,199.80 L473.00,195.16 L473.50,191.15 L474.00,187.79 L474.50,185.09 L475.00,183.06 L475.50,181.72 L476.00,181.50 L476.50,181.50 L477.00,181.84 L477.50,183.27 L478.00,185.38 L478.50,188.16 L479.00,191.60 L479.50,195.68 L480.00,200.39 L480.50,205.70 L481.00,211.59 L481.50,218.03 L482.00,224.98 L482.50,232.42 L483.00,240.31 L483.50,248.61 L484.00,257.28 L484.50,266.28 L485.00,275.58 L485.50,285.11 L486.00,294.85 L486.50,304.74 L487.00,314.73 L487.50,324.79 L488.00,334.85 L488.50,344.88 L489.00,354.82 L489.50,364.63 L490.00,374.26 L490.50,383.66 L491.00,392.80 L491.50,401.62 L492.00,410.09 L492.50,418.16 L493.00,425.81 L493.50,432.98 L494.00,439.64 L494.50,445.78 L495.00,451.34 L495.50,456.32 L496.00,460.68 L496.50,464.41 L497.00,467.48 L497.50,469.89 L498.00,471.61 L498.50,472.65 L499.00,473.00 L499.50,472.65 L500.00,471.61 L500.50,469.89 L501.00,467.48 L501.50,464.41 L502.00,460.68 L502.50,456.32 L503.00,451.34 L503.50,445.78 L504.00,439.64 L504.50,432.98 L505.00,425.81 L505.50,418.16 L506.00,410.09 L506.50,401.62 L507.00,392.80 L507.50,383.66 L508.00,374.26 L508.50,364.63 L509.00,354.82 L509.50,344.88 L510.00,334.85 L510.50,324.79 L511.00,314.73 L511.50,304.74 L512.00,294.85 L512.50,285.11 L513.00,275.58 L513.50,266.28 L514.00,257.28 L514.50,248.61 L515.00,240.31 L515.50,232.42 L516.00,224.98 L516.50,218.03 L517.00,211.59 L517.50,205.70 L518.00,200.39 L518.50,195.68 L519.00,191.60 L519.50,188.16 L520.00,185.38 L520.50,183.27 L521.00,181.84 L521.50,181.50 L522.00,181.50 L522.50,181.72 L523.00,183.06 L523.50,185.09 L524.00,187.79 L524.50,191.15 L525.00,195.16 L525.50,199.80 L526.00,205.04 L526.50,210.85 L527.00,217.23 L527.50,224.12 L528.00,231.50 L528.50,239.34 L529.00,247.59 L529.50,256.22 L530.00,265.19 L530.50,274.45 L531.00,283.96 L531.50,293.67 L532.00,303.54 L532.50,313.53 L533.00,323.58 L533.50,333.64 L534.00,343.68 L534.50,353.63 L535.00,363.46 L535.50,373.11 L536.00,382.55 L536.50,391.72 L537.00,400.58 L537.50,409.09 L538.00,417.22 L538.50,424.91 L539.00,432.14 L539.50,438.87 L540.00,445.07 L540.50,450.71 L541.00,455.75 L541.50,460.19 L542.00,464.00 L542.50,467.15 L543.00,469.63 L543.50,471.44 L544.00,472.56 L544.50,473.00 L545.00,472.73 L545.50,471.77 L546.00,470.13 L546.50,467.81 L547.00,464.81 L547.50,461.16 L548.00,456.88 L548.50,451.97 L549.00,446.47 L549.50,440.41 L550.00,433.80 L550.50,426.69 L551.00,419.10 L551.50,411.08 L552.00,402.66 L552.50,393.87 L553.00,384.77 L553.50,375.40 L554.00,365.79 L554.50,356.00 L555.00,346.07 L555.50,336.05 L556.00,325.99 L556.50,315.94 L557.00,305.93 L557.50,296.03 L558.00,286.27 L558.50,276.71 L559.00,267.38 L559.50,258.34 L560.00,249.63 L560.50,241.28 L561.00,233.34 L561.50,225.85 L562.00,218.83 L562.50,212.33 L563.00,206.38 L563.50,201.00 L564.00,196.22 L564.50,192.06 L565.00,188.54 L565.50,185.68 L566.00,183.49 L566.50,181.98 L567.00,181.50 L567.50,181.50 L568.00,181.60 L568.50,182.86 L569.00,184.81 L569.50,187.43 L570.00,190.71 L570.50,194.65 L571.00,199.21 L571.50,204.38 L572.00,210.13 L572.50,216.43 L573.00,223.27 L573.50,230.59 L574.00,238.37 L574.50,246.58 L575.00,255.17 L575.50,264.09 L576.00,273.32 L576.50,282.80 L577.00,292.50 L577.50,302.35 L578.00,312.33 L578.50,322.37 L579.00,332.44 L579.50,342.47 L580.00,352.44 L580.50,362.29 L581.00,371.96 L581.50,381.43 L582.00,390.63 L582.50,399.53 L583.00,408.09 L583.50,416.26 L584.00,424.01 L584.50,431.30 L585.00,438.09 L585.50,444.35 L586.00,450.06 L586.50,455.18 L587.00,459.69 L587.50,463.57 L588.00,466.80 L588.50,469.37 L589.00,471.26 L589.50,472.47 L590.00,472.98 L590.50,472.80 L591.00,471.93 L591.50,470.36 L592.00,468.12 L592.50,465.21 L593.00,461.63 L593.50,457.42 L594.00,452.59 L594.50,447.16 L595.00,441.17 L595.50,434.62 L596.00,427.57 L596.50,420.04 L597.00,412.07 L597.50,403.69 L598.00,394.95 L598.50,385.88 L599.00,376.54 L599.50,366.95 L600.00,357.18 L600.50,347.27 L601.00,337.26 L601.50,327.20 L602.00,317.14 L602.50,307.13 L603.00,297.21 L603.50,287.43 L604.00,277.84 L604.50,268.49 L605.00,259.41 L605.50,250.66 L606.00,242.26 L606.50,234.27 L607.00,226.72 L607.50,219.65 L608.00,213.09 L608.50,207.06 L609.00,201.61 L609.50,196.76 L610.00,192.52 L610.50,188.92 L611.00,185.98 L611.50,183.71 L612.00,182.12 L612.50,181.50 L613.00,181.50 L613.50,181.50 L614.00,182.68 L614.50,184.54 L615.00,187.08 L615.50,190.29 L616.00,194.14 L616.50,198.63 L617.00,203.72 L617.50,209.41 L618.00,215.65 L618.50,222.42 L619.00,229.69 L619.50,237.42 L620.00,245.57 L620.50,254.12 L621.00,263.01 L621.50,272.20 L622.00,281.65 L622.50,291.32 L623.00,301.16 L623.50,311.12 L624.00,321.16 L624.50,331.23 L625.00,341.27 L625.50,351.25 L626.00,361.11 L626.50,370.81 L627.00,380.30 L627.50,389.54 L628.00,398.48 L628.50,407.08 L629.00,415.31 L629.50,423.11 L630.00,430.45 L630.50,437.30 L631.00,443.63 L631.50,449.41 L632.00,454.60 L632.50,459.18 L633.00,463.14 L633.50,466.45 L634.00,469.10 L634.50,471.07 L635.00,472.36 L635.50,472.96 L636.00,472.86 L636.50,472.07 L637.00,470.59 L637.50,468.43 L638.00,465.59 L638.50,462.10 L639.00,457.96 L639.50,453.20 L640.00,447.85 L640.50,441.91 L641.00,435.44 L641.50,428.44 L642.00,420.97 L642.50,413.04 L643.00,404.71 L643.50,396.01 L644.00,386.98 L644.50,377.67 L645.00,368.12 L645.50,358.37 L646.00,348.47 L646.50,338.47 L647.00,328.41 L647.50,318.35 L648.00,308.33 L648.50,298.39 L649.00,288.60 L649.50,278.98 L650.00,269.60 L650.50,260.48 L651.00,251.69 L651.50,243.25 L652.00,235.21 L652.50,227.60 L653.00,220.47 L653.50,213.85 L654.00,207.76 L654.50,202.24 L655.00,197.31 L655.50,193.00 L656.00,189.32 L656.50,186.30 L657.00,183.95 L657.50,182.28 L658.00,181.50 L658.50,181.50 L659.00,181.50 L659.50,182.50 L660.00,184.28 L660.50,186.74 L661.00,189.87 L661.50,193.64 L662.00,198.06 L662.50,203.08 L663.00,208.69 L663.50,214.87 L664.00,221.58 L664.50,228.79 L665.00,236.47 L665.50,244.57 L666.00,253.07 L666.50,261.92 L667.00,271.08 L667.50,280.51 L668.00,290.15 L668.50,299.97 L669.00,309.92 L669.50,319.96 L670.00,330.02 L670.50,340.07 L671.00,350.06 L671.50,359.94 L672.00,369.66 L672.50,379.18 L673.00,388.45 L673.50,397.43 L674.00,406.07 L674.50,414.34 L675.00,422.19 L675.50,429.59 L676.00,436.51 L676.50,442.90 L677.00,448.74 L677.50,454.01 L678.00,458.67 L678.50,462.70 L679.00,466.09 L679.50,468.82 L680.00,470.87 L680.50,472.24 L681.00,472.92 L681.50,472.91 L682.00,472.20 L682.50,470.80 L683.00,468.72 L683.50,465.97 L684.00,462.55 L684.50,458.49 L685.00,453.81 L685.50,448.52 L686.00,442.66 L686.50,436.24 L687.00,429.31 L687.50,421.89 L688.00,414.02 L688.50,405.73 L689.00,397.07 L689.50,388.08 L690.00,378.80 L690.50,369.27 L691.00,359.54 L691.50,349.66 L692.00,339.67 L692.50,329.62 L693.00,319.55 L693.50,309.52 L694.00,299.58 L694.50,289.76 L695.00,280.13 L695.50,270.71 L696.00,261.56 L696.50,252.73 L697.00,244.24 L697.50,236.15 L698.00,228.49 L698.50,221.30 L699.00,214.61 L699.50,208.46 L700.00,202.87 L700.50,197.87 L701.00,193.48 L701.50,189.73 L702.00,186.63 L702.50,184.20 L703.00,182.44 L703.50,181.50 L704.00,181.50 L704.50,181.50 L705.00,182.33 L705.50,184.03 L706.00,186.41 L706.50,189.46 L707.00,193.16 L707.50,197.49 L708.00,202.45 L708.50,207.99 L709.00,214.10 L709.50,220.75 L710.00,227.90 L710.50,235.52 L711.00,243.58 L711.50,252.03 L712.00,260.84 L712.50,269.97 L713.00,279.36 L713.50,288.99 L714.00,298.79 L714.50,308.73 L715.00,318.75 L715.50,328.81 L716.00,338.87 L716.50,348.86 L717.00,358.76 L717.50,368.50 L718.00,378.05 L718.50,387.35 L719.00,396.37 L719.50,405.05 L720.00,413.37 L720.50,421.27 L721.00,428.73 L721.50,435.71 L722.00,442.16 L722.50,448.07 L723.00,453.41 L723.50,458.14 L724.00,462.25 L724.50,465.72 L725.00,468.52 L725.50,470.66 L726.00,472.11 L726.50,472.88 L727.00,472.94 L727.50,472.32 L728.00,471.01 L728.50,469.01 L729.00,466.33 L729.50,462.99 L730.00,459.01 L730.50,454.40 L731.00,449.19 L731.50,443.39 L732.00,437.04 L732.50,430.17 L733.00,422.80 L733.50,414.98 L734.00,406.75 L734.50,398.13 L735.00,389.18 L735.50,379.93 L736.00,370.43 L736.50,360.72 L737.00,350.85 L737.50,340.87 L738.00,330.83 L738.50,320.76 L739.00,310.72 L739.50,300.77 L740.00,290.93 L740.50,281.27 L741.00,271.83 L741.50,262.64 L742.00,253.77 L742.50,245.24 L743.00,237.10 L743.50,229.39 L744.00,222.14 L744.50,215.39 L745.00,209.17 L745.50,203.51 L746.00,198.44 L746.50,193.97 L747.00,190.14 L747.50,186.97 L748.00,184.45 L748.50,182.62 L749.00,181.50 L749.50,181.50 L750.00,181.50 L750.50,182.17 L751.00,183.79 L751.50,186.09 L752.00,189.06 L752.50,192.68 L753.00,196.94 L753.50,201.82 L754.00,207.29 L754.50,213.34 L755.00,219.92 L755.50,227.02 L756.00,234.58 L756.50,242.59 L757.00,251.00 L757.50,259.77 L758.00,268.86 L758.50,278.22 L759.00,287.82 L759.50,297.60 L760.00,307.53 L760.50,317.54 L761.00,327.60 L761.50,337.66 L762.00,347.67 L762.50,357.58 L763.00,367.34 L763.50,376.91 L764.00,386.25 L764.50,395.30 L765.00,404.03 L765.50,412.39 L766.00,420.35 L766.50,427.86 L767.00,434.90 L767.50,441.42 L768.00,447.39 L768.50,452.80 L769.00,457.60 L769.50,461.79 L770.00,465.34 L770.50,468.22 L771.00,470.44 L771.50,471.97 L772.00,472.82 L772.50,472.97 L773.00,472.43 L773.50,471.20 L774.00,469.28 L774.50,466.69 L775.00,463.43 L775.50,459.52 L776.00,454.99 L776.50,449.84 L777.00,444.11 L777.50,437.83 L778.00,431.02 L778.50,423.71 L779.00,415.95 L779.50,407.76 L780.00,399.18 L780.50,390.27 L781.00,381.05 L781.50,371.58 L782.00,361.89 L782.50,352.04 L783.00,342.07 L783.50,332.03 L784.00,321.97 L784.50,311.93 L785.00,301.96 L785.50,292.11 L786.00,282.42 L786.50,272.95 L787.00,263.73 L787.50,254.82 L788.00,246.24 L788.50,238.05 L789.00,230.29 L789.50,222.98 L790.00,216.17 L790.50,209.89 L791.00,204.16 L791.50,199.01 L792.00,194.48 L792.50,190.57 L793.00,187.31 L793.50,184.72 L794.00,182.80 L794.50,181.57 L795.00,181.50 L795.50,181.50 L796.00,182.03 L796.50,183.56 L797.00,185.78 L797.50,188.66 L798.00,192.21 L798.50,196.40 L799.00,201.20 L799.50,206.61 L800.00,212.58 L800.50,219.10 L801.00,226.14 L801.50,233.65 L802.00,241.61 L802.50,249.97 L803.00,258.70 L803.50,267.75 L804.00,277.09 L804.50,286.66 L805.00,296.42 L805.50,306.33 L806.00,316.34 L806.50,326.40 L807.00,336.46 L807.50,346.47 L808.00,356.40 L808.50,366.18 L809.00,375.78 L809.50,385.14 L810.00,394.23 L810.50,403.00 L811.00,411.41 L811.50,419.42 L812.00,426.98 L812.50,434.08 L813.00,440.66 L813.50,446.71 L814.00,452.18 L814.50,457.06 L815.00,461.32 L815.50,464.94 L816.00,467.91 L816.50,470.21 L817.00,471.83 L817.50,472.76 L818.00,472.99 L818.50,472.53 L819.00,471.38 L819.50,469.55 L820.00,467.03 L820.50,463.86 L821.00,460.03 L821.50,455.56 L822.00,450.49 L822.50,444.83 L823.00,438.61 L823.50,431.86 L824.00,424.61 L824.50,416.90 L825.00,408.76 L825.50,400.23 L826.00,391.36 L826.50,382.17 L827.00,372.73 L827.50,363.07 L828.00,353.23 L828.50,343.28 L829.00,333.24 L829.50,323.17 L830.00,313.13 L830.50,303.15 L831.00,293.28 L831.50,283.57 L832.00,274.07 L832.50,264.82 L833.00,255.87 L833.50,247.25 L834.00,239.02 L834.50,231.20 L835.00,223.83 L835.50,216.96 L836.00,210.61 L836.50,204.81 L837.00,199.60 L837.50,194.99 L838.00,191.01 L838.50,187.67 L839.00,184.99 L839.50,182.99 L840.00,181.68 L840.50,181.50 L841.00,181.50 L841.50,181.89 L842.00,183.34 L842.50,185.48 L843.00,188.28 L843.50,191.75 L844.00,195.86 L844.50,200.59 L845.00,205.93 L845.50,211.84 L846.00,218.29 L846.50,225.27 L847.00,232.73 L847.50,240.63 L848.00,248.95 L848.50,257.63 L849.00,266.65 L849.50,275.95 L850.00,285.50 L850.50,295.24 L851.00,305.14 L851.50,315.13 L852.00,325.19 L852.50,335.25 L853.00,345.27 L853.50,355.21 L854.00,365.01 L854.50,374.64 L855.00,384.03 L855.50,393.16 L856.00,401.97 L856.50,410.42 L857.00,418.48 L857.50,426.10 L858.00,433.25 L858.50,439.90 L859.00,446.01 L859.50,451.55 L860.00,456.51 L860.50,460.84 L861.00,464.54 L861.50,467.59 L862.00,469.97 L862.50,471.67 L863.00,472.68 L863.50,473.00 L864.00,472.62 L864.50,471.56 L865.00,469.80 L865.50,467.37 L866.00,464.27 L866.50,460.52 L867.00,456.13 L867.50,451.13 L868.00,445.54 L868.50,439.39 L869.00,432.70 L869.50,425.51 L870.00,417.85 L870.50,409.76 L871.00,401.27 L871.50,392.44 L872.00,383.29 L872.50,373.87 L873.00,364.24 L873.50,354.42 L874.00,344.48 L874.50,334.45 L875.00,324.38 L875.50,314.33 L876.00,304.34 L876.50,294.46 L877.00,284.73 L877.50,275.20 L878.00,265.92 L878.50,256.93 L879.00,248.27 L879.50,239.98 L880.00,232.11 L880.50,224.69 L881.00,217.76 L881.50,211.34 L882.00,205.48 L882.50,200.19 L883.00,195.51 L883.50,191.45 L884.00,188.03 L884.50,185.28 L885.00,183.20 L885.50,181.80 L886.00,181.50 L886.50,181.50 L887.00,181.76 L887.50,183.13 L888.00,185.18 L888.50,187.91 L889.00,191.30 L889.50,195.33 L890.00,199.99 L890.50,205.26 L891.00,211.10 L891.50,217.49 L892.00,224.41 L892.50,231.81 L893.00,239.66 L893.50,247.93 L894.00,256.57 L894.50,265.55 L895.00,274.82 L895.50,284.34 L896.00,294.06 L896.50,303.94 L897.00,313.93 L897.50,323.98 L898.00,334.04 L898.50,344.08 L899.00,354.03 L899.50,363.85 L900.00,373.49 L900.50,382.92 L901.00,392.08 L901.50,400.93 L902.00,409.43 L902.50,417.53 L903.00,425.21 L903.50,432.42 L904.00,439.13 L904.50,445.31 L905.00,450.92 L905.50,455.94 L906.00,460.36 L906.50,464.13 L907.00,467.26 L907.50,469.72 L908.00,471.50 L908.50,472.60 L909.00,473.00 L909.50,472.71 L910.00,471.72 L910.50,470.05 L911.00,467.70 L911.50,464.68 L912.00,461.00 L912.50,456.69 L913.00,451.76 L913.50,446.24 L914.00,440.15 L914.50,433.53 L915.00,426.40 L915.50,418.79 L916.00,410.75 L916.50,402.31 L917.00,393.52 L917.50,384.40 L918.00,375.02 L918.50,365.40 L919.00,355.61 L919.50,345.67 L920.00,335.65 L920.50,325.59 L921.00,315.53 L921.50,305.53 L922.00,295.63 L922.50,285.88 L923.00,276.33 L923.50,267.02 L924.00,257.99 L924.50,249.29 L925.00,240.96 L925.50,233.03 L926.00,225.56 L926.50,218.56 L927.00,212.09 L927.50,206.15 L928.00,200.80 L928.50,196.04 L929.00,191.90 L929.50,188.41 L930.00,185.57 L930.50,183.41 L931.00,181.93 L931.50,181.50 L932.00,181.50 L932.50,181.64 L933.00,182.93 L933.50,184.90 L934.00,187.55 L934.50,190.86 L935.00,194.82 L935.50,199.40 L936.00,204.59 L936.50,210.37 L937.00,216.70 L937.50,223.55 L938.00,230.89 L938.50,238.69 L939.00,246.92 L939.50,255.52 L940.00,264.46 L940.50,273.70 L941.00,283.19 L941.50,292.89 L942.00,302.75 L942.50,312.73 L943.00,322.77 L943.50,332.84 L944.00,342.88 L944.50,352.84 L945.00,362.68 L945.50,372.35 L946.00,381.80 L946.50,390.99 L947.00,399.88 L947.50,408.43 L948.00,416.58 L948.50,424.31 L949.00,431.58 L949.50,438.35 L950.00,444.59 L950.50,450.28 L951.00,455.37 L951.50,459.86 L952.00,463.71 L952.50,466.92 L953.00,469.46 L953.50,471.32 L954.00,472.50 L954.50,472.99 L955.00,472.78 L955.50,471.88 L956.00,470.29 L956.50,468.02 L957.00,465.08 L957.50,461.48 L958.00,457.24 L958.50,452.39 L959.00,446.94 L959.50,440.91 L960.00,434.35 L960.50,427.28 L961.00,419.73 L961.50,411.74 L962.00,403.34 L962.50,394.59 L963.00,385.51 L963.50,376.16 L964.00,366.57 L964.50,356.79 L965.00,346.87 L965.50,336.86 L966.00,326.80 L966.50,316.74 L967.00,306.73 L967.50,296.82 L968.00,287.05 L968.50,277.46 L969.00,268.12 L969.50,259.05 L970.00,250.31 L970.50,241.93 L971.00,233.96 L971.50,226.43 L972.00,219.38 L972.50,212.83 L973.00,206.84 L973.50,201.41 L974.00,196.58 L974.50,192.37 L975.00,188.79 L975.50,185.88 L976.00,183.64 L976.50,182.07 L977.00,181.50 L977.50,181.50 L978.00,181.53 L978.50,182.74 L979.00,184.63 L979.50,187.20 L980.00,190.43 L980.50,194.31 L981.00,198.82 L981.50,203.94 L982.00,209.65 L982.50,215.91 L983.00,222.70 L983.50,229.99 L984.00,237.74 L984.50,245.91 L985.00,254.47 L985.50,263.37 L986.00,272.57 L986.50,282.04 L987.00,291.71 L987.50,301.56 L988.00,311.53 L988.50,321.56 L989.00,331.63 L989.50,341.67 L990.00,351.65 L990.50,361.50 L991.00,371.20 L991.50,380.68 L992.00,389.91 L992.50,398.83 L993.00,407.42 L993.50,415.63 L994.00,423.41 L994.50,430.73 L995.00,437.57 L995.50,443.87 L996.00,449.62 L996.50,454.79 L997.00,459.35 L997.50,463.29 L998.00,466.57 L998.50,469.19 L999.00,471.14 L999.50,472.40 L1000.00,472.96 L1000.50,472.84 L1001.00,472.02 L1001.50,470.51 L1002.00,468.32 L1002.50,465.46 L1003.00,461.94 L1003.50,457.78 L1004.00,453.00 L1004.50,447.62 L1005.00,441.67 L1005.50,435.17 L1006.00,428.15 L1006.50,420.66 L1007.00,412.72 L1007.50,404.37 L1008.00,395.66 L1008.50,386.62 L1009.00,377.29 L1009.50,367.73 L1010.00,357.97 L1010.50,348.07 L1011.00,338.06 L1011.50,328.01 L1012.00,317.95 L1012.50,307.93 L1013.00,298.00 L1013.50,288.21 L1014.00,278.60 L1014.50,269.23 L1015.00,260.13 L1015.50,251.34 L1016.00,242.92 L1016.50,234.90 L1017.00,227.31 L1017.50,220.20 L1018.00,213.59 L1018.50,207.53 L1019.00,202.03 L1019.50,197.12 L1020.00,192.84 L1020.50,189.19 L1021.00,186.19 L1021.50,183.87 L1022.00,182.23 L1022.50,181.50 L1023.00,181.50 L1023.50,181.50 L1024.00,182.56 L1024.50,184.37 L1025.00,186.85 L1025.50,190.00 L1026.00,193.81 L1026.50,198.25 L1027.00,203.29 L1027.50,208.93 L1028.00,215.13 L1028.50,221.86 L1029.00,229.09 L1029.50,236.78 L1030.00,244.91 L1030.50,253.42 L1031.00,262.28 L1031.50,271.45 L1032.00,280.89 L1032.50,290.54 L1033.00,300.37 L1033.50,310.32 L1034.00,320.36 L1034.50,330.42 L1035.00,340.47 L1035.50,350.46 L1036.00,360.33 L1036.50,370.04 L1037.00,379.55 L1037.50,388.81 L1038.00,397.78 L1038.50,406.41 L1039.00,414.66 L1039.50,422.50 L1040.00,429.88 L1040.50,436.77 L1041.00,443.15 L1041.50,448.96 L1042.00,454.20 L1042.50,458.84 L1043.00,462.85 L1043.50,466.21 L1044.00,468.91 L1044.50,470.94 L1045.00,472.28 L1045.50,472.93 L1046.00,472.89 L1046.50,472.16 L1047.00,470.73 L1047.50,468.62 L1048.00,465.84" fill="none" stroke="#f8cc00" stroke-width="2"/><path d="M1067.3 183.0H1071V184.0H1067.3ZM1067.1 184.0H1071V185.0H1067.1ZM1067.9 185.0H1071V186.0H1067.9ZM1066.9 186.0H1071V187.0H1066.9ZM1067.7 187.0H1071V188.0H1067.7ZM1067.4 188.0H1071V189.0H1067.4ZM1066.9 189.0H1071V190.0H1066.9ZM1067.7 190.0H1071V191.0H1067.7ZM1066.9 191.0H1071V192.0H1066.9ZM1067.5 192.0H1071V193.0H1067.5ZM1066.9 193.0H1071V194.0H1066.9ZM1067.0 194.0H1071V195.0H1067.0ZM1067.5 195.0H1071V196.0H1067.5ZM1068.2 196.0H1071V197.0H1068.2ZM1067.0 197.0H1071V198.0H1067.0ZM1067.2 198.0H1071V199.0H1067.2ZM1067.9 199.0H1071V200.0H1067.9ZM1068.4 200.0H1071V201.0H1068.4ZM1067.8 201.0H1071V202.0H1067.8ZM1067.5 202.0H1071V203.0H1067.5ZM1068.4 203.0H1071V204.0H1068.4ZM1066.9 204.0H1071V205.0H1066.9ZM1068.2 205.0H1071V206.0H1068.2ZM1067.3 206.0H1071V207.0H1067.3ZM1067.0 207.0H1071V208.0H1067.0ZM1067.0 208.0H1071V209.0H1067.0ZM1067.3 209.0H1071V210.0H1067.3ZM1068.2 210.0H1071V211.0H1068.2ZM1067.1 211.0H1071V212.0H1067.1ZM1067.8 212.0H1071V213.0H1067.8ZM1067.9 213.0H1071V214.0H1067.9ZM1067.4 214.0H1071V215.0H1067.4ZM1067.7 215.0H1071V216.0H1067.7ZM1066.9 216.0H1071V217.0H1066.9ZM1066.9 217.0H1071V218.0H1066.9ZM1067.1 218.0H1071V219.0H1067.1ZM1067.9 219.0H1071V220.0H1067.9ZM1067.5 220.0H1071V221.0H1067.5ZM1067.3 221.0H1071V222.0H1067.3ZM1067.8 222.0H1071V223.0H1067.8ZM1067.6 223.0H1071V224.0H1067.6ZM1067.3 224.0H1071V225.0H1067.3ZM1068.1 225.0H1071V226.0H1068.1ZM1068.0 226.0H1071V227.0H1068.0ZM1067.2 227.0H1071V228.0H1067.2ZM1067.8 228.0H1071V229.0H1067.8ZM1067.7 229.0H1071V230.0H1067.7ZM1068.3 230.0H1071V231.0H1068.3ZM1068.0 231.0H1071V232.0H1068.0ZM1067.3 232.0H1071V233.0H1067.3ZM1068.4 233.0H1071V234.0H1068.4ZM1067.0 234.0H1071V235.0H1067.0ZM1067.5 235.0H1071V236.0H1067.5ZM1068.1 236.0H1071V237.0H1068.1ZM1067.1 237.0H1071V238.0H1067.1ZM1067.6 238.0H1071V239.0H1067.6ZM1066.9 239.0H1071V240.0H1066.9ZM1067.9 240.0H1071V241.0H1067.9ZM1068.1 241.0H1071V242.0H1068.1ZM1067.8 242.0H1071V243.0H1067.8ZM1068.3 243.0H1071V244.0H1068.3ZM1067.3 244.0H1071V245.0H1067.3ZM1068.0 245.0H1071V246.0H1068.0ZM1067.8 246.0H1071V247.0H1067.8ZM1067.8 247.0H1071V248.0H1067.8ZM1067.6 248.0H1071V249.0H1067.6ZM1068.2 249.0H1071V250.0H1068.2ZM1068.4 250.0H1071V251.0H1068.4ZM1067.6 251.0H1071V252.0H1067.6ZM1067.9 252.0H1071V253.0H1067.9ZM1066.9 253.0H1071V254.0H1066.9ZM1068.0 254.0H1071V255.0H1068.0ZM1067.9 255.0H1071V256.0H1067.9ZM1068.5 256.0H1071V257.0H1068.5ZM1068.2 257.0H1071V258.0H1068.2ZM1067.3 258.0H1071V259.0H1067.3ZM1067.4 259.0H1071V260.0H1067.4ZM1067.9 260.0H1071V261.0H1067.9ZM1066.8 261.0H1071V262.0H1066.8ZM1067.6 262.0H1071V263.0H1067.6ZM1067.1 263.0H1071V264.0H1067.1ZM1067.0 264.0H1071V265.0H1067.0ZM1066.9 265.0H1071V266.0H1066.9ZM1068.1 266.0H1071V267.0H1068.1ZM1067.0 267.0H1071V268.0H1067.0ZM1067.2 268.0H1071V269.0H1067.2ZM1067.5 269.0H1071V270.0H1067.5ZM1068.3 270.0H1071V271.0H1068.3ZM1066.9 271.0H1071V272.0H1066.9ZM1067.6 272.0H1071V273.0H1067.6ZM1067.7 273.0H1071V274.0H1067.7ZM1068.3 274.0H1071V275.0H1068.3ZM1068.2 275.0H1071V276.0H1068.2ZM1068.3 276.0H1071V277.0H1068.3ZM1067.3 277.0H1071V278.0H1067.3ZM1067.5 278.0H1071V279.0H1067.5ZM1067.4 279.0H1071V280.0H1067.4ZM1068.3 280.0H1071V281.0H1068.3ZM1068.4 281.0H1071V282.0H1068.4ZM1067.1 282.0H1071V283.0H1067.1ZM1067.1 283.0H1071V284.0H1067.1ZM1067.2 284.0H1071V285.0H1067.2ZM1067.2 285.0H1071V286.0H1067.2ZM1067.6 286.0H1071V287.0H1067.6ZM1067.8 287.0H1071V288.0H1067.8ZM1067.2 288.0H1071V289.0H1067.2ZM1066.8 289.0H1071V290.0H1066.8ZM1067.5 290.0H1071V291.0H1067.5ZM1067.4 291.0H1071V292.0H1067.4ZM1067.8 292.0H1071V293.0H1067.8ZM1068.4 293.0H1071V294.0H1068.4ZM1068.0 294.0H1071V295.0H1068.0ZM1067.7 295.0H1071V296.0H1067.7ZM1067.8 296.0H1071V297.0H1067.8ZM1067.9 297.0H1071V298.0H1067.9ZM1066.9 298.0H1071V299.0H1066.9ZM1068.3 299.0H1071V300.0H1068.3ZM1068.1 300.0H1071V301.0H1068.1ZM1068.3 301.0H1071V302.0H1068.3ZM1068.1 302.0H1071V303.0H1068.1ZM1067.5 303.0H1071V304.0H1067.5ZM1067.5 304.0H1071V305.0H1067.5ZM1067.0 305.0H1071V306.0H1067.0ZM1067.9 306.0H1071V307.0H1067.9ZM1066.9 307.0H1071V308.0H1066.9ZM1066.9 308.0H1071V309.0H1066.9ZM1067.2 309.0H1071V310.0H1067.2ZM1067.1 310.0H1071V311.0H1067.1ZM1067.4 311.0H1071V312.0H1067.4ZM1066.9 312.0H1071V313.0H1066.9ZM1066.8 313.0H1071V314.0H1066.8ZM1067.1 314.0H1071V315.0H1067.1ZM1067.0 315.0H1071V316.0H1067.0ZM1067.4 316.0H1071V317.0H1067.4ZM1066.8 317.0H1071V318.0H1066.8ZM1068.3 318.0H1071V319.0H1068.3ZM1067.8 319.0H1071V320.0H1067.8ZM1067.0 320.0H1071V321.0H1067.0ZM1067.2 321.0H1071V322.0H1067.2ZM1067.4 322.0H1071V323.0H1067.4ZM1067.4 323.0H1071V324.0H1067.4ZM1067.0 324.0H1071V325.0H1067.0ZM1068.2 325.0H1071V326.0H1068.2ZM1068.5 326.0H1071V327.0H1068.5ZM1067.6 327.0H1071V328.0H1067.6ZM1067.6 328.0H1071V329.0H1067.6ZM1066.9 329.0H1071V330.0H1066.9ZM1067.0 330.0H1071V331.0H1067.0ZM1067.4 331.0H1071V332.0H1067.4ZM1067.2 332.0H1071V333.0H1067.2ZM1068.2 333.0H1071V334.0H1068.2ZM1067.1 334.0H1071V335.0H1067.1ZM1066.8 335.0H1071V336.0H1066.8ZM1068.4 336.0H1071V337.0H1068.4ZM1067.7 337.0H1071V338.0H1067.7ZM1067.0 338.0H1071V339.0H1067.0ZM1067.7 339.0H1071V340.0H1067.7ZM1066.8 340.0H1071V341.0H1066.8ZM1067.7 341.0H1071V342.0H1067.7ZM1068.4 342.0H1071V343.0H1068.4ZM1068.3 343.0H1071V344.0H1068.3ZM1068.0 344.0H1071V345.0H1068.0ZM1067.2 345.0H1071V346.0H1067.2ZM1067.4 346.0H1071V347.0H1067.4ZM1067.1 347.0H1071V348.0H1067.1ZM1068.1 348.0H1071V349.0H1068.1ZM1067.7 349.0H1071V350.0H1067.7ZM1068.1 350.0H1071V351.0H1068.1ZM1067.4 351.0H1071V352.0H1067.4ZM1067.2 352.0H1071V353.0H1067.2ZM1068.2 353.0H1071V354.0H1068.2ZM1068.5 354.0H1071V355.0H1068.5ZM1068.2 355.0H1071V356.0H1068.2ZM1068.2 356.0H1071V357.0H1068.2ZM1068.2 357.0H1071V358.0H1068.2ZM1068.0 358.0H1071V359.0H1068.0ZM1067.2 359.0H1071V360.0H1067.2ZM1067.7 360.0H1071V361.0H1067.7ZM1067.4 361.0H1071V362.0H1067.4ZM1066.8 362.0H1071V363.0H1066.8ZM1066.8 363.0H1071V364.0H1066.8ZM1067.3 364.0H1071V365.0H1067.3ZM1067.2 365.0H1071V366.0H1067.2ZM1068.0 366.0H1071V367.0H1068.0ZM1068.4 367.0H1071V368.0H1068.4ZM1067.6 368.0H1071V369.0H1067.6ZM1068.4 369.0H1071V370.0H1068.4ZM1068.5 370.0H1071V371.0H1068.5ZM1068.4 371.0H1071V372.0H1068.4ZM1067.4 372.0H1071V373.0H1067.4ZM1067.2 373.0H1071V374.0H1067.2ZM1067.2 374.0H1071V375.0H1067.2ZM1067.1 375.0H1071V376.0H1067.1ZM1067.1 376.0H1071V377.0H1067.1ZM1067.8 377.0H1071V378.0H1067.8ZM1068.3 378.0H1071V379.0H1068.3ZM1068.2 379.0H1071V380.0H1068.2ZM1067.6 380.0H1071V381.0H1067.6ZM1067.9 381.0H1071V382.0H1067.9ZM1068.1 382.0H1071V383.0H1068.1ZM1066.9 383.0H1071V384.0H1066.9ZM1067.9 384.0H1071V385.0H1067.9ZM1068.3 385.0H1071V386.0H1068.3ZM1068.1 386.0H1071V387.0H1068.1ZM1068.1 387.0H1071V388.0H1068.1ZM1067.6 388.0H1071V389.0H1067.6ZM1067.1 389.0H1071V390.0H1067.1ZM1068.1 390.0H1071V391.0H1068.1ZM1067.4 391.0H1071V392.0H1067.4ZM1068.1 392.0H1071V393.0H1068.1ZM1068.4 393.0H1071V394.0H1068.4ZM1067.5 394.0H1071V395.0H1067.5ZM1067.5 395.0H1071V396.0H1067.5ZM1068.4 396.0H1071V397.0H1068.4ZM1068.0 397.0H1071V398.0H1068.0ZM1067.1 398.0H1071V399.0H1067.1ZM1067.0 399.0H1071V400.0H1067.0ZM1067.1 400.0H1071V401.0H1067.1ZM1068.3 401.0H1071V402.0H1068.3ZM1068.2 402.0H1071V403.0H1068.2ZM1067.0 403.0H1071V404.0H1067.0ZM1068.2 404.0H1071V405.0H1068.2ZM1068.4 405.0H1071V406.0H1068.4ZM1067.9 406.0H1071V407.0H1067.9ZM1067.4 407.0H1071V408.0H1067.4ZM1067.7 408.0H1071V409.0H1067.7ZM1067.0 409.0H1071V410.0H1067.0ZM1066.8 410.0H1071V411.0H1066.8ZM1068.4 411.0H1071V412.0H1068.4ZM1067.9 412.0H1071V413.0H1067.9ZM1067.7 413.0H1071V414.0H1067.7ZM1068.4 414.0H1071V415.0H1068.4ZM1067.5 415.0H1071V416.0H1067.5ZM1068.3 416.0H1071V417.0H1068.3ZM1068.2 417.0H1071V418.0H1068.2ZM1067.2 418.0H1071V419.0H1067.2ZM1067.2 419.0H1071V420.0H1067.2ZM1067.3 420.0H1071V421.0H1067.3ZM1067.2 421.0H1071V422.0H1067.2ZM1067.8 422.0H1071V423.0H1067.8ZM1067.2 423.0H1071V424.0H1067.2ZM1067.5 424.0H1071V425.0H1067.5ZM1067.0 425.0H1071V426.0H1067.0ZM1068.3 426.0H1071V427.0H1068.3ZM1067.4 427.0H1071V428.0H1067.4ZM1067.6 428.0H1071V429.0H1067.6ZM1067.8 429.0H1071V430.0H1067.8ZM1068.3 430.0H1071V431.0H1068.3ZM1067.5 431.0H1071V432.0H1067.5ZM1068.3 432.0H1071V433.0H1068.3ZM1067.6 433.0H1071V434.0H1067.6ZM1067.7 434.0H1071V435.0H1067.7ZM1067.7 435.0H1071V436.0H1067.7ZM1066.8 436.0H1071V437.0H1066.8ZM1067.5 437.0H1071V438.0H1067.5ZM1067.1 438.0H1071V439.0H1067.1ZM1066.8 439.0H1071V440.0H1066.8ZM1068.1 440.0H1071V441.0H1068.1ZM1067.1 441.0H1071V442.0H1067.1ZM1067.6 442.0H1071V443.0H1067.6ZM1068.0 443.0H1071V444.0H1068.0ZM1067.7 444.0H1071V445.0H1067.7ZM1067.3 445.0H1071V446.0H1067.3ZM1067.7 446.0H1071V447.0H1067.7ZM1067.7 447.0H1071V448.0H1067.7ZM1068.1 448.0H1071V449.0H1068.1ZM1067.0 449.0H1071V450.0H1067.0ZM1067.7 450.0H1071V451.0H1067.7ZM1067.2 451.0H1071V452.0H1067.2ZM1067.3 452.0H1071V453.0H1067.3ZM1068.1 453.0H1071V454.0H1068.1ZM1067.7 454.0H1071V455.0H1067.7ZM1067.7 455.0H1071V456.0H1067.7ZM1068.1 456.0H1071V457.0H1068.1ZM1068.3 457.0H1071V458.0H1068.3ZM1067.5 458.0H1071V459.0H1067.5ZM1067.8 459.0H1071V460.0H1067.8ZM1067.6 460.0H1071V461.0H1067.6ZM1067.7 461.0H1071V462.0H1067.7ZM1068.0 462.0H1071V463.0H1068.0ZM1067.6 463.0H1071V464.0H1067.6ZM1067.7 464.0H1071V465.0H1067.7ZM1067.6 465.0H1071V466.0H1067.6ZM1068.4 466.0H1071V467.0H1068.4ZM1068.0 467.0H1071V468.0H1068.0ZM1068.3 468.0H1071V469.0H1068.3ZM1068.4 469.0H1071V470.0H1068.4ZM1067.2 470.0H1071V471.0H1067.2ZM1067.7 471.0H1071V472.0H1067.7ZM1068.4 472.0H1071V473.0H1068.4Z" fill="#f0d000"/><path d="M1065.3 181.0H1071V182.0H1065.3ZM1063.8 182.0H1071V183.0H1063.8ZM1063.8 183.0H1071V184.0H1063.8ZM1064.4 184.0H1071V185.0H1064.4ZM1063.7 185.0H1071V186.0H1063.7ZM1064.0 186.0H1071V187.0H1064.0Z" fill="#f0d000"/><path d="M1052.5 326.0H1068V327.0H1052.5ZM1056.7 327.0H1068V328.0H1056.7ZM1057.5 328.0H1068V329.0H1057.5ZM1058.3 329.0H1068V330.0H1058.3ZM1053.1 330.0H1068V331.0H1053.1ZM1057.0 331.0H1068V332.0H1057.0ZM1056.6 332.0H1068V333.0H1056.6ZM1053.0 333.0H1068V334.0H1053.0ZM1058.2 334.0H1068V335.0H1058.2ZM1058.8 335.0H1068V336.0H1058.8ZM1053.5 336.0H1068V337.0H1053.5ZM1058.7 337.0H1068V338.0H1058.7ZM1054.8 338.0H1068V339.0H1054.8ZM1055.4 339.0H1068V340.0H1055.4ZM1058.9 340.0H1068V341.0H1058.9ZM1057.8 341.0H1068V342.0H1057.8ZM1053.1 342.0H1068V343.0H1053.1ZM1055.0 343.0H1068V344.0H1055.0ZM1055.6 344.0H1068V345.0H1055.6ZM1054.4 345.0H1068V346.0H1054.4ZM1053.4 346.0H1068V347.0H1053.4ZM1054.2 347.0H1068V348.0H1054.2ZM1057.1 348.0H1068V349.0H1057.1ZM1052.1 349.0H1068V350.0H1052.1ZM1055.9 350.0H1068V351.0H1055.9ZM1055.1 351.0H1068V352.0H1055.1ZM1052.1 352.0H1068V353.0H1052.1ZM1054.3 353.0H1068V354.0H1054.3ZM1056.4 354.0H1068V355.0H1056.4ZM1055.6 355.0H1068V356.0H1055.6ZM1052.5 356.0H1068V357.0H1052.5ZM1058.9 357.0H1068V358.0H1058.9ZM1057.5 358.0H1068V359.0H1057.5ZM1058.8 359.0H1068V360.0H1058.8ZM1052.7 360.0H1068V361.0H1052.7ZM1053.9 361.0H1068V362.0H1053.9ZM1052.3 362.0H1068V363.0H1052.3ZM1057.5 363.0H1068V364.0H1057.5ZM1053.9 364.0H1068V365.0H1053.9ZM1052.9 365.0H1068V366.0H1052.9ZM1055.0 366.0H1068V367.0H1055.0ZM1058.4 367.0H1068V368.0H1058.4ZM1057.7 368.0H1068V369.0H1057.7ZM1053.8 369.0H1068V370.0H1053.8ZM1053.0 370.0H1068V371.0H1053.0ZM1058.4 371.0H1068V372.0H1058.4ZM1056.0 372.0H1068V373.0H1056.0ZM1056.9 373.0H1068V374.0H1056.9ZM1052.6 374.0H1068V375.0H1052.6ZM1052.4 375.0H1068V376.0H1052.4ZM1056.8 376.0H1068V377.0H1056.8ZM1055.0 377.0H1068V378.0H1055.0ZM1052.5 378.0H1068V379.0H1052.5ZM1058.6 379.0H1068V380.0H1058.6ZM1056.4 380.0H1068V381.0H1056.4ZM1057.6 381.0H1068V382.0H1057.6ZM1052.6 382.0H1068V383.0H1052.6ZM1058.0 383.0H1068V384.0H1058.0ZM1052.5 384.0H1068V385.0H1052.5ZM1058.0 385.0H1068V386.0H1058.0ZM1055.2 386.0H1068V387.0H1055.2ZM1054.4 387.0H1068V388.0H1054.4ZM1055.9 388.0H1068V389.0H1055.9ZM1058.5 389.0H1068V390.0H1058.5ZM1053.9 390.0H1068V391.0H1053.9ZM1052.9 391.0H1068V392.0H1052.9ZM1055.7 392.0H1068V393.0H1055.7ZM1053.7 393.0H1068V394.0H1053.7ZM1052.8 394.0H1068V395.0H1052.8ZM1053.1 395.0H1068V396.0H1053.1ZM1052.4 396.0H1068V397.0H1052.4ZM1053.4 397.0H1068V398.0H1053.4ZM1054.2 398.0H1068V399.0H1054.2ZM1054.1 399.0H1068V400.0H1054.1ZM1057.3 400.0H1068V401.0H1057.3ZM1054.0 401.0H1068V402.0H1054.0ZM1055.5 402.0H1068V403.0H1055.5ZM1053.2 403.0H1068V404.0H1053.2ZM1054.4 404.0H1068V405.0H1054.4ZM1052.1 405.0H1068V406.0H1052.1ZM1053.8 406.0H1068V407.0H1053.8ZM1052.1 407.0H1068V408.0H1052.1ZM1057.1 408.0H1068V409.0H1057.1ZM1055.9 409.0H1068V410.0H1055.9ZM1053.3 410.0H1068V411.0H1053.3ZM1055.3 411.0H1068V412.0H1055.3ZM1058.5 412.0H1068V413.0H1058.5ZM1052.7 413.0H1068V414.0H1052.7ZM1057.7 414.0H1068V415.0H1057.7ZM1055.0 415.0H1068V416.0H1055.0ZM1055.5 416.0H1068V417.0H1055.5ZM1057.8 417.0H1068V418.0H1057.8ZM1054.8 418.0H1068V419.0H1054.8ZM1055.5 419.0H1068V420.0H1055.5ZM1056.8 420.0H1068V421.0H1056.8ZM1058.9 421.0H1068V422.0H1058.9ZM1054.4 422.0H1068V423.0H1054.4ZM1057.8 423.0H1068V424.0H1057.8ZM1056.9 424.0H1068V425.0H1056.9ZM1056.5 425.0H1068V426.0H1056.5ZM1054.8 426.0H1068V427.0H1054.8ZM1054.4 427.0H1068V428.0H1054.4ZM1052.4 428.0H1068V429.0H1052.4ZM1052.9 429.0H1068V430.0H1052.9ZM1052.5 430.0H1068V431.0H1052.5ZM1057.2 431.0H1068V432.0H1057.2ZM1053.8 432.0H1068V433.0H1053.8ZM1053.1 433.0H1068V434.0H1053.1ZM1052.6 434.0H1068V435.0H1052.6ZM1057.9 435.0H1068V436.0H1057.9ZM1058.1 436.0H1068V437.0H1058.1ZM1056.7 437.0H1068V438.0H1056.7ZM1054.0 438.0H1068V439.0H1054.0ZM1053.7 439.0H1068V440.0H1053.7ZM1054.1 440.0H1068V441.0H1054.1ZM1055.2 441.0H1068V442.0H1055.2ZM1053.1 442.0H1068V443.0H1053.1ZM1055.1 443.0H1068V444.0H1055.1ZM1053.8 444.0H1068V445.0H1053.8ZM1058.7 445.0H1068V446.0H1058.7ZM1058.8 446.0H1068V447.0H1058.8ZM1055.8 447.0H1068V448.0H1055.8ZM1053.7 448.0H1068V449.0H1053.7ZM1058.8 449.0H1068V450.0H1058.8ZM1054.2 450.0H1068V451.0H1054.2ZM1054.5 451.0H1068V452.0H1054.5ZM1052.0 452.0H1068V453.0H1052.0ZM1054.7 453.0H1068V454.0H1054.7ZM1055.3 454.0H1068V455.0H1055.3ZM1055.5 455.0H1068V456.0H1055.5ZM1053.4 456.0H1068V457.0H1053.4ZM1055.5 457.0H1068V458.0H1055.5ZM1052.0 458.0H1068V459.0H1052.0ZM1053.8 459.0H1068V460.0H1053.8ZM1052.6 460.0H1068V461.0H1052.6ZM1054.8 461.0H1068V462.0H1054.8ZM1052.3 462.0H1068V463.0H1052.3ZM1052.2 463.0H1068V464.0H1052.2ZM1054.1 464.0H1068V465.0H1054.1ZM1053.6 465.0H1068V466.0H1053.6ZM1056.1 466.0H1068V467.0H1056.1ZM1055.7 467.0H1068V468.0H1055.7ZM1057.3 468.0H1068V469.0H1057.3ZM1056.6 469.0H1068V470.0H1056.6ZM1057.0 470.0H1068V471.0H1057.0ZM1058.2 471.0H1068V472.0H1058.2ZM1054.7 472.0H1068V473.0H1054.7Z" fill="#0a9fd8"/><path d="M1067.7 415.0H1071V416.0H1067.7ZM1068.2 416.0H1071V417.0H1068.2ZM1067.5 417.0H1071V418.0H1067.5ZM1068.0 418.0H1071V419.0H1068.0ZM1067.9 419.0H1071V420.0H1067.9ZM1067.4 420.0H1071V421.0H1067.4ZM1068.1 421.0H1071V422.0H1068.1ZM1068.1 422.0H1071V423.0H1068.1ZM1067.9 423.0H1071V424.0H1067.9ZM1068.0 424.0H1071V425.0H1068.0ZM1068.1 425.0H1071V426.0H1068.1ZM1067.5 426.0H1071V427.0H1067.5ZM1067.8 427.0H1071V428.0H1067.8ZM1067.8 428.0H1071V429.0H1067.8ZM1068.1 429.0H1071V430.0H1068.1ZM1068.1 430.0H1071V431.0H1068.1ZM1068.1 431.0H1071V432.0H1068.1ZM1067.9 432.0H1071V433.0H1067.9ZM1068.1 433.0H1071V434.0H1068.1ZM1068.0 434.0H1071V435.0H1068.0ZM1068.0 435.0H1071V436.0H1068.0ZM1067.6 436.0H1071V437.0H1067.6ZM1067.4 437.0H1071V438.0H1067.4ZM1067.5 438.0H1071V439.0H1067.5ZM1067.7 439.0H1071V440.0H1067.7ZM1067.5 440.0H1071V441.0H1067.5ZM1068.1 441.0H1071V442.0H1068.1ZM1067.9 442.0H1071V443.0H1067.9ZM1067.9 443.0H1071V444.0H1067.9ZM1067.9 444.0H1071V445.0H1067.9ZM1068.0 445.0H1071V446.0H1068.0ZM1067.8 446.0H1071V447.0H1067.8ZM1067.4 447.0H1071V448.0H1067.4ZM1068.1 448.0H1071V449.0H1068.1ZM1068.0 449.0H1071V450.0H1068.0ZM1067.8 450.0H1071V451.0H1067.8ZM1067.8 451.0H1071V452.0H1067.8ZM1068.0 452.0H1071V453.0H1068.0ZM1067.5 453.0H1071V454.0H1067.5ZM1068.0 454.0H1071V455.0H1068.0ZM1067.6 455.0H1071V456.0H1067.6ZM1067.5 456.0H1071V457.0H1067.5ZM1067.6 457.0H1071V458.0H1067.6ZM1068.0 458.0H1071V459.0H1068.0ZM1067.6 459.0H1071V460.0H1067.6ZM1068.0 460.0H1071V461.0H1068.0ZM1068.2 461.0H1071V462.0H1068.2ZM1067.8 462.0H1071V463.0H1067.8ZM1067.7 463.0H1071V464.0H1067.7ZM1067.8 464.0H1071V465.0H1067.8ZM1068.0 465.0H1071V466.0H1068.0ZM1068.0 466.0H1071V467.0H1068.0ZM1067.9 467.0H1071V468.0H1067.9ZM1067.9 468.0H1071V469.0H1067.9ZM1067.5 469.0H1071V470.0H1067.5ZM1067.5 470.0H1071V471.0H1067.5ZM1067.6 471.0H1071V472.0H1067.6ZM1068.0 472.0H1071V473.0H1068.0ZM1067.7 473.0H1071V474.0H1067.7ZM1067.9 474.0H1071V475.0H1067.9ZM1067.4 475.0H1071V476.0H1067.4ZM1067.5 476.0H1071V477.0H1067.5ZM1067.6 477.0H1071V478.0H1067.6ZM1068.0 478.0H1071V479.0H1068.0ZM1068.0 479.0H1071V480.0H1068.0ZM1068.0 480.0H1071V481.0H1068.0ZM1067.6 481.0H1071V482.0H1067.6ZM1067.8 482.0H1071V483.0H1067.8ZM1067.8 483.0H1071V484.0H1067.8ZM1067.8 484.0H1071V485.0H1067.8ZM1067.5 485.0H1071V486.0H1067.5ZM1068.2 486.0H1071V487.0H1068.2ZM1067.6 487.0H1071V488.0H1067.6ZM1068.2 488.0H1071V489.0H1068.2ZM1068.2 489.0H1071V490.0H1068.2ZM1067.4 490.0H1071V491.0H1067.4ZM1067.8 491.0H1071V492.0H1067.8ZM1068.1 492.0H1071V493.0H1068.1ZM1068.2 493.0H1071V494.0H1068.2ZM1067.8 494.0H1071V495.0H1067.8ZM1067.6 495.0H1071V496.0H1067.6ZM1067.6 496.0H1071V497.0H1067.6ZM1068.2 497.0H1071V498.0H1068.2ZM1067.6 498.0H1071V499.0H1067.6ZM1067.9 499.0H1071V500.0H1067.9ZM1067.5 500.0H1071V501.0H1067.5ZM1067.8 501.0H1071V502.0H1067.8ZM1068.2 502.0H1071V503.0H1068.2ZM1067.5 503.0H1071V504.0H1067.5ZM1068.1 504.0H1071V505.0H1068.1ZM1067.8 505.0H1071V506.0H1067.8ZM1068.1 506.0H1071V507.0H1068.1ZM1068.0 507.0H1071V508.0H1068.0ZM1067.6 508.0H1071V509.0H1067.6ZM1068.2 509.0H1071V510.0H1068.2ZM1067.8 510.0H1071V511.0H1067.8ZM1067.4 511.0H1071V512.0H1067.4ZM1067.4 512.0H1071V513.0H1067.4ZM1067.8 513.0H1071V514.0H1067.8ZM1067.8 514.0H1071V515.0H1067.8ZM1067.7 515.0H1071V516.0H1067.7ZM1067.5 516.0H1071V517.0H1067.5ZM1067.7 517.0H1071V518.0H1067.7ZM1067.7 518.0H1071V519.0H1067.7ZM1068.1 519.0H1071V520.0H1068.1ZM1067.4 520.0H1071V521.0H1067.4ZM1068.0 521.0H1071V522.0H1068.0ZM1068.1 522.0H1071V523.0H1068.1ZM1067.5 523.0H1071V524.0H1067.5ZM1068.2 524.0H1071V525.0H1068.2ZM1068.0 525.0H1071V526.0H1068.0ZM1068.2 526.0H1071V527.0H1068.2ZM1067.6 527.0H1071V528.0H1067.6ZM1067.7 528.0H1071V529.0H1067.7ZM1067.7 529.0H1071V530.0H1067.7ZM1068.2 530.0H1071V531.0H1068.2ZM1067.9 531.0H1071V532.0H1067.9ZM1067.7 532.0H1071V533.0H1067.7ZM1067.8 533.0H1071V534.0H1067.8ZM1067.6 534.0H1071V535.0H1067.6ZM1067.4 535.0H1071V536.0H1067.4ZM1067.5 536.0H1071V537.0H1067.5ZM1068.1 537.0H1071V538.0H1068.1ZM1067.6 538.0H1071V539.0H1067.6ZM1068.2 539.0H1071V540.0H1068.2ZM1067.6 540.0H1071V541.0H1067.6ZM1067.6 541.0H1071V542.0H1067.6ZM1067.8 542.0H1071V543.0H1067.8ZM1067.6 543.0H1071V544.0H1067.6ZM1067.7 544.0H1071V545.0H1067.7ZM1068.2 545.0H1071V546.0H1068.2ZM1068.1 546.0H1071V547.0H1068.1ZM1068.1 547.0H1071V548.0H1068.1ZM1067.9 548.0H1071V549.0H1067.9ZM1068.2 549.0H1071V550.0H1068.2ZM1068.2 550.0H1071V551.0H1068.2ZM1067.9 551.0H1071V552.0H1067.9ZM1068.0 552.0H1071V553.0H1068.0ZM1067.4 553.0H1071V554.0H1067.4ZM1068.0 554.0H1071V555.0H1068.0ZM1067.8 555.0H1071V556.0H1067.8ZM1068.0 556.0H1071V557.0H1068.0ZM1067.9 557.0H1071V558.0H1067.9ZM1067.6 558.0H1071V559.0H1067.6ZM1067.4 559.0H1071V560.0H1067.4ZM1068.2 560.0H1071V561.0H1068.2ZM1067.5 561.0H1071V562.0H1067.5ZM1067.8 562.0H1071V563.0H1067.8ZM1067.7 563.0H1071V564.0H1067.7ZM1067.7 564.0H1071V565.0H1067.7ZM1068.0 565.0H1071V566.0H1068.0ZM1068.2 566.0H1071V567.0H1068.2ZM1067.6 567.0H1071V568.0H1067.6ZM1068.0 568.0H1071V569.0H1068.0ZM1067.7 569.0H1071V570.0H1067.7ZM1067.9 570.0H1071V571.0H1067.9ZM1067.7 571.0H1071V572.0H1067.7ZM1067.5 572.0H1071V573.0H1067.5ZM1067.5 573.0H1071V574.0H1067.5ZM1067.6 574.0H1071V575.0H1067.6ZM1068.2 575.0H1071V576.0H1068.2ZM1067.8 576.0H1071V577.0H1067.8ZM1067.6 577.0H1071V578.0H1067.6ZM1068.2 578.0H1071V579.0H1068.2ZM1068.2 579.0H1071V580.0H1068.2ZM1067.8 580.0H1071V581.0H1067.8ZM1067.5 581.0H1071V582.0H1067.5ZM1067.6 582.0H1071V583.0H1067.6ZM1067.5 583.0H1071V584.0H1067.5ZM1067.7 584.0H1071V585.0H1067.7ZM1067.5 585.0H1071V586.0H1067.5ZM1067.6 586.0H1071V587.0H1067.6ZM1067.6 587.0H1071V588.0H1067.6ZM1067.9 588.0H1071V589.0H1067.9ZM1068.1 589.0H1071V590.0H1068.1ZM1068.0 590.0H1071V591.0H1068.0ZM1067.7 591.0H1071V592.0H1067.7ZM1067.7 592.0H1071V593.0H1067.7ZM1067.8 593.0H1071V594.0H1067.8ZM1067.7 594.0H1071V595.0H1067.7ZM1067.7 595.0H1071V596.0H1067.7ZM1067.5 596.0H1071V597.0H1067.5ZM1067.6 597.0H1071V598.0H1067.6ZM1068.2 598.0H1071V599.0H1068.2ZM1067.5 599.0H1071V600.0H1067.5ZM1067.8 600.0H1071V601.0H1067.8ZM1067.9 601.0H1071V602.0H1067.9ZM1068.1 602.0H1071V603.0H1068.1ZM1067.6 603.0H1071V604.0H1067.6ZM1067.6 604.0H1071V605.0H1067.6ZM1067.6 605.0H1071V606.0H1067.6ZM1067.7 606.0H1071V607.0H1067.7ZM1067.8 607.0H1071V608.0H1067.8ZM1068.2 608.0H1071V609.0H1068.2ZM1068.1 609.0H1071V610.0H1068.1ZM1068.1 610.0H1071V611.0H1068.1ZM1067.4 611.0H1071V612.0H1067.4ZM1067.4 612.0H1071V613.0H1067.4ZM1068.0 613.0H1071V614.0H1068.0ZM1068.2 614.0H1071V615.0H1068.2ZM1067.8 615.0H1071V616.0H1067.8ZM1067.9 616.0H1071V617.0H1067.9ZM1067.4 617.0H1071V618.0H1067.4ZM1067.7 618.0H1071V619.0H1067.7ZM1068.2 619.0H1071V620.0H1068.2ZM1068.1 620.0H1071V621.0H1068.1ZM1068.1 621.0H1071V622.0H1068.1ZM1068.2 622.0H1071V623.0H1068.2ZM1067.6 623.0H1071V624.0H1067.6ZM1067.5 624.0H1071V625.0H1067.5ZM1067.5 625.0H1071V626.0H1067.5ZM1067.8 626.0H1071V627.0H1067.8ZM1068.0 627.0H1071V628.0H1068.0ZM1068.2 628.0H1071V629.0H1068.2ZM1068.0 629.0H1071V630.0H1068.0ZM1067.9 630.0H1071V631.0H1067.9ZM1068.0 631.0H1071V632.0H1068.0ZM1067.8 632.0H1071V633.0H1067.8ZM1067.9 633.0H1071V634.0H1067.9ZM1067.4 634.0H1071V635.0H1067.4ZM1068.1 635.0H1071V636.0H1068.1ZM1067.6 636.0H1071V637.0H1067.6ZM1068.2 637.0H1071V638.0H1068.2ZM1067.9 638.0H1071V639.0H1067.9ZM1067.7 639.0H1071V640.0H1067.7ZM1067.5 640.0H1071V641.0H1067.5ZM1067.6 641.0H1071V642.0H1067.6ZM1067.9 642.0H1071V643.0H1067.9ZM1068.0 643.0H1071V644.0H1068.0ZM1067.5 644.0H1071V645.0H1067.5ZM1067.5 645.0H1071V646.0H1067.5ZM1067.8 646.0H1071V647.0H1067.8ZM1067.9 647.0H1071V648.0H1067.9ZM1067.7 648.0H1071V649.0H1067.7ZM1067.6 649.0H1071V650.0H1067.6ZM1067.9 650.0H1071V651.0H1067.9ZM1067.4 651.0H1071V652.0H1067.4ZM1067.7 652.0H1071V653.0H1067.7ZM1067.8 653.0H1071V654.0H1067.8ZM1068.2 654.0H1071V655.0H1068.2ZM1067.9 655.0H1071V656.0H1067.9ZM1068.1 656.0H1071V657.0H1068.1ZM1067.8 657.0H1071V658.0H1067.8ZM1067.6 658.0H1071V659.0H1067.6ZM1067.6 659.0H1071V660.0H1067.6ZM1068.2 660.0H1071V661.0H1068.2ZM1068.0 661.0H1071V662.0H1068.0ZM1067.7 662.0H1071V663.0H1067.7ZM1067.4 663.0H1071V664.0H1067.4ZM1067.8 664.0H1071V665.0H1067.8ZM1068.0 665.0H1071V666.0H1068.0ZM1067.8 666.0H1071V667.0H1067.8ZM1067.6 667.0H1071V668.0H1067.6ZM1068.0 668.0H1071V669.0H1068.0ZM1068.2 669.0H1071V670.0H1068.2ZM1067.6 670.0H1071V671.0H1067.6ZM1067.4 671.0H1071V672.0H1067.4ZM1067.7 672.0H1071V673.0H1067.7ZM1067.8 673.0H1071V674.0H1067.8ZM1068.0 674.0H1071V675.0H1068.0ZM1067.6 675.0H1071V676.0H1067.6ZM1068.1 676.0H1071V677.0H1068.1ZM1068.0 677.0H1071V678.0H1068.0ZM1067.8 678.0H1071V679.0H1067.8ZM1067.6 679.0H1071V680.0H1067.6ZM1068.2 680.0H1071V681.0H1068.2ZM1067.7 681.0H1071V682.0H1067.7ZM1068.1 682.0H1071V683.0H1068.1ZM1067.6 683.0H1071V684.0H1067.6ZM1067.6 684.0H1071V685.0H1067.6ZM1068.0 685.0H1071V686.0H1068.0ZM1067.6 686.0H1071V687.0H1067.6ZM1068.2 687.0H1071V688.0H1068.2ZM1067.8 688.0H1071V689.0H1067.8ZM1067.6 689.0H1071V690.0H1067.6ZM1067.6 690.0H1071V691.0H1067.6ZM1067.8 691.0H1071V692.0H1067.8ZM1068.0 692.0H1071V693.0H1068.0ZM1068.2 693.0H1071V694.0H1068.2ZM1067.5 694.0H1071V695.0H1067.5ZM1067.7 695.0H1071V696.0H1067.7ZM1067.6 696.0H1071V697.0H1067.6ZM1068.2 697.0H1071V698.0H1068.2ZM1067.5 698.0H1071V699.0H1067.5ZM1067.4 699.0H1071V700.0H1067.4ZM1067.5 700.0H1071V701.0H1067.5ZM1067.7 701.0H1071V702.0H1067.7ZM1068.2 702.0H1071V703.0H1068.2ZM1068.1 703.0H1071V704.0H1068.1ZM1068.0 704.0H1071V705.0H1068.0ZM1068.2 705.0H1071V706.0H1068.2ZM1068.2 706.0H1071V707.0H1068.2ZM1067.7 707.0H1071V708.0H1067.7ZM1067.6 708.0H1071V709.0H1067.6ZM1068.2 709.0H1071V710.0H1068.2ZM1068.0 710.0H1071V711.0H1068.0ZM1067.4 711.0H1071V712.0H1067.4ZM1068.0 712.0H1071V713.0H1068.0ZM1067.7 713.0H1071V714.0H1067.7ZM1067.7 714.0H1071V715.0H1067.7ZM1067.7 715.0H1071V716.0H1067.7ZM1067.5 716.0H1071V717.0H1067.5ZM1067.4 717.0H1071V718.0H1067.4ZM1067.6 718.0H1071V719.0H1067.6Z" fill="#ff00ff"/><path d="M1049.0 692H1071V693H1049.0ZM1051.0 693H1071V694H1051.0ZM1050.1 694H1071V695H1050.1ZM1052.0 695H1071V696H1052.0ZM1053.6 696H1071V697H1053.6ZM1057.8 697H1071V698H1057.8ZM1057.8 698H1071V699H1057.8ZM1052.5 699H1071V700H1052.5ZM1056.7 700H1071V701H1056.7ZM1058.5 701H1071V702H1058.5ZM1056.8 702H1071V703H1056.8ZM1055.8 703H1071V704H1055.8ZM1056.0 704H1071V705H1056.0ZM1060.4 705H1071V706H1060.4ZM1061.2 706H1071V707H1061.2ZM1058.6 707H1071V708H1058.6ZM1057.4 708H1071V709H1057.4ZM1056.0 709H1071V710H1056.0ZM1059.2 710H1071V711H1059.2ZM1051.9 711H1071V712H1051.9ZM1051.8 712H1071V713H1051.8ZM1055.6 713H1071V714H1055.6ZM1058.3 714H1071V715H1058.3ZM1056.6 715H1071V716H1056.6ZM1051.6 716H1071V717H1051.6ZM1054.9 717H1071V718H1054.9ZM1052.9 718H1071V719H1052.9ZM1049.0 719H1071V720H1049.0Z" fill="#ff00ff"/><rect x="1070" y="157" width="1" height="632" fill="#000"/><path d="M137 466L149.5 473L137 480Z" fill="#f8cc00" stroke="#fff" stroke-width="0.8"/><path d="M137 700L149.5 707L137 714Z" fill="#ff10ff" stroke="#fff" stroke-width="0.8"/><path d="M1048 420L1036 426.5L1048 433Z" fill="#10b8f0"/><path d="M284 181L297 181L290.5 191Z" fill="#fff"/><path d="M152 163.5L146 169.5L152 175.5" fill="none" stroke="#2f7fe8" stroke-width="3" stroke-linecap="round" stroke-linejoin="round"/><rect x="160" y="158" width="88" height="21" fill="#000" stroke="#00f000" stroke-width="2"/><rect x="249.5" y="157.5" width="23" height="22" fill="#000" stroke="#c8a000" stroke-width="1"/><rect x="273.5" y="157.5" width="23" height="22" fill="#000" stroke="#28b0e8" stroke-width="1"/><rect x="297.5" y="157.5" width="23" height="22" fill="#000" stroke="#5a5a5a" stroke-width="1"/><rect x="321.5" y="157.5" width="23" height="22" fill="#000" stroke="#5a5a5a" stroke-width="1"/><line x1="923" y1="172" x2="928" y2="177" stroke="#8a8a8a" stroke-width="2.5" stroke-linecap="round"/><circle cx="918" cy="167" r="6.5" fill="#2a64b8" stroke="#c8d4e0" stroke-width="1.5"/><text x="918" y="170.5" font-size="9" fill="#fff" font-weight="bold" text-anchor="middle" font-family="Liberation Sans">1</text><path d="M937 160L946 170M937 160V165M937 160H942" stroke="#2a8ae8" stroke-width="1.8" fill="none"/><rect x="935" y="170" width="14" height="4" fill="#7a7a7a"/><path d="M959 161V169M959 165H969" stroke="#2a8ae8" stroke-width="1.8" fill="none"/><rect x="957" y="170" width="14" height="4" fill="#7a7a7a"/><path d="M981 161V169M981 162H994M981 166H990" stroke="#2a8ae8" stroke-width="1.8" fill="none"/><rect x="980" y="170" width="14" height="4" fill="#7a7a7a"/><line x1="1015" y1="172" x2="1020" y2="177" stroke="#8a8a8a" stroke-width="2.5" stroke-linecap="round"/><circle cx="1010" cy="167" r="6.5" fill="#2a64b8" stroke="#c8d4e0" stroke-width="1.5"/><ellipse cx="1010" cy="166" rx="3" ry="2" fill="#8fb0e0"/><rect x="1027" y="158.5" width="21" height="20.5" fill="#e0e0e0"/><rect x="1050" y="158.5" width="21" height="20.5" fill="#e8e8e8"/><rect x="3" y="767" width="32" height="21" fill="#e6e6e6"/><rect x="22.5" y="768" width="0.8" height="19" fill="#bbb"/><path d="M25 774H32L28.5 778Z" fill="#111"/></svg><svg class="a" style="left:1029px;top:160px" width="17" height="17" viewBox="0 0 17 17"><path d="M8.50,0.34 L10.09,0.50 L10.91,2.69 L11.99,3.27 L14.27,2.73 L15.28,3.97 L14.31,6.09 L14.67,7.27 L16.66,8.50 L16.50,10.09 L14.31,10.91 L13.73,11.99 L14.27,14.27 L13.03,15.28 L10.91,14.31 L9.73,14.67 L8.50,16.66 L6.91,16.50 L6.09,14.31 L5.01,13.73 L2.73,14.27 L1.72,13.03 L2.69,10.91 L2.33,9.73 L0.34,8.50 L0.50,6.91 L2.69,6.09 L3.27,5.01 L2.73,2.73 L3.97,1.72 L6.09,2.69 L7.27,2.33Z" fill="#e4e9ed" stroke="#60707b" stroke-width="1" stroke-linejoin="round"/><circle cx="8.5" cy="8.5" r="3.23" fill="#3c4c57"/><ellipse cx="9.69" cy="7.99" rx="1.70" ry="2.55" fill="#f4f6f8"/></svg><div class="a" style="left:1071px;top:157px;width:2px;height:632px;background:#dcdcdc;"></div><div class="a" style="left:1073px;top:157px;width:205px;height:632px;background:#f0f0f0;"></div><div class="a" style="left:1073px;top:788px;width:205px;height:1px;background:#d8d8d8;"></div><div class="a" style="left:1257px;top:177px;width:1px;height:611px;background:#e4e4e4;"></div><div class="a" style="left:1073px;top:156px;width:205px;height:1px;background:#d6d6d6;"></div><svg class="a" style="left:1076px;top:163px" width="13" height="9" viewBox="0 0 13 9"><path d="M0.5 3H7V0.5L12.5 4.5L7 8.5V6H0.5Z" fill="#58b848" stroke="#4a9a3c" stroke-width="0.5"/></svg><div class="a" style="left:1073px;top:177px;width:180px;height:74px;background:#fff;"></div><div class="a" style="left:1077px;top:181px;width:173px;height:68px;background:#f0f0f0;"></div><div class="a" style="left:1077px;top:181px;width:13px;height:13px;background:#fff;border:1px solid #333"></div><svg class="a" style="left:1077px;top:181px" width="13" height="13" viewBox="0 0 13 13"><path d="M2.5 6.5L5 9.5L10.5 3" fill="none" stroke="#222" stroke-width="1.2"/></svg><div class="btn" style="left:1227px;top:181px;width:22px;height:14px;background:#e1e1e1;border-color:#c0c0c0"></div><svg class="a" style="left:1231px;top:181px" width="14" height="14" viewBox="0 0 14 14"><path d="M7.00,0.28 L8.31,0.41 L8.98,2.21 L9.88,2.69 L11.75,2.25 L12.59,3.27 L11.79,5.02 L12.08,5.99 L13.72,7.00 L13.59,8.31 L11.79,8.98 L11.31,9.88 L11.75,11.75 L10.73,12.59 L8.98,11.79 L8.01,12.08 L7.00,13.72 L5.69,13.59 L5.02,11.79 L4.12,11.31 L2.25,11.75 L1.41,10.73 L2.21,8.98 L1.92,8.01 L0.28,7.00 L0.41,5.69 L2.21,5.02 L2.69,4.12 L2.25,2.25 L3.27,1.41 L5.02,2.21 L5.99,1.92Z" fill="#e4e9ed" stroke="#60707b" stroke-width="1" stroke-linejoin="round"/><circle cx="7.0" cy="7.0" r="2.66" fill="#3c4c57"/><ellipse cx="7.98" cy="6.58" rx="1.40" ry="2.10" fill="#f4f6f8"/></svg><div class="cmb" style="left:1147px;top:197px;width:102px;height:17px;border-color:#8a8a8a"></div><svg class="a" style="left:1234.5px;top:202px" width="9" height="6" viewBox="0 0 9 6"><path d="M0.8 1L4.5 4.8L8.2 1" fill="none" stroke="#555" stroke-width="1.15"/></svg><div class="cmb" style="left:1147px;top:214px;width:102px;height:17px;border-color:#8a8a8a"></div><svg class="a" style="left:1234.5px;top:219px" width="9" height="6" viewBox="0 0 9 6"><path d="M0.8 1L4.5 4.8L8.2 1" fill="none" stroke="#555" stroke-width="1.15"/></svg><div class="a" style="left:1078px;top:232px;width:172px;height:18px;background:#c2dcf0;border:1px solid #98c4ec"></div><svg class="a" style="left:1160px;top:235px" width="8" height="12" viewBox="0 0 8 12"><path d="M2.5 0.5H5.5V7H7.5L4 11.5L0.5 7H2.5Z" fill="#5cb848" stroke="#3f8a34" stroke-width="0.5"/></svg><svg class="a" style="left:1138px;top:199px" width="18" height="45" viewBox="0 0 18 45"><ellipse cx="9" cy="10" rx="8" ry="4.5" fill="#ee50d0" opacity="0.92"/><path d="M3.5 12L9 15.5L14.5 12Z" fill="#ff10c0"/><ellipse cx="9" cy="36" rx="8" ry="4.5" fill="#ee50d0" opacity="0.92"/><path d="M3.5 34L9 30.5L14.5 34Z" fill="#ff10c0"/><path d="M9 15.5V30.5" stroke="#333" stroke-width="0.8"/></svg><svg class="a" style="left:1077px;top:259px" width="17" height="17" viewBox="0 0 17 17"><path d="M8.50,0.34 L10.09,0.50 L10.91,2.69 L11.99,3.27 L14.27,2.73 L15.28,3.97 L14.31,6.09 L14.67,7.27 L16.66,8.50 L16.50,10.09 L14.31,10.91 L13.73,11.99 L14.27,14.27 L13.03,15.28 L10.91,14.31 L9.73,14.67 L8.50,16.66 L6.91,16.50 L6.09,14.31 L5.01,13.73 L2.73,14.27 L1.72,13.03 L2.69,10.91 L2.33,9.73 L0.34,8.50 L0.50,6.91 L2.69,6.09 L3.27,5.01 L2.73,2.73 L3.97,1.72 L6.09,2.69 L7.27,2.33Z" fill="#e4e9ed" stroke="#60707b" stroke-width="1" stroke-linejoin="round"/><circle cx="8.5" cy="8.5" r="3.23" fill="#3c4c57"/><ellipse cx="9.69" cy="7.99" rx="1.70" ry="2.55" fill="#f4f6f8"/></svg><svg class="a" style="left:1240px;top:265px" width="8" height="5" viewBox="0 0 8 5"><path d="M0 0H8L4 5Z" fill="#222"/></svg><div class="btn" style="left:1074px;top:281px;width:178px;height:22px;background:#e1e1e1;border-color:#c6c6c6"></div><svg class="a" style="left:1078px;top:286px" width="12" height="12" viewBox="0 0 12 12"><path d="M6 1V11M1 6H11" stroke="#48b828" stroke-width="3"/></svg><svg class="a" style="left:1240px;top:290px" width="8" height="5" viewBox="0 0 8 5"><path d="M0 0H8L4 5Z" fill="#222"/></svg><div class="a" style="left:1074px;top:304px;width:179px;height:58px;background:#f0f0f0;border:3px solid #ffd000"></div><div class="a" style="left:1077px;top:309px;width:13px;height:13px;background:#fff;border:1px solid #333"></div><svg class="a" style="left:1077px;top:309px" width="13" height="13" viewBox="0 0 13 13"><path d="M2.5 6.5L5 9.5L10.5 3" fill="none" stroke="#222" stroke-width="1.2"/></svg><div class="btn" style="left:1227px;top:309px;width:22px;height:13px;background:#e1e1e1;border-color:#c0c0c0"></div><svg class="a" style="left:1231px;top:309px" width="13" height="13" viewBox="0 0 13 13"><path d="M6.50,0.26 L7.72,0.38 L8.34,2.06 L9.17,2.50 L10.91,2.09 L11.69,3.03 L10.94,4.66 L11.22,5.56 L12.74,6.50 L12.62,7.72 L10.94,8.34 L10.50,9.17 L10.91,10.91 L9.97,11.69 L8.34,10.94 L7.44,11.22 L6.50,12.74 L5.28,12.62 L4.66,10.94 L3.83,10.50 L2.09,10.91 L1.31,9.97 L2.06,8.34 L1.78,7.44 L0.26,6.50 L0.38,5.28 L2.06,4.66 L2.50,3.83 L2.09,2.09 L3.03,1.31 L4.66,2.06 L5.56,1.78Z" fill="#e4e9ed" stroke="#60707b" stroke-width="1" stroke-linejoin="round"/><circle cx="6.5" cy="6.5" r="2.47" fill="#3c4c57"/><ellipse cx="7.41" cy="6.11" rx="1.30" ry="1.95" fill="#f4f6f8"/></svg><div class="cmb" style="left:1145px;top:325px;width:104px;height:16px;border-color:#8a8a8a"></div><svg class="a" style="left:1234.5px;top:330px" width="9" height="6" viewBox="0 0 9 6"><path d="M0.8 1L4.5 4.8L8.2 1" fill="none" stroke="#555" stroke-width="1.15"/></svg><div class="cmb" style="left:1145px;top:342px;width:104px;height:16px;border-color:#8a8a8a"></div><svg class="a" style="left:1234.5px;top:347px" width="9" height="6" viewBox="0 0 9 6"><path d="M0.8 1L4.5 4.8L8.2 1" fill="none" stroke="#555" stroke-width="1.15"/></svg><div class="a" style="left:1074px;top:363px;width:179px;height:57px;background:#f0f0f0;border:3px solid #10c0f8"></div><div class="a" style="left:1077px;top:368px;width:13px;height:13px;background:#fff;border:1px solid #333"></div><svg class="a" style="left:1077px;top:368px" width="13" height="13" viewBox="0 0 13 13"><path d="M2.5 6.5L5 9.5L10.5 3" fill="none" stroke="#222" stroke-width="1.2"/></svg><div class="btn" style="left:1227px;top:368px;width:22px;height:13px;background:#e1e1e1;border-color:#c0c0c0"></div><svg class="a" style="left:1231px;top:368px" width="13" height="13" viewBox="0 0 13 13"><path d="M6.50,0.26 L7.72,0.38 L8.34,2.06 L9.17,2.50 L10.91,2.09 L11.69,3.03 L10.94,4.66 L11.22,5.56 L12.74,6.50 L12.62,7.72 L10.94,8.34 L10.50,9.17 L10.91,10.91 L9.97,11.69 L8.34,10.94 L7.44,11.22 L6.50,12.74 L5.28,12.62 L4.66,10.94 L3.83,10.50 L2.09,10.91 L1.31,9.97 L2.06,8.34 L1.78,7.44 L0.26,6.50 L0.38,5.28 L2.06,4.66 L2.50,3.83 L2.09,2.09 L3.03,1.31 L4.66,2.06 L5.56,1.78Z" fill="#e4e9ed" stroke="#60707b" stroke-width="1" stroke-linejoin="round"/><circle cx="6.5" cy="6.5" r="2.47" fill="#3c4c57"/><ellipse cx="7.41" cy="6.11" rx="1.30" ry="1.95" fill="#f4f6f8"/></svg><div class="cmb" style="left:1145px;top:384px;width:104px;height:16px;border-color:#8a8a8a"></div><svg class="a" style="left:1234.5px;top:389px" width="9" height="6" viewBox="0 0 9 6"><path d="M0.8 1L4.5 4.8L8.2 1" fill="none" stroke="#555" stroke-width="1.15"/></svg><div class="cmb" style="left:1145px;top:401px;width:104px;height:16px;border-color:#8a8a8a"></div><svg class="a" style="left:1234.5px;top:406px" width="9" height="6" viewBox="0 0 9 6"><path d="M0.8 1L4.5 4.8L8.2 1" fill="none" stroke="#555" stroke-width="1.15"/></svg><div class="a" style="left:1074px;top:421px;width:179px;height:58px;background:#f0f0f0;border:3px solid #ff10ff"></div><div class="a" style="left:1077px;top:426px;width:13px;height:13px;background:#fff;border:1px solid #333"></div><svg class="a" style="left:1077px;top:426px" width="13" height="13" viewBox="0 0 13 13"><path d="M2.5 6.5L5 9.5L10.5 3" fill="none" stroke="#222" stroke-width="1.2"/></svg><div class="btn" style="left:1227px;top:426px;width:22px;height:13px;background:#e1e1e1;border-color:#c0c0c0"></div><svg class="a" style="left:1231px;top:426px" width="13" height="13" viewBox="0 0 13 13"><path d="M6.50,0.26 L7.72,0.38 L8.34,2.06 L9.17,2.50 L10.91,2.09 L11.69,3.03 L10.94,4.66 L11.22,5.56 L12.74,6.50 L12.62,7.72 L10.94,8.34 L10.50,9.17 L10.91,10.91 L9.97,11.69 L8.34,10.94 L7.44,11.22 L6.50,12.74 L5.28,12.62 L4.66,10.94 L3.83,10.50 L2.09,10.91 L1.31,9.97 L2.06,8.34 L1.78,7.44 L0.26,6.50 L0.38,5.28 L2.06,4.66 L2.50,3.83 L2.09,2.09 L3.03,1.31 L4.66,2.06 L5.56,1.78Z" fill="#e4e9ed" stroke="#60707b" stroke-width="1" stroke-linejoin="round"/><circle cx="6.5" cy="6.5" r="2.47" fill="#3c4c57"/><ellipse cx="7.41" cy="6.11" rx="1.30" ry="1.95" fill="#f4f6f8"/></svg><div class="cmb" style="left:1145px;top:442px;width:104px;height:16px;border-color:#8a8a8a"></div><svg class="a" style="left:1234.5px;top:447px" width="9" height="6" viewBox="0 0 9 6"><path d="M0.8 1L4.5 4.8L8.2 1" fill="none" stroke="#555" stroke-width="1.15"/></svg><div class="cmb" style="left:1145px;top:459px;width:104px;height:16px;border-color:#8a8a8a"></div><svg class="a" style="left:1234.5px;top:464px" width="9" height="6" viewBox="0 0 9 6"><path d="M0.8 1L4.5 4.8L8.2 1" fill="none" stroke="#555" stroke-width="1.15"/></svg><div class="a" style="left:1074px;top:480px;width:179px;height:21px;background:#f0f0f0;border:3px solid #00ee00"></div><div class="a" style="left:1077px;top:485px;width:13px;height:13px;background:#fff;border:1px solid #333"></div><div class="btn" style="left:1227px;top:485px;width:22px;height:13px;background:#e1e1e1;border-color:#c0c0c0"></div><svg class="a" style="left:1231px;top:485px" width="13" height="13" viewBox="0 0 13 13"><path d="M6.50,0.26 L7.72,0.38 L8.34,2.06 L9.17,2.50 L10.91,2.09 L11.69,3.03 L10.94,4.66 L11.22,5.56 L12.74,6.50 L12.62,7.72 L10.94,8.34 L10.50,9.17 L10.91,10.91 L9.97,11.69 L8.34,10.94 L7.44,11.22 L6.50,12.74 L5.28,12.62 L4.66,10.94 L3.83,10.50 L2.09,10.91 L1.31,9.97 L2.06,8.34 L1.78,7.44 L0.26,6.50 L0.38,5.28 L2.06,4.66 L2.50,3.83 L2.09,2.09 L3.03,1.31 L4.66,2.06 L5.56,1.78Z" fill="#e4e9ed" stroke="#60707b" stroke-width="1" stroke-linejoin="round"/><circle cx="6.5" cy="6.5" r="2.47" fill="#3c4c57"/><ellipse cx="7.41" cy="6.11" rx="1.30" ry="1.95" fill="#f4f6f8"/></svg><svg class="a" style="left:1260px;top:180px" width="12" height="8" viewBox="0 0 12 8"><path d="M1 7L6 2L11 7" fill="none" stroke="#c0c0c0" stroke-width="1.2"/></svg><svg class="a" style="left:1260px;top:774px" width="12" height="8" viewBox="0 0 12 8"><path d="M1 1L6 6L11 1" fill="none" stroke="#c0c0c0" stroke-width="1.2"/></svg><div class="a" style="left:1px;top:789px;width:1277px;height:2px;background:#ffffff;"></div><div class="a" style="left:771px;top:794px;width:1px;height:18px;background:#d8d8d8;"></div><div class="btn" style="left:776px;top:796px;width:86px;height:15px;background:#e1e1e1;border-color:#b8b8b8"></div><div class="btn" style="left:869px;top:796px;width:213px;height:15px;background:#e6e6e6;border-color:#c8c8c8"></div><div class="btn" style="left:1089px;top:796px;width:78px;height:15px;background:#e6e6e6;border-color:#c8c8c8"></div><svg class="a" style="left:1092px;top:798px" width="14" height="10" viewBox="0 0 14 10"><path d="M1 8L4 2H13L10 8Z" fill="#c8c8c8" stroke="#888" stroke-width="0.8"/></svg><div class="btn" style="left:1174px;top:796px;width:88px;height:15px;background:#e6e6e6;border-color:#c8c8c8"></div><svg class="a" style="left:1251px;top:805px" width="7" height="4" viewBox="0 0 7 4"><path d="M0 0H7L3.5 4Z" fill="#222"/></svg><svg class="a" style="left:1267px;top:800px" width="11" height="11" viewBox="0 0 11 11"><g fill="#b0b0b0"><rect x="8" y="0" width="2" height="2"/><rect x="5" y="3" width="2" height="2"/><rect x="8" y="3" width="2" height="2"/><rect x="2" y="6" width="2" height="2"/><rect x="5" y="6" width="2" height="2"/><rect x="8" y="6" width="2" height="2"/></g></svg><svg class="a" style="left:0;top:0;white-space:pre" width="1280" height="814" viewBox="0 0 1280 814" font-family="Liberation Sans"><text x="28.00" y="20" font-size="12.3" fill="#000" textLength="151.01" lengthAdjust="spacingAndGlyphs">WaveForms (new workspace)</text><text x="7.00" y="43" font-size="11.2" fill="#2e2e2e" textLength="53.01" lengthAdjust="spacingAndGlyphs">Workspace</text><rect x="36.95" y="44.5" width="5.92" height="1" fill="#2e2e2e"/><text x="73.50" y="43" font-size="11.2" fill="#2e2e2e" textLength="38.00" lengthAdjust="spacingAndGlyphs">Control</text><rect x="82.01" y="44.5" width="6.56" height="1" fill="#2e2e2e"/><text x="124.00" y="43" font-size="11.2" fill="#2e2e2e" textLength="41.52" lengthAdjust="spacingAndGlyphs">Settings</text><rect x="124.00" y="44.5" width="7.66" height="1" fill="#2e2e2e"/><text x="179.00" y="43" font-size="11.2" fill="#2e2e2e" textLength="36.94" lengthAdjust="spacingAndGlyphs">Window</text><rect x="179.00" y="44.5" width="9.80" height="1" fill="#2e2e2e"/><text x="229.50" y="43" font-size="11.2" fill="#2e2e2e" textLength="22.48" lengthAdjust="spacingAndGlyphs">Help</text><rect x="229.50" y="44.5" width="7.90" height="1" fill="#2e2e2e"/><text x="12.50" y="64.5" font-size="11.2" fill="#333333" textLength="44.52" lengthAdjust="spacingAndGlyphs">Welcome</text><text x="103.00" y="64.5" font-size="11.2" fill="#333333" textLength="22.73" lengthAdjust="spacingAndGlyphs">Help</text><text x="188.75" y="64.5" font-size="11.2" fill="#333333" textLength="40.00" lengthAdjust="spacingAndGlyphs">Scope 1</text><text x="8.75" y="85" font-size="11.2" fill="#2e2e2e" textLength="16.25" lengthAdjust="spacingAndGlyphs">File</text><rect x="8.75" y="86.5" width="6.16" height="1" fill="#2e2e2e"/><text x="38.75" y="85" font-size="11.2" fill="#2e2e2e" textLength="37.50" lengthAdjust="spacingAndGlyphs">Control</text><rect x="38.75" y="86.5" width="8.40" height="1" fill="#2e2e2e"/><text x="89.50" y="85" font-size="11.2" fill="#2e2e2e" textLength="23.43" lengthAdjust="spacingAndGlyphs">View</text><rect x="89.50" y="86.5" width="7.27" height="1" fill="#2e2e2e"/><text x="125.75" y="85" font-size="11.2" fill="#2e2e2e" textLength="37.44" lengthAdjust="spacingAndGlyphs">Window</text><rect x="125.75" y="86.5" width="9.94" height="1" fill="#2e2e2e"/><text x="10.50" y="105" font-size="11.2" fill="#2e2e2e" textLength="31.27" lengthAdjust="spacingAndGlyphs">Export</text><text x="61.25" y="105" font-size="11.2" fill="#2e2e2e" textLength="20.73" lengthAdjust="spacingAndGlyphs">+XY</text><text x="95.75" y="105" font-size="11.2" fill="#2e2e2e" textLength="45.50" lengthAdjust="spacingAndGlyphs">+XYZ 3D</text><text x="155.00" y="105" font-size="11.2" fill="#2e2e2e" textLength="34.27" lengthAdjust="spacingAndGlyphs">+Zoom</text><text x="203.25" y="105" font-size="11.2" fill="#2e2e2e" textLength="18.02" lengthAdjust="spacingAndGlyphs">FFT</text><text x="235.75" y="105" font-size="11.2" fill="#2e2e2e" textLength="64.27" lengthAdjust="spacingAndGlyphs">Spectrogram</text><text x="313.00" y="105" font-size="11.2" fill="#2e2e2e" textLength="83.24" lengthAdjust="spacingAndGlyphs">Spectrogram 3D</text><text x="410.50" y="105" font-size="11.2" fill="#2e2e2e" textLength="49.48" lengthAdjust="spacingAndGlyphs">Histogram</text><text x="474.25" y="105" font-size="11.2" fill="#2e2e2e" textLength="59.52" lengthAdjust="spacingAndGlyphs">Persistence</text><text x="548.25" y="105" font-size="11.2" fill="#2e2e2e" textLength="22.96" lengthAdjust="spacingAndGlyphs">Data</text><text x="585.50" y="105" font-size="11.2" fill="#2e2e2e" textLength="73.77" lengthAdjust="spacingAndGlyphs">Measurements</text><text x="673.25" y="105" font-size="11.2" fill="#2e2e2e" textLength="38.51" lengthAdjust="spacingAndGlyphs">Logging</text><text x="725.00" y="105" font-size="11.2" fill="#2e2e2e" textLength="27.00" lengthAdjust="spacingAndGlyphs">Audio</text><text x="766.25" y="105" font-size="11.2" fill="#2e2e2e" textLength="51.24" lengthAdjust="spacingAndGlyphs">X Cursors</text><text x="831.25" y="105" font-size="11.2" fill="#2e2e2e" textLength="50.73" lengthAdjust="spacingAndGlyphs">Y Cursors</text><text x="896.25" y="105" font-size="11.2" fill="#2e2e2e" textLength="30.01" lengthAdjust="spacingAndGlyphs">Notes</text><text x="945.50" y="105" font-size="11.2" fill="#2e2e2e" textLength="30.77" lengthAdjust="spacingAndGlyphs">Digital</text><text x="989.50" y="105" font-size="11.2" fill="#8a8a8a" textLength="74.27" lengthAdjust="spacingAndGlyphs">Measurements</text><text x="35.50" y="138.4" font-size="11.5" fill="#333333" textLength="29.52" lengthAdjust="spacingAndGlyphs">Single</text><text x="120.75" y="138.4" font-size="11.5" fill="#333333" textLength="24.26" lengthAdjust="spacingAndGlyphs">Stop</text><text x="178.25" y="126.5" font-size="11.2" fill="#333333" textLength="29.23" lengthAdjust="spacingAndGlyphs">Mode:</text><text x="178.00" y="149" font-size="11.2" fill="#8c8c8c" textLength="35.74" lengthAdjust="spacingAndGlyphs">Buffer:</text><text x="258.25" y="126.8" font-size="11.2" fill="#2e2e2e" textLength="46.77" lengthAdjust="spacingAndGlyphs">Repeated</text><text x="381.25" y="126.5" font-size="11.2" fill="#2e2e2e" textLength="23.24" lengthAdjust="spacingAndGlyphs">Auto</text><text x="238.00" y="149" font-size="11.2" fill="#9a9a9a" textLength="12.01" lengthAdjust="spacingAndGlyphs">10</text><text x="399.50" y="149" font-size="11.2" fill="#2e2e2e" textLength="45.51" lengthAdjust="spacingAndGlyphs">Auto Set</text><text x="472.50" y="126.5" font-size="11.2" fill="#333333" textLength="40.00" lengthAdjust="spacingAndGlyphs">Source:</text><text x="473.00" y="149" font-size="11.2" fill="#333333" textLength="26.99" lengthAdjust="spacingAndGlyphs">Type:</text><text x="533.75" y="126.5" font-size="11.2" fill="#2e2e2e" textLength="51.26" lengthAdjust="spacingAndGlyphs">Channel 2</text><text x="553.25" y="149" font-size="11.2" fill="#2e2e2e" textLength="23.01" lengthAdjust="spacingAndGlyphs">Edge</text><text x="663.00" y="126.5" font-size="11.2" fill="#333333" textLength="50.73" lengthAdjust="spacingAndGlyphs">Condition:</text><text x="663.75" y="149" font-size="11.2" fill="#9a9a9a" textLength="56.26" lengthAdjust="spacingAndGlyphs">LCondition:</text><text x="760.50" y="126.8" font-size="11.2" fill="#2e2e2e" textLength="29.52" lengthAdjust="spacingAndGlyphs">Rising</text><text x="760.50" y="149" font-size="11.2" fill="#9a9a9a" textLength="23.26" lengthAdjust="spacingAndGlyphs">Less</text><text x="874.50" y="126.5" font-size="11.2" fill="#333333" textLength="29.74" lengthAdjust="spacingAndGlyphs">Level:</text><text x="874.50" y="149" font-size="11.2" fill="#9a9a9a" textLength="37.27" lengthAdjust="spacingAndGlyphs">Length:</text><text x="935.00" y="126.5" font-size="11.2" fill="#2e2e2e" textLength="28.21" lengthAdjust="spacingAndGlyphs">1.6  V</text><text x="935.00" y="149" font-size="11.2" fill="#a0a0a0" textLength="36.19" lengthAdjust="spacingAndGlyphs">100  ns</text><text x="1065.00" y="126.5" font-size="11.2" fill="#333333" textLength="28.27" lengthAdjust="spacingAndGlyphs">Hyst.:</text><text x="1065.00" y="149" font-size="11.2" fill="#333333" textLength="41.23" lengthAdjust="spacingAndGlyphs">HoldOff:</text><text x="1126.25" y="126.5" font-size="11.2" fill="#2e2e2e" textLength="22.99" lengthAdjust="spacingAndGlyphs">Auto</text><text x="1126.25" y="149" font-size="11.2" fill="#2e2e2e" textLength="34.99" lengthAdjust="spacingAndGlyphs">100  ns</text><text x="2.00" y="174" font-size="11.5" fill="#e8c000" textLength="26.01" lengthAdjust="spacingAndGlyphs">C1  V</text><text x="47.00" y="174" font-size="11.5" fill="#10a8e0" textLength="26.01" lengthAdjust="spacingAndGlyphs">C2  V</text><text x="91.50" y="174" font-size="11.5" fill="#d000d0" textLength="26.51" lengthAdjust="spacingAndGlyphs">C3  V</text><text x="3.50" y="190.8" font-size="11.5" fill="#e8c000" textLength="6.20" lengthAdjust="spacingAndGlyphs">5</text><text x="48.00" y="190.8" font-size="11.5" fill="#10a8e0" textLength="12.99" lengthAdjust="spacingAndGlyphs">10</text><text x="92.50" y="190.8" font-size="11.5" fill="#d000d0" textLength="6.20" lengthAdjust="spacingAndGlyphs">9</text><text x="3.50" y="248.3" font-size="11.5" fill="#e8c000" textLength="6.20" lengthAdjust="spacingAndGlyphs">4</text><text x="48.00" y="248.3" font-size="11.5" fill="#10a8e0" textLength="6.20" lengthAdjust="spacingAndGlyphs">8</text><text x="92.50" y="248.3" font-size="11.5" fill="#d000d0" textLength="6.20" lengthAdjust="spacingAndGlyphs">8</text><text x="3.50" y="305.8" font-size="11.5" fill="#e8c000" textLength="6.20" lengthAdjust="spacingAndGlyphs">3</text><text x="48.00" y="305.8" font-size="11.5" fill="#10a8e0" textLength="6.20" lengthAdjust="spacingAndGlyphs">6</text><text x="92.50" y="305.8" font-size="11.5" fill="#d000d0" textLength="6.20" lengthAdjust="spacingAndGlyphs">7</text><text x="3.50" y="363.3" font-size="11.5" fill="#e8c000" textLength="6.20" lengthAdjust="spacingAndGlyphs">2</text><text x="48.00" y="363.3" font-size="11.5" fill="#10a8e0" textLength="6.20" lengthAdjust="spacingAndGlyphs">4</text><text x="92.50" y="363.3" font-size="11.5" fill="#d000d0" textLength="6.20" lengthAdjust="spacingAndGlyphs">6</text><text x="3.50" y="420.8" font-size="11.5" fill="#e8c000" textLength="6.20" lengthAdjust="spacingAndGlyphs">1</text><text x="48.00" y="420.8" font-size="11.5" fill="#10a8e0" textLength="6.20" lengthAdjust="spacingAndGlyphs">2</text><text x="92.50" y="420.8" font-size="11.5" fill="#d000d0" textLength="6.20" lengthAdjust="spacingAndGlyphs">5</text><text x="3.50" y="478.3" font-size="11.5" fill="#e8c000" textLength="6.20" lengthAdjust="spacingAndGlyphs">0</text><text x="48.00" y="478.3" font-size="11.5" fill="#10a8e0" textLength="6.20" lengthAdjust="spacingAndGlyphs">0</text><text x="92.50" y="478.3" font-size="11.5" fill="#d000d0" textLength="6.20" lengthAdjust="spacingAndGlyphs">4</text><text x="3.50" y="535.8" font-size="11.5" fill="#e8c000" textLength="9.51" lengthAdjust="spacingAndGlyphs">−1</text><text x="48.00" y="535.8" font-size="11.5" fill="#10a8e0" textLength="9.51" lengthAdjust="spacingAndGlyphs">−2</text><text x="92.50" y="535.8" font-size="11.5" fill="#d000d0" textLength="6.20" lengthAdjust="spacingAndGlyphs">3</text><text x="3.50" y="593.3" font-size="11.5" fill="#e8c000" textLength="9.51" lengthAdjust="spacingAndGlyphs">−2</text><text x="48.00" y="593.3" font-size="11.5" fill="#10a8e0" textLength="9.51" lengthAdjust="spacingAndGlyphs">−4</text><text x="92.50" y="593.3" font-size="11.5" fill="#d000d0" textLength="6.20" lengthAdjust="spacingAndGlyphs">2</text><text x="3.50" y="650.8" font-size="11.5" fill="#e8c000" textLength="9.51" lengthAdjust="spacingAndGlyphs">−3</text><text x="48.00" y="650.8" font-size="11.5" fill="#10a8e0" textLength="9.51" lengthAdjust="spacingAndGlyphs">−6</text><text x="92.50" y="650.8" font-size="11.5" fill="#d000d0" textLength="6.20" lengthAdjust="spacingAndGlyphs">1</text><text x="3.50" y="708.3" font-size="11.5" fill="#e8c000" textLength="9.51" lengthAdjust="spacingAndGlyphs">−4</text><text x="48.00" y="708.3" font-size="11.5" fill="#10a8e0" textLength="9.51" lengthAdjust="spacingAndGlyphs">−8</text><text x="92.50" y="708.3" font-size="11.5" fill="#d000d0" textLength="6.20" lengthAdjust="spacingAndGlyphs">0</text><text x="3.50" y="765.8" font-size="11.5" fill="#e8c000" textLength="9.51" lengthAdjust="spacingAndGlyphs">−5</text><text x="48.00" y="765.8" font-size="11.5" fill="#10a8e0" textLength="16.31" lengthAdjust="spacingAndGlyphs">−10</text><text x="92.50" y="765.8" font-size="11.5" fill="#d000d0" textLength="9.51" lengthAdjust="spacingAndGlyphs">−1</text><text x="125.00" y="783" font-size="11.5" fill="#e6e6e6" textLength="40.02" lengthAdjust="spacingAndGlyphs">−3.4  ms</text><text x="215.00" y="783" font-size="11.5" fill="#e6e6e6" textLength="39.02" lengthAdjust="spacingAndGlyphs">−1.4  ms</text><text x="304.60" y="783" font-size="11.5" fill="#e6e6e6" textLength="34.01" lengthAdjust="spacingAndGlyphs">0.6  ms</text><text x="395.06" y="783" font-size="11.5" fill="#e6e6e6" textLength="34.01" lengthAdjust="spacingAndGlyphs">2.6  ms</text><text x="485.52" y="783" font-size="11.5" fill="#e6e6e6" textLength="34.01" lengthAdjust="spacingAndGlyphs">4.6  ms</text><text x="575.98" y="783" font-size="11.5" fill="#e6e6e6" textLength="34.01" lengthAdjust="spacingAndGlyphs">6.6  ms</text><text x="666.44" y="783" font-size="11.5" fill="#e6e6e6" textLength="34.01" lengthAdjust="spacingAndGlyphs">8.6  ms</text><text x="753.90" y="783" font-size="11.5" fill="#e6e6e6" textLength="40.00" lengthAdjust="spacingAndGlyphs">10.6  ms</text><text x="844.36" y="783" font-size="11.5" fill="#e6e6e6" textLength="40.00" lengthAdjust="spacingAndGlyphs">12.6  ms</text><text x="934.82" y="783" font-size="11.5" fill="#e6e6e6" textLength="40.00" lengthAdjust="spacingAndGlyphs">14.6  ms</text><text x="1025.28" y="783" font-size="11.5" fill="#e6e6e6" textLength="40.00" lengthAdjust="spacingAndGlyphs">16.6  ms</text><text x="189.00" y="173.6" font-size="11.5" fill="#f4f4f4" textLength="30.01" lengthAdjust="spacingAndGlyphs" font-weight="bold">Trig’d</text><text x="252.20" y="173.6" font-size="11.5" fill="#f0c800" textLength="13.80" lengthAdjust="spacingAndGlyphs">C1</text><text x="276.60" y="173.6" font-size="11.5" fill="#20b8f0" textLength="14.60" lengthAdjust="spacingAndGlyphs">C2</text><text x="300.40" y="173.6" font-size="11.5" fill="#ff20ff" textLength="15.20" lengthAdjust="spacingAndGlyphs">C3</text><text x="324.30" y="173.6" font-size="11.5" fill="#20e020" textLength="14.90" lengthAdjust="spacingAndGlyphs">C4</text><text x="347.70" y="173.6" font-size="11.5" fill="#e6e6e6" textLength="341.00" lengthAdjust="spacingAndGlyphs">32768 samples at 1.4925 MHz | 2021-12-29 11:12:44.293.678.090</text><text x="1055.00" y="174" font-size="12" fill="#111" textLength="11.01" lengthAdjust="spacingAndGlyphs">Y</text><text x="8.00" y="783" font-size="12" fill="#111" textLength="9.00" lengthAdjust="spacingAndGlyphs">X</text><text x="1095.00" y="192.6" font-size="11.5" fill="#333333" textLength="23.38" lengthAdjust="spacingAndGlyphs">Time</text><text x="1082.00" y="209" font-size="11.2" fill="#333333" textLength="42.51" lengthAdjust="spacingAndGlyphs">Position:</text><text x="1082.00" y="227" font-size="11.2" fill="#333333" textLength="27.29" lengthAdjust="spacingAndGlyphs">Base:</text><text x="1148.75" y="209" font-size="11.2" fill="#2e2e2e" textLength="33.27" lengthAdjust="spacingAndGlyphs">6.6  ms</text><text x="1148.75" y="227" font-size="11.2" fill="#2e2e2e" textLength="45.01" lengthAdjust="spacingAndGlyphs">2  ms/div</text><text x="1098.00" y="272" font-size="11.5" fill="#333333" textLength="38.38" lengthAdjust="spacingAndGlyphs">Options</text><text x="1093.00" y="296.2" font-size="11.5" fill="#333333" textLength="63.90" lengthAdjust="spacingAndGlyphs">Add Channel</text><text x="1093.80" y="319.6" font-size="11.5" fill="#333333" textLength="98.62" lengthAdjust="spacingAndGlyphs">Channel 1 (Osc. 1)</text><text x="1081.60" y="336.7" font-size="11.2" fill="#333333" textLength="35.18" lengthAdjust="spacingAndGlyphs">Offset:</text><text x="1081.60" y="354" font-size="11.2" fill="#333333" textLength="33.81" lengthAdjust="spacingAndGlyphs">Range:</text><text x="1147.80" y="336.7" font-size="11.2" fill="#2e2e2e" textLength="19.02" lengthAdjust="spacingAndGlyphs">0  V</text><text x="1147.80" y="354" font-size="11.2" fill="#2e2e2e" textLength="38.70" lengthAdjust="spacingAndGlyphs">1  V/div</text><text x="1093.80" y="378.6" font-size="11.5" fill="#333333" textLength="98.62" lengthAdjust="spacingAndGlyphs">Channel 2 (Osc. 2)</text><text x="1081.60" y="395.7" font-size="11.2" fill="#333333" textLength="35.18" lengthAdjust="spacingAndGlyphs">Offset:</text><text x="1081.60" y="413" font-size="11.2" fill="#333333" textLength="33.81" lengthAdjust="spacingAndGlyphs">Range:</text><text x="1147.80" y="395.7" font-size="11.2" fill="#2e2e2e" textLength="19.02" lengthAdjust="spacingAndGlyphs">0  V</text><text x="1147.80" y="413" font-size="11.2" fill="#2e2e2e" textLength="38.70" lengthAdjust="spacingAndGlyphs">2  V/div</text><text x="1093.80" y="436.6" font-size="11.5" fill="#333333" textLength="98.62" lengthAdjust="spacingAndGlyphs">Channel 3 (Osc. 3)</text><text x="1081.60" y="453.7" font-size="11.2" fill="#333333" textLength="35.18" lengthAdjust="spacingAndGlyphs">Offset:</text><text x="1081.60" y="471" font-size="11.2" fill="#333333" textLength="33.81" lengthAdjust="spacingAndGlyphs">Range:</text><text x="1147.80" y="453.7" font-size="11.2" fill="#2e2e2e" textLength="25.21" lengthAdjust="spacingAndGlyphs">−4  V</text><text x="1147.80" y="471" font-size="11.2" fill="#2e2e2e" textLength="38.70" lengthAdjust="spacingAndGlyphs">1  V/div</text><text x="1093.80" y="495.6" font-size="11.5" fill="#333333" textLength="98.62" lengthAdjust="spacingAndGlyphs">Channel 4 (Osc. 4)</text><text x="781.30" y="808" font-size="11.2" fill="#333333" textLength="74.20" lengthAdjust="spacingAndGlyphs">Manual Trigger</text><text x="873.80" y="808" font-size="11.2" fill="#333333" textLength="200.70" lengthAdjust="spacingAndGlyphs">ADP3450 D SN:210018B04920 ETH:ST</text><text x="1105.00" y="808" font-size="11.2" fill="#333333" textLength="46.25" lengthAdjust="spacingAndGlyphs">WF3.16.3</text><text x="1188.75" y="808" font-size="11.2" fill="#333333" textLength="56.26" lengthAdjust="spacingAndGlyphs">Status: OK</text></svg></body></html>
